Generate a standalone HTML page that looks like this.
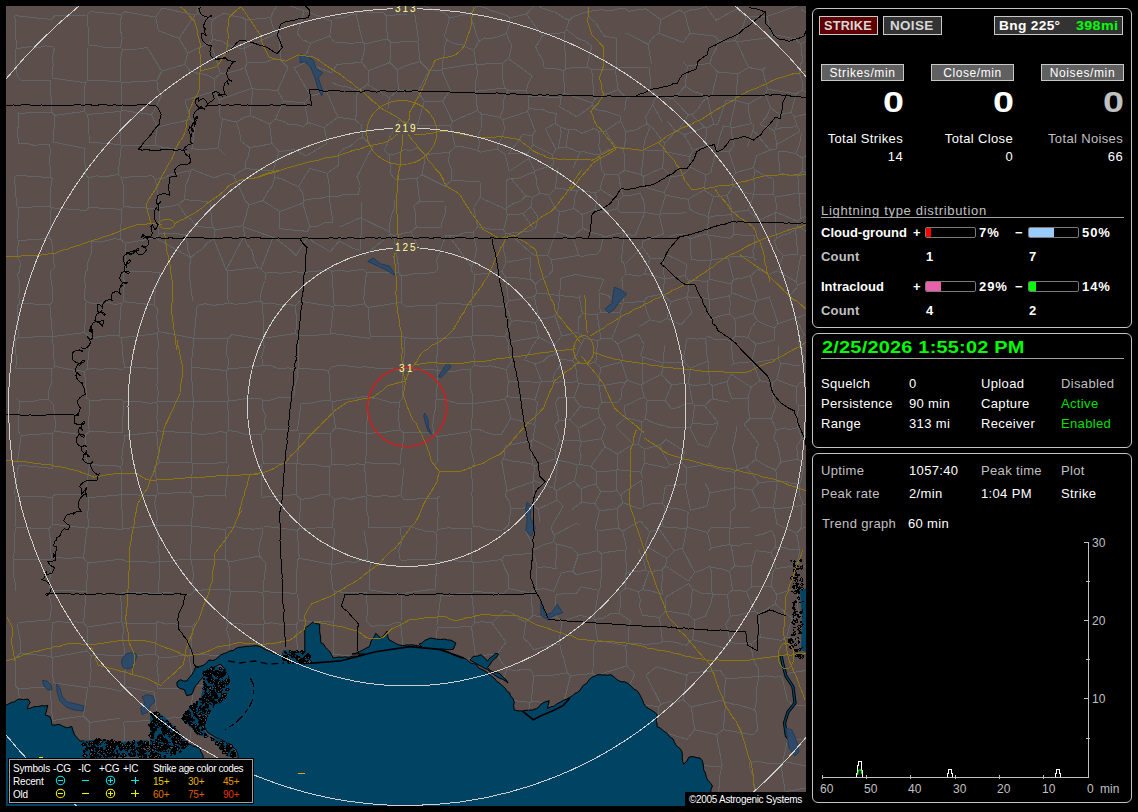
<!DOCTYPE html>
<html><head><meta charset="utf-8">
<style>
html,body{margin:0;padding:0;background:#000;width:1138px;height:812px;overflow:hidden;font-family:"Liberation Sans",sans-serif;}
.a{position:absolute;white-space:pre;line-height:1;}
.box{position:absolute;border:1px solid #c4c4c4;border-radius:6px;box-sizing:border-box;}
.btn{position:absolute;box-sizing:border-box;border:1px solid #c8c8c8;}
.n{font-size:13px;letter-spacing:0.35px;color:#fff;}
.g{color:#c0c0c0;}
.b{font-weight:bold;}
.r{text-align:right;}
.lg{font-size:10px;letter-spacing:-0.2px;}
.bar{position:absolute;width:51px;height:11px;box-sizing:border-box;border:1px solid #7a7a7a;border-radius:2px;overflow:hidden;}
.bar i{position:absolute;left:0;top:0;bottom:0;display:block;}
#map{position:absolute;left:6px;top:6px;width:800px;height:800px;background:#5c4f4b;overflow:hidden;}
#map svg{position:absolute;left:0;top:0;}
</style></head><body>
<div id="map"><svg width="800" height="800" viewBox="6 6 800 800" style="position:absolute;left:0;top:0">
<path d="M158.8,208.7 L124.1,206.7 M158.8,208.7 L159.7,207.5 M159.7,207.5 L155.4,179.3 M124.1,206.7 L123.4,198.7 L124.0,190.8 L123.4,185.5 L121.4,177.4 M121.4,177.4 L152.4,175.8 M152.4,175.8 L155.4,179.3 M118.0,174.3 L121.5,145.5 M118.0,174.3 L121.4,177.4 M121.5,145.5 L154.8,145.5 M158.7,331.5 L193.9,338.3 M158.7,331.5 L157.2,324.9 L156.9,315.9 L157.8,309.2 M197.2,305.5 L193.9,338.3 M118.0,174.3 L110.5,175.9 L102.6,176.8 L96.5,175.8 L88.7,177.9 M88.7,177.9 L88.8,207.4 M124.1,206.7 L121.5,209.3 M88.8,207.4 L121.5,209.3 M20.0,303.3 L18.6,295.7 L19.8,290.2 L19.3,281.5 L17.1,274.5 M20.0,303.3 L49.8,304.8 M49.9,272.5 L51.2,279.8 L52.1,287.0 L52.9,294.7 L52.1,302.2 M17.1,274.5 L19.4,272.2 M49.8,304.8 L52.1,302.2 M17.0,306.4 L20.0,303.3 M85.9,271.4 L84.4,280.1 L85.6,286.5 L84.2,293.4 L85.1,300.2 M54.4,267.4 L49.9,272.5 M17.7,239.5 L18.9,240.6 M18.9,240.6 L17.6,248.4 L17.9,257.4 L20.4,262.9 L19.4,272.2 M299.4,301.1 L333.5,306.6 M299.4,301.1 L295.4,305.9 M295.4,305.9 L296.1,314.6 L296.8,323.3 L295.5,333.4 M329.1,334.7 L298.3,335.7 M329.1,334.7 L330.4,333.3 M330.4,333.3 L333.5,306.6 M295.5,333.4 L298.3,335.7 M810.7,705.4 L818.3,732.0 M810.7,705.4 L819.2,697.2 M820.0,756.2 L813.8,740.3 M818.3,732.0 L813.8,740.3 M232.1,334.5 L262.6,339.4 M262.6,339.4 L263.7,338.2 M263.7,338.2 L262.7,303.4 M228.6,303.6 L235.8,304.1 L244.9,303.7 L253.3,302.0 L260.5,300.9 M260.5,300.9 L262.7,303.4 M197.2,305.5 L204.8,303.7 L213.9,305.3 L221.0,304.5 L228.1,303.2 M193.9,338.3 L194.0,338.4 M194.0,338.4 L227.7,338.7 M227.7,338.7 L232.1,334.5 M295.4,305.9 L288.5,304.3 L279.6,304.8 L270.6,303.0 L262.7,303.4 M295.5,333.4 L263.7,338.2 M85.1,300.2 L86.1,301.4 M86.1,301.4 L84.6,332.5 M49.8,304.8 L52.6,336.5 M84.6,332.5 L52.6,336.5 M88.7,177.9 L85.7,175.3 M121.5,145.5 L120.8,144.6 M85.7,175.3 L84.0,148.2 M89.3,142.2 L120.8,144.6 M155.1,145.2 L155.8,137.5 L157.3,127.0 M155.1,145.2 L162.5,147.3 L173.5,148.6 L180.8,150.3 L189.1,152.7 M157.3,127.0 L190.5,119.4 M191.9,148.6 L195.4,123.4 M195.4,123.4 L190.5,119.4 M151.2,114.7 L157.3,127.0 M151.2,114.7 L154.8,109.7 L158.5,101.7 L161.3,95.8 M185.0,101.7 L188.1,110.7 L190.5,119.4 M209.8,202.3 L201.7,201.1 L192.9,200.1 L184.0,199.9 M184.0,199.9 L184.9,194.0 L186.0,183.8 L189.1,177.1 L190.6,170.7 M214.0,177.9 L191.9,169.3 M190.6,170.7 L191.9,169.3 M159.7,207.5 L169.6,206.6 L178.5,204.5 M155.4,179.3 L163.9,178.1 L170.1,174.4 L175.2,173.9 L185.0,171.8 L190.6,170.7 M178.5,204.5 L184.0,199.9 M154.8,145.5 L155.1,145.2 M87.7,269.7 L85.9,271.4 M121.2,303.8 L114.4,304.3 L105.7,301.9 L99.2,303.4 L92.0,303.2 L86.1,301.4 M121.2,303.8 L123.4,301.6 M123.4,301.6 L123.3,292.0 L124.5,283.2 L122.9,274.5 M87.7,269.7 L87.3,263.5 L91.0,254.2 L91.2,247.5 L91.3,241.1 M125.3,243.2 L125.2,271.7 M125.3,243.2 L120.5,239.3 M91.3,241.1 L100.0,242.1 L107.4,240.6 L113.7,238.7 L120.5,239.3 M122.9,274.5 L125.2,271.7 M192.7,301.2 L189.1,274.3 M157.8,309.2 L154.1,305.1 M154.1,305.1 L154.8,295.8 L155.9,287.6 L158.6,281.3 L159.8,272.2 M154.1,305.1 L123.4,301.6 M125.2,271.7 L159.7,272.1 M159.7,272.1 L159.8,272.2 M86.4,210.5 L51.1,207.8 M51.1,207.8 L49.7,238.4 M49.7,238.4 L51.7,240.4 M88.8,207.4 L86.4,210.5 M121.5,209.3 L120.5,239.3 M54.4,267.4 L51.7,240.4 M18.9,240.6 L49.7,238.4 M50.2,206.6 L50.1,198.3 L50.8,186.9 L52.2,178.8 M50.2,206.6 L18.2,207.3 M52.2,178.8 L51.1,177.6 M51.1,177.6 L17.0,175.3 M18.2,207.3 L16.7,205.8 M16.7,205.8 L14.4,177.7 M14.4,177.7 L17.0,175.3 M51.1,207.8 L50.2,206.6 M17.7,239.5 L18.2,207.3 M84.0,148.2 L52.9,142.0 M49.8,145.0 L50.4,152.2 L49.2,160.1 L50.3,168.2 L51.1,177.6 M49.8,145.0 L42.0,144.1 L34.7,145.7 L26.3,143.0 L19.5,143.8 M18.8,143.1 L19.5,143.8 M810.0,669.8 L813.0,646.6 M816.7,643.9 L813.0,646.6 M819.2,697.2 L818.4,686.1 L818.1,677.1 M783.9,674.0 L810.0,669.8 M781.2,640.4 L786.6,637.1 M786.6,637.1 L793.6,638.5 L800.2,640.6 L806.4,643.8 L813.0,646.6 M810.7,705.4 L793.2,705.5 M813.8,740.3 L805.8,739.5 L795.6,739.3 L787.9,738.0 M787.9,738.0 L784.8,734.5 M749.1,803.4 L749.4,812.1 L752.2,818.3 M749.1,803.4 L719.2,796.2 M719.2,796.2 L711.8,820.0 M820.0,758.9 L816.0,768.2 M787.9,738.0 L783.0,761.2 M783.0,761.2 L816.0,768.2 M819.1,789.6 L816.3,786.6 M816.0,768.2 L815.6,776.7 L816.3,786.6 M756.6,791.3 L753.8,783.8 L753.3,776.7 L749.8,768.4 L748.9,762.5 M748.9,762.5 L749.0,762.4 M749.0,762.4 L758.2,761.5 L764.9,762.9 L771.9,763.7 L780.8,763.4 M780.8,763.4 L785.1,791.1 M753.4,734.9 L757.7,729.8 M783.0,761.2 L780.8,763.4 M785.5,791.5 L794.2,790.2 L799.8,789.0 L807.5,788.4 L816.3,786.6 M785.5,791.5 L785.1,791.1 M185.0,101.7 L186.1,100.0 M161.3,95.8 L157.7,88.8 L156.9,80.6 M184.7,64.5 L190.2,70.7 M184.7,64.5 L161.7,71.2 M156.9,80.6 L161.7,71.2 M233.6,175.6 L226.9,173.3 M233.6,175.6 L245.7,201.1 M226.9,173.3 L214.0,177.9 M209.8,202.3 L210.0,202.7 M178.5,204.5 L182.5,210.6 L186.6,216.9 L191.5,219.5 L196.1,226.4 M210.0,202.7 L212.4,227.1 M196.1,226.4 L205.3,227.2 L212.4,227.1 M242.8,225.8 L215.2,229.8 M242.8,225.8 L245.6,217.7 L246.7,212.3 L249.1,204.8 M245.7,201.1 L249.1,204.8 M212.4,227.1 L215.2,229.8 M356.0,13.9 L358.4,11.8 M356.0,13.9 L350.5,14.7 L343.3,17.6 L335.2,18.1 M89.3,142.2 L89.0,134.4 L88.7,125.1 L87.7,114.5 M120.8,144.6 L121.0,111.4 M87.7,114.5 L121.0,111.4 M52.9,142.0 L55.1,115.4 M55.1,115.4 L84.2,111.4 M87.7,114.5 L84.2,111.4 M151.2,114.7 L122.0,110.3 M122.0,110.3 L121.0,111.4 M156.9,80.6 L121.6,82.5 M122.0,110.3 L121.6,82.5 M51.8,112.1 L50.1,80.3 M51.8,112.1 L18.1,113.3 M16.7,111.9 L18.1,113.3 M20.9,80.1 L50.1,80.3 M18.8,143.1 L17.7,135.8 L17.8,129.0 L18.9,121.6 L18.1,113.3 M55.1,115.4 L51.8,112.1 M298.3,335.7 L299.0,368.1 M332.3,366.5 L328.8,370.3 M299.0,368.1 L328.8,370.3 M434.6,465.2 L437.0,461.8 M437.0,461.8 L437.0,436.6 M403.1,432.7 L433.2,432.7 M403.1,432.7 L403.2,440.5 L402.2,447.5 L400.6,455.8 L400.0,464.1 M437.0,436.6 L433.2,432.7 M719.2,796.2 L717.8,793.5 M717.8,793.5 L719.8,783.6 L719.7,776.3 L721.8,766.4 M721.8,766.4 L722.3,766.0 M754.6,710.0 L756.1,702.2 L756.1,691.9 L757.4,683.5 L758.9,676.5 M754.6,710.0 L755.9,711.9 M787.4,700.4 L781.9,676.1 M781.9,676.1 L775.6,677.2 L765.8,675.9 L758.9,676.5 M757.7,729.8 L755.9,711.9 M793.2,705.5 L787.4,700.4 M810.5,818.8 L801.9,819.7 L800.4,820.0 M752.2,818.3 L758.3,820.0 M819.1,789.6 L810.5,818.8 M785.5,791.5 L785.0,820.0 M158.7,331.5 L156.9,333.6 M156.9,333.6 L158.0,340.1 L158.0,348.8 L156.8,353.7 L157.8,361.3 L157.1,368.7 M191.0,367.2 L194.0,338.4 M157.6,369.1 L157.1,368.7 M644.2,273.7 L664.1,278.4 M644.2,273.7 L650.3,258.3 M664.1,278.4 L663.6,258.0 M663.6,258.0 L650.3,258.3 M279.6,228.7 L279.8,211.5 M279.6,228.7 L307.6,231.4 M279.8,211.5 L302.7,203.2 M302.7,203.2 L309.8,226.7 M307.6,231.4 L309.8,226.7 M573.7,208.4 L566.1,210.7 L559.5,212.0 M573.7,208.4 L574.7,197.8 L577.5,190.1 M559.5,212.0 L554.6,207.7 M555.2,188.8 L562.0,188.4 L571.1,190.9 L577.5,190.1 M555.2,188.8 L548.8,195.2 M548.8,195.2 L554.6,207.7 M401.4,302.2 L405.1,306.3 M401.4,302.2 L401.5,276.0 M438.6,302.9 L436.1,305.4 M405.1,306.3 L436.1,305.4 M435.3,272.2 L427.2,273.2 L417.3,273.2 L409.4,274.8 L401.5,276.0 M364.3,303.8 L368.1,307.5 M364.3,303.8 L363.8,297.5 L364.7,289.3 L365.3,280.7 L366.7,272.6 M368.1,307.5 L401.4,302.2 M366.7,272.6 L398.0,272.2 M401.5,276.0 L398.0,272.2 M364.3,303.8 L356.1,305.2 L349.2,306.3 L340.4,305.1 L334.2,306.0 M334.2,306.0 L331.8,271.3 M366.7,272.6 L363.8,269.6 M363.8,269.6 L356.8,270.1 L347.4,271.3 L338.6,270.2 L331.8,271.3 M333.5,306.6 L334.2,306.0 M298.0,273.0 L329.9,269.8 M331.8,271.3 L329.9,269.8 M18.5,465.0 L14.4,494.7 M15.5,496.2 L15.0,525.8 M121.7,621.7 L120.8,594.8 M121.7,621.7 L87.2,627.1 M87.2,627.1 L83.6,622.7 M86.3,591.4 L83.6,622.7 M15.5,496.2 L52.7,497.2 M52.7,497.2 L52.8,524.3 M15.0,525.8 L16.2,527.3 M16.2,527.3 L48.6,528.9 M52.8,524.3 L48.6,528.9 M90.6,337.6 L87.0,369.1 M90.6,337.6 L96.7,337.1 L104.7,336.2 L112.9,335.2 L118.9,335.6 M87.0,369.1 L93.9,368.7 L101.9,369.5 L108.2,368.1 L117.6,369.0 L123.5,369.5 M121.0,337.7 L118.9,335.6 M121.0,337.7 L122.1,344.7 L122.5,353.8 L123.5,360.0 L125.0,367.8 M125.0,367.8 L123.5,369.5 M121.2,303.8 L118.9,335.6 M84.6,332.5 L90.6,337.6 M156.9,333.6 L121.0,337.7 M157.1,368.7 L149.5,368.3 L140.7,367.4 L133.9,367.9 L125.0,367.8 M89.5,400.7 L97.1,401.0 L103.9,399.0 L114.7,400.0 L121.2,399.0 M89.5,400.7 L86.7,398.0 M87.0,369.1 L84.6,371.4 M86.7,398.0 L84.6,371.4 M17.3,463.2 L21.3,435.4 M18.0,431.3 L21.3,435.4 M52.6,336.5 L52.5,336.6 M84.6,371.4 L76.3,370.5 L68.4,369.2 L61.0,367.6 L54.5,366.3 M52.5,336.6 L54.5,366.3 M17.0,306.4 L18.4,337.3 M52.5,336.6 L18.4,337.3 M53.5,404.3 L49.0,399.7 M49.0,399.7 L48.6,391.4 L51.0,384.5 L51.5,377.5 L51.8,369.0 M54.5,366.3 L51.8,369.0 M19.4,401.5 L18.0,431.3 M19.4,401.5 L16.2,398.4 M159.6,561.5 L159.2,555.1 L157.9,547.0 L159.1,541.0 L157.5,531.7 L156.4,525.7 M159.6,561.5 L151.1,562.6 L146.8,561.8 L137.6,562.0 L130.2,561.7 L124.0,560.6 M156.4,525.7 L156.1,525.4 M156.1,525.4 L122.6,528.8 M124.0,560.6 L122.7,559.0 M121.9,529.5 L122.6,528.8 M158.3,593.6 L151.9,593.4 L145.4,592.2 L138.5,592.3 L128.9,592.0 L123.3,592.2 M158.3,593.6 L158.5,593.4 M159.8,561.7 L158.5,593.4 M159.8,561.7 L159.6,561.5 M161.8,8.0 L195.1,14.8 M195.1,14.8 L198.1,13.7 M198.1,13.7 L196.4,0.0 M54.7,15.5 L87.3,15.0 M87.3,15.0 L90.2,11.6 M191.9,148.6 L201.7,149.8 L209.0,149.0 L217.9,147.9 M217.9,147.9 L224.8,155.1 M240.9,141.0 L239.6,132.2 L236.4,122.1 M217.9,147.9 L222.5,119.1 M236.4,122.1 L222.5,119.1 M220.1,117.5 L222.5,119.1 M190.7,257.7 L157.0,238.8 M190.7,257.7 L190.7,257.6 M190.7,257.6 L187.9,250.4 L187.1,242.9 L185.5,234.3 M185.5,234.3 L158.9,233.0 M158.9,233.0 L156.6,237.7 M190.0,273.2 L189.7,266.2 L190.7,257.7 M190.0,273.2 L189.1,274.3 M226.0,269.5 L213.8,238.9 M213.8,238.9 L207.7,242.7 L201.4,249.6 L196.1,252.9 L190.7,257.6 M213.8,238.9 L215.2,229.8 M196.1,226.4 L185.5,234.3 M158.8,208.7 L159.6,217.9 L158.5,224.0 L158.9,233.0 M125.3,243.2 L156.6,237.7 M273.4,237.1 L279.5,241.5 L284.8,245.4 L291.6,251.0 L296.0,255.7 M273.1,237.3 L261.0,268.7 M296.3,271.4 L287.6,272.6 L280.4,273.3 L271.8,272.1 L265.3,273.3 M265.3,273.3 L261.0,268.7 M262.8,200.6 L279.8,211.5 M262.8,200.6 L249.1,204.8 M242.8,225.8 L243.8,227.2 M243.8,227.2 L273.1,237.3 M307.9,236.8 L296.0,255.7 M298.0,273.0 L296.3,271.4 M307.9,236.8 L314.6,242.9 L323.0,247.2 L330.2,252.0 M260.5,300.9 L260.6,294.8 L262.3,288.2 L265.0,280.7 L265.3,273.3 M257.7,267.6 L254.1,260.1 L252.3,250.7 L246.3,243.3 L244.2,235.6 M257.7,267.6 L227.4,270.8 M244.2,235.6 L226.2,269.7 M227.4,270.8 L226.2,269.7 M243.8,227.2 L244.2,235.6 M261.0,268.7 L257.7,267.6 M228.1,303.2 L227.4,270.8 M226.0,269.5 L226.2,269.7 M212.1,20.1 L223.8,13.2 M212.1,20.1 L198.1,13.7 M304.1,10.8 L297.3,33.5 M304.1,10.8 L304.6,10.6 M304.6,10.6 L331.9,21.2 M310.6,43.2 L329.7,36.0 M310.6,43.2 L302.5,39.7 L297.3,33.5 M329.7,36.0 L331.9,21.2 M356.0,13.9 L362.8,42.4 M334.0,42.0 L341.4,42.2 L347.6,43.1 L355.0,43.0 L362.8,42.4 M334.0,42.0 L329.7,36.0 M288.1,67.7 L280.1,59.8 M280.1,59.8 L280.1,52.3 L279.5,45.4 L281.1,37.5 M310.6,43.2 L306.8,53.0 L305.2,62.4 M294.4,67.9 L305.2,62.4 M362.8,42.4 L364.5,44.0 M364.5,44.0 L364.0,51.8 L361.3,62.3 M361.3,62.3 L337.0,64.5 M305.2,62.4 L331.6,72.8 M337.0,64.5 L331.6,72.8 M310.6,96.1 L326.6,91.6 M310.6,96.1 L294.4,67.9 M640.0,276.1 L625.9,274.2 M625.9,274.2 L621.8,278.3 M621.8,278.3 L624.1,302.8 M624.1,302.8 L644.0,301.4 M644.0,301.4 L647.1,297.1 M644.2,273.7 L640.0,276.1 M664.1,278.4 L664.7,279.1 M647.1,297.1 L662.4,294.0 M664.7,279.1 L662.4,294.0 M820.0,303.5 L819.4,304.1 M819.7,275.6 L797.6,285.1 M797.6,285.1 L797.4,286.8 M262.6,339.4 L264.3,347.1 L261.6,357.3 L263.2,365.1 M299.0,368.1 L297.3,369.6 M297.3,369.6 L288.5,367.9 L279.0,368.7 L271.8,366.0 L263.2,365.1 M328.8,370.3 L330.5,400.4 M297.3,369.6 L297.2,378.6 L294.1,387.5 L294.0,396.9 M301.0,403.9 L308.1,403.5 L315.9,402.0 L323.4,400.5 L330.5,400.4 M266.1,428.9 L297.4,430.5 M266.1,428.9 L264.1,421.3 L265.7,416.0 L262.3,407.7 L263.0,400.2 M294.0,396.9 L287.2,397.6 L277.4,397.9 L271.4,400.0 L263.0,400.2 M301.0,403.9 L297.4,430.5 M263.1,463.1 L271.9,463.7 L278.5,463.2 L287.8,463.8 L296.7,463.7 M263.1,463.1 L261.7,434.7 M261.7,434.7 L266.1,428.9 M296.7,463.7 L297.1,463.4 M297.1,463.4 L299.5,433.2 M229.2,400.2 L236.8,400.1 L246.5,398.5 L254.4,398.1 L261.8,399.1 M229.2,400.2 L227.1,393.4 L227.5,384.4 L226.8,377.9 L226.5,370.5 M227.6,369.1 L226.5,370.5 M227.6,369.1 L262.9,365.6 M227.9,401.6 L228.3,430.6 M227.9,401.6 L229.2,400.2 M228.3,430.6 L236.3,431.4 L244.1,434.1 L252.8,434.1 L261.7,434.7 M263.0,400.2 L261.8,399.1 M191.0,367.2 L226.5,370.5 M227.7,338.7 L227.0,345.1 L226.3,353.7 L228.8,360.6 L227.6,369.1 M330.4,333.3 L369.1,338.3 M332.3,366.5 L340.1,365.4 L349.4,366.1 L359.1,367.5 L366.3,366.2 M368.1,307.5 L370.3,336.9 M369.1,338.3 L370.3,336.9 M370.3,336.9 L403.3,336.0 M437.1,338.8 L436.1,305.4 M437.1,338.8 L405.1,337.9 M405.1,337.9 L403.3,336.0 M403.4,368.7 L402.6,369.5 M403.4,368.7 L405.1,337.9 M366.3,366.2 L367.4,367.6 M367.4,367.6 L402.6,369.5 M556.2,594.7 L565.1,593.5 L576.4,593.5 M556.2,594.7 L555.1,601.9 L555.7,609.8 L557.1,617.5 M579.9,615.4 L561.5,621.4 M557.1,617.5 L561.5,621.4 M580.8,586.8 L576.4,593.5 M580.8,586.8 L598.6,590.3 M579.9,615.4 L594.0,618.5 M594.0,618.5 L598.6,590.3 M641.4,480.1 L644.0,506.4 M641.4,480.1 L620.8,494.7 M622.7,502.6 L620.8,494.7 M622.7,502.6 L640.4,509.1 M640.4,509.1 L644.0,506.4 M472.1,403.4 L472.5,403.8 M472.1,403.4 L463.6,403.4 L456.6,403.2 L450.4,401.4 L444.6,399.2 L436.4,399.6 M436.4,399.6 L435.7,400.3 M435.7,400.3 L435.3,409.1 L433.8,416.5 L432.9,424.4 L433.2,432.7 M437.0,436.6 L469.6,431.8 M472.5,403.8 L471.6,429.5 M469.6,431.8 L471.6,429.5 M437.1,498.4 L403.9,499.4 M437.1,498.4 L439.3,496.1 M403.8,468.5 L401.0,495.7 M403.9,499.4 L401.0,495.7 M471.5,626.8 L438.1,627.4 M471.5,626.8 L474.9,622.7 M436.8,625.5 L438.1,627.4 M436.8,625.5 L441.0,595.3 M474.9,622.7 L471.6,593.8 M471.6,593.8 L463.5,593.9 L457.5,593.9 L450.1,596.1 L441.0,595.3 M471.4,495.6 L472.9,487.6 L472.7,481.5 L471.0,475.4 L472.0,466.6 M469.6,431.8 L471.7,440.0 L470.7,448.9 L472.2,455.0 L474.4,463.7 M472.0,466.6 L474.4,463.7 M66.2,815.0 L88.4,816.9 M88.4,816.9 L88.5,816.9 M53.5,815.0 L51.5,817.3 M88.5,816.9 L120.0,816.6 M120.1,815.0 L120.0,816.6 M120.0,816.6 L121.1,817.7 M691.2,706.8 L694.7,729.6 M691.2,706.8 L723.8,699.8 M694.7,729.6 L716.6,734.8 M725.7,702.1 L723.3,729.7 M723.3,729.7 L716.6,734.8 M721.8,766.4 L712.5,766.4 L704.4,765.4 L703.0,765.0 M722.3,766.0 L716.6,734.8 M687.0,739.4 L694.7,729.6 M686.4,760.6 L685.2,759.4 M758.9,676.5 L726.1,678.9 M758.9,676.5 L758.9,676.5 M726.1,678.9 L724.6,687.8 L723.8,699.8 M754.6,710.0 L746.5,707.3 L738.7,704.9 L733.5,704.3 L725.7,702.1 M753.4,734.9 L723.3,729.7 M687.2,675.2 L656.4,666.8 M687.2,675.2 L683.1,699.6 M683.1,699.6 L675.4,702.6 L669.5,701.6 L661.0,704.3 M656.4,666.8 L646.0,675.0 M646.0,675.0 L661.0,704.3 M659.9,643.4 L652.9,643.9 L644.1,644.2 L635.0,643.3 L628.0,643.1 M625.7,645.8 L628.0,643.1 M625.7,645.8 L627.1,665.9 M627.1,665.9 L634.9,673.6 M683.1,699.6 L691.2,706.8 M666.1,732.8 L687.0,739.4 M656.8,724.2 L657.0,723.2 L658.7,714.6 L658.8,706.9 M661.0,704.3 L658.8,706.9 M594.0,644.8 L597.8,640.1 M594.0,644.8 L592.8,673.4 M597.8,640.1 L625.7,645.8 M627.1,665.9 L598.9,674.6 M597.4,675.1 L595.8,675.6 M592.8,673.4 L595.8,675.6 M567.4,672.8 L559.4,674.1 L551.9,675.3 L542.0,675.2 L533.7,676.2 M567.4,672.8 L565.1,664.6 L564.2,659.6 L561.3,652.2 L560.3,644.6 M559.9,644.2 L550.1,644.9 L542.5,647.4 L533.9,649.7 M530.1,669.2 L533.7,676.2 M556.4,707.5 L551.8,707.0 L545.5,703.6 L539.6,702.0 L531.3,701.4 M531.3,701.4 L533.7,676.2 M570.5,675.7 L563.9,701.9 M570.5,675.7 L567.4,672.8 M570.5,675.7 L592.8,673.4 M597.8,640.1 L596.1,630.8 L594.9,619.3 M561.5,621.4 L561.2,628.2 L559.8,636.6 L559.9,644.2 M717.8,793.5 L710.7,793.0 M159.8,561.7 L168.8,562.0 L175.3,560.6 L181.3,559.4 L190.4,559.1 M191.1,525.5 L156.4,525.7 M191.1,525.5 L191.7,526.2 M190.4,559.1 L191.7,526.2 M192.6,463.9 L190.9,492.4 M192.6,463.9 L226.6,462.7 M225.1,495.8 L193.7,496.1 M225.1,495.8 L228.4,464.5 M190.9,492.4 L193.7,496.1 M228.4,464.5 L226.6,462.7 M154.7,466.9 L159.2,462.1 M154.7,466.9 L158.2,493.5 M158.2,493.5 L190.9,492.4 M191.6,462.7 L159.2,462.1 M191.6,462.7 L192.6,463.9 M226.4,432.7 L220.2,431.4 L213.5,433.4 L204.6,434.2 L199.2,434.2 L191.1,433.1 M226.4,432.7 L226.6,462.7 M191.6,462.7 L191.1,433.1 M261.1,465.3 L261.8,496.8 M227.0,497.8 L225.1,495.8 M191.1,525.5 L192.1,517.6 L192.6,512.1 L193.3,504.7 L193.7,496.1 M158.2,493.5 L156.1,496.0 M156.1,496.0 L154.7,503.3 L156.2,511.4 L157.5,518.5 L156.1,525.4 M261.1,465.3 L263.1,463.1 M226.4,432.7 L228.3,430.6 M557.9,168.4 L555.2,188.8 M645.0,212.4 L643.9,201.4 L640.1,193.3 M645.0,212.4 L644.6,212.7 M623.3,195.7 L630.4,195.4 L640.1,193.3 M623.3,195.7 L618.7,200.5 M644.6,212.7 L637.5,212.0 L628.1,212.0 L620.4,212.8 M620.4,212.8 L617.6,208.7 M618.7,200.5 L617.6,208.7 M582.2,214.4 L582.8,228.3 M582.2,214.4 L595.2,209.3 M595.2,209.3 L601.4,212.8 M582.8,228.3 L593.1,232.9 L601.6,234.7 M573.7,208.4 L582.2,214.4 M559.5,212.0 L557.2,232.2 M572.7,236.9 L557.2,232.2 M572.7,236.9 L582.8,228.3 M578.5,189.1 L586.0,191.2 L595.4,192.9 M595.4,192.9 L596.6,199.6 L595.2,209.3 M618.7,200.5 L600.4,189.6 M617.6,208.7 L601.4,212.8 M595.4,192.9 L600.4,189.6 M667.5,255.0 L686.8,264.4 M691.3,259.7 L690.7,249.4 L690.7,238.7 M668.6,236.8 L674.8,235.0 L683.7,234.1 M683.7,234.1 L690.7,238.7 M664.7,279.1 L685.3,275.5 M685.3,275.5 L686.8,264.4 M555.3,233.4 L557.2,232.2 M555.3,233.4 L547.8,255.8 M572.7,236.9 L578.8,255.3 M547.8,255.8 L551.5,259.9 M551.5,259.9 L578.8,255.3 M233.6,175.6 L245.2,168.6 M262.8,200.6 L267.8,191.9 L272.3,185.7 L275.0,176.9 M275.0,176.9 L273.2,171.0 M273.2,171.0 L245.2,168.6 M240.9,141.0 L249.4,147.6 M245.2,168.6 L245.4,162.4 L248.8,155.0 L249.4,147.6 M303.9,200.4 L302.7,193.0 L298.6,186.7 M303.9,200.4 L313.5,198.4 L321.1,198.1 L328.9,196.2 M298.6,186.7 L302.7,179.9 L305.6,174.6 L310.2,168.4 M329.0,196.0 L328.9,196.2 M329.0,196.0 L329.6,187.7 L328.5,181.5 L327.4,173.4 M327.4,173.4 L310.2,168.4 M275.0,176.9 L283.7,179.6 L289.6,182.8 L298.6,186.7 M302.7,203.2 L303.9,200.4 M333.0,222.8 L328.9,196.2 M333.0,222.8 L324.2,223.0 L317.1,226.6 L309.8,226.7 M337.9,117.3 L326.6,91.6 M337.9,117.3 L355.0,119.7 M332.4,82.6 L339.6,85.8 L348.1,87.2 L357.9,90.6 M355.0,119.7 L356.8,112.2 L356.3,103.8 L356.7,97.1 L357.9,90.6 M368.5,70.6 L361.3,62.3 M368.5,70.6 L369.0,77.7 L367.7,84.6 M367.7,84.6 L357.9,90.6 M358.4,11.8 L383.3,12.4 M364.5,44.0 L387.4,38.9 M387.4,38.9 L386.1,15.7 M383.3,12.4 L386.1,15.7 M387.4,38.9 L390.7,42.3 M368.5,70.6 L389.9,62.5 M389.9,62.5 L390.7,42.3 M530.9,206.7 L538.0,216.8 M530.9,206.7 L522.8,213.8 M522.8,213.8 L528.1,221.0 L533.5,228.8 M538.0,216.8 L535.7,228.0 M535.7,228.0 L533.5,228.8 M547.8,255.8 L533.7,255.2 M531.4,230.7 L533.5,228.8 M411.0,231.8 L414.7,240.0 L419.9,249.6 M411.0,231.8 L393.7,235.5 M393.7,235.5 L398.5,266.6 M398.0,272.2 L398.5,266.6 M390.7,234.0 L364.3,255.6 M390.7,234.0 L393.7,235.5 M416.3,227.4 L415.5,219.9 L415.8,214.4 L413.9,206.1 M416.3,227.4 L411.0,231.8 M390.7,234.0 L389.1,231.6 M394.4,200.3 L394.2,200.4 M394.2,200.4 L394.2,208.7 L391.1,216.1 L389.7,223.7 L389.1,231.6 M339.9,226.9 L361.0,217.5 M339.3,241.0 L347.6,245.4 L353.4,248.6 L360.5,250.3 M360.5,250.3 L361.6,218.2 M361.0,217.5 L361.6,218.2 M358.1,194.7 L351.9,194.8 L345.0,194.0 L337.3,196.7 L329.0,196.0 M361.6,202.3 L361.0,217.5 M330.2,252.0 L333.9,247.2 L339.3,241.0 M389.1,231.6 L361.6,218.2 M566.0,146.8 L568.6,129.9 M566.0,146.8 L558.2,148.2 M558.2,148.2 L559.7,140.0 L561.2,133.4 L560.6,127.2 M568.6,129.9 L560.6,127.2 M579.8,152.4 L566.0,146.8 M579.8,152.4 L581.8,151.1 M575.6,129.4 L568.6,129.9 M575.6,129.4 L582.2,133.5 M591.9,46.4 L585.0,41.1 L577.7,38.3 L572.7,34.0 L566.0,30.0 M591.9,46.4 L590.1,52.8 L588.5,59.1 L587.2,67.0 M587.2,67.0 L580.3,67.8 L572.7,67.5 L565.7,68.9 M565.7,68.9 L564.3,32.2 M566.0,30.0 L564.3,32.2 M587.3,11.9 L586.8,11.6 M587.3,11.9 L595.3,10.4 L601.6,9.7 L610.3,10.9 L619.8,8.6 L626.4,8.8 M604.5,36.1 L600.1,30.2 L596.0,22.7 L590.3,18.5 L587.3,11.9 M604.5,36.1 L616.8,38.4 M628.7,11.5 L626.4,8.8 M645.8,8.8 L638.2,9.6 L628.7,11.5 M18.5,465.0 L52.0,468.4 M52.7,497.2 L54.9,494.3 M16.2,527.3 L14.6,533.7 L14.5,541.5 L14.4,551.0 L12.8,558.4 M87.2,528.2 L83.4,557.9 M87.2,528.2 L88.8,526.9 M88.8,526.9 L121.9,529.5 M122.7,559.0 L87.7,563.1 M87.7,563.1 L83.4,557.9 M123.3,592.2 L120.8,594.8 M86.3,591.4 L86.3,591.4 M87.7,563.1 L86.9,571.1 L87.3,577.7 L86.3,584.5 L86.3,591.4 M52.8,524.3 L87.2,528.2 M48.6,528.9 L49.9,536.3 L50.5,542.4 L50.4,550.1 L51.6,558.2 M83.4,557.9 L74.0,557.8 L68.6,558.9 L60.2,557.6 L51.6,558.2 M89.2,431.2 L122.4,432.8 M89.2,431.2 L88.6,424.3 L88.9,416.8 L89.6,409.3 L89.5,400.7 M121.2,399.0 L123.5,401.6 M123.5,401.6 L122.4,432.8 M123.0,463.9 L121.9,457.9 L122.4,449.8 L123.9,443.4 L124.6,435.4 M159.2,462.1 L156.6,432.2 M156.6,432.2 L124.6,435.4 M15.8,339.9 L16.0,347.8 L15.8,352.8 L16.6,360.4 L15.8,368.4 M15.8,368.4 L15.3,369.0 M18.4,337.3 L15.8,339.9 M51.8,369.0 L15.8,368.4 M19.4,401.5 L27.6,401.5 L34.0,401.3 L42.1,399.2 L49.0,399.7 M14.9,15.6 L16.4,48.7 M14.9,15.6 L51.4,19.5 M16.4,48.7 L22.7,47.7 L30.3,46.6 L37.5,48.0 L45.4,45.9 L52.4,46.4 M14.8,15.5 L14.9,15.6 M54.7,15.5 L51.4,19.5 M17.3,76.4 L15.8,66.2 L15.7,58.4 L16.0,49.3 M20.9,80.1 L17.3,76.4 M16.4,48.7 L16.0,49.3 M147.3,47.5 L138.4,49.0 L131.4,49.1 L122.5,49.7 M122.5,49.7 L120.6,47.8 M120.6,47.8 L122.2,38.0 L120.6,30.6 L120.4,22.6 L121.6,14.5 M155.7,17.2 L158.3,30.6 M155.7,17.2 L124.8,11.7 M124.8,11.7 L121.6,14.5 M161.7,71.2 L147.3,47.5 M121.6,82.5 L120.9,81.6 M120.9,81.6 L120.6,72.7 L120.5,65.2 L121.0,56.7 L122.5,49.7 M178.9,38.4 L158.3,30.6 M178.9,38.4 L187.8,53.0 M187.8,53.0 L184.7,64.5 M87.3,15.0 L89.1,45.9 M90.2,11.6 L121.6,14.5 M89.1,45.9 L97.6,45.9 L106.1,47.7 L112.9,47.3 L120.6,47.8 M178.9,38.4 L195.1,14.8 M161.8,8.0 L155.7,17.2 M280.1,59.8 L272.2,59.4 L265.0,62.5 L254.1,62.7 L247.2,62.9 M281.1,37.5 L276.7,33.3 M276.7,33.3 L244.5,48.1 M244.5,48.1 L244.3,48.5 M244.3,48.5 L247.2,62.9 M187.8,53.0 L210.6,42.4 M212.1,20.1 L211.5,30.1 L212.8,39.3 M210.6,42.4 L212.8,39.3 M337.9,117.3 L330.1,123.1 L324.1,127.7 M310.6,96.1 L304.5,102.9 M324.1,127.7 L308.2,122.6 M304.5,102.9 L308.2,122.6 M288.1,67.7 L277.6,90.4 M277.6,90.4 L283.6,101.0 M304.5,102.9 L283.6,101.0 M276.7,33.3 L272.4,25.9 L270.6,17.7 M304.1,10.8 L294.4,7.3 L287.7,5.5 L278.3,3.0 M278.3,3.0 L274.0,10.1 L270.6,17.7 M244.5,48.1 L244.3,42.5 L246.1,33.1 L245.4,28.3 L245.5,20.0 M270.6,17.7 L245.5,20.0 M223.8,13.2 L234.2,16.2 L243.0,17.7 M244.3,48.5 L235.2,47.6 L227.3,44.8 L221.3,41.1 L212.8,39.3 M245.5,20.0 L243.0,17.7 M87.2,47.7 L88.0,80.1 M54.4,48.8 L52.5,57.4 L53.1,64.3 L52.8,71.7 L52.4,78.0 M52.4,78.0 L85.1,82.8 M85.1,82.8 L88.0,80.1 M120.9,81.6 L88.0,80.1 M52.4,46.4 L54.4,48.8 M84.2,111.4 L85.1,82.8 M735.3,336.4 L735.6,327.3 L734.8,318.7 M735.3,336.4 L730.8,340.5 M709.4,319.8 L720.8,315.6 L729.5,313.9 M730.8,340.5 L723.9,339.4 L714.1,339.0 L707.9,336.3 M734.8,318.7 L729.5,313.9 M710.5,260.9 L691.3,259.7 M710.5,260.9 L709.5,268.7 L709.8,279.4 M685.3,275.5 L688.4,280.6 M688.4,280.6 L707.4,281.2 M709.8,279.4 L707.4,281.2 M734.8,318.7 L753.1,313.1 M729.5,313.9 L730.2,304.0 L729.6,295.8 M755.8,301.7 L753.1,313.1 M755.8,301.7 L748.3,298.9 L738.7,295.3 L731.8,292.5 M731.8,292.5 L729.6,295.8 M767.5,89.2 L762.6,69.9 M767.5,89.2 L796.1,93.8 M762.6,69.9 L765.4,67.2 M800.3,64.4 L799.7,74.4 L802.5,82.4 L802.0,90.3 M796.1,93.8 L802.0,90.3 M797.6,285.1 L796.1,282.0 M796.1,282.0 L800.7,255.8 M800.7,255.8 L815.2,255.1 M798.8,193.0 L775.1,197.2 M798.8,193.0 L797.9,175.4 M797.9,175.4 L787.9,175.2 L780.1,172.8 M773.9,179.2 L772.9,194.5 M775.1,197.2 L772.9,194.5 M730.8,340.5 L733.4,363.4 M707.9,336.3 L705.6,338.3 M733.4,363.4 L731.2,366.1 M707.4,361.3 L705.6,338.3 M707.4,361.3 L708.3,361.9 M735.3,336.4 L747.8,337.2 M753.1,313.1 L757.2,320.6 M747.8,337.2 L751.7,327.4 L757.2,320.6 M819.1,336.3 L803.7,334.9 M818.6,308.6 L796.4,318.4 M803.7,334.9 L796.4,318.4 M819.4,304.1 L818.6,308.6 M797.4,286.8 L789.4,295.8 M789.4,295.8 L791.2,304.2 L793.8,311.1 L795.1,317.8 M795.1,317.8 L796.4,318.4 M727.2,381.2 L731.1,374.0 M727.2,381.2 L728.7,390.0 L732.0,398.6 M731.1,374.0 L751.1,387.2 M751.1,387.2 L747.7,398.5 M732.0,398.6 L747.7,398.5 M820.0,347.3 L811.9,361.7 M816.6,364.9 L811.9,361.7 M773.6,402.3 L775.9,406.3 M748.6,399.8 L748.2,408.2 L750.1,418.3 M750.1,418.3 L771.4,418.6 M775.9,406.3 L771.4,418.6 M819.1,336.3 L820.0,337.6 M705.2,482.7 L710.1,492.9 M710.1,492.9 L706.9,506.2 M706.9,506.2 L690.4,510.2 M690.4,510.2 L685.0,484.6 M685.0,484.6 L686.8,482.9 M600.7,491.5 L609.3,491.4 L617.0,490.7 M600.7,491.5 L596.1,484.5 M596.1,484.5 L596.7,471.6 M596.7,471.6 L616.0,470.7 M617.0,490.7 L616.0,470.7 M604.9,446.6 L617.1,454.0 M604.9,446.6 L590.8,466.4 M590.8,466.4 L596.7,471.6 M617.1,469.5 L617.1,454.0 M617.1,469.5 L616.0,470.7 M711.9,466.8 L710.2,463.6 M686.8,482.9 L686.0,467.9 M710.2,463.6 L686.0,467.9 M756.1,449.0 L759.0,444.2 M759.0,444.2 L744.1,424.2 M733.8,444.6 L737.1,425.5 M747.7,398.5 L748.6,399.8 M744.1,424.2 L750.1,418.3 M727.2,381.2 L712.7,385.8 M728.9,402.2 L712.1,398.7 M712.1,398.7 L712.7,385.8 M708.3,361.9 L709.5,383.7 M709.5,383.7 L712.7,385.8 M816.7,643.9 L819.6,635.6 L819.7,628.0 L820.0,626.9 M364.4,464.5 L367.1,495.3 M364.4,464.5 L357.1,463.8 L347.2,465.2 L340.5,464.6 L331.4,464.8 M331.4,464.8 L329.5,466.5 M329.5,466.5 L329.5,494.3 M334.6,499.5 L329.5,494.3 M334.6,499.5 L343.6,497.6 L350.7,499.5 L358.9,497.2 L366.1,496.6 M365.8,462.8 L400.0,464.1 M365.8,462.8 L364.4,464.5 M401.0,495.7 L391.2,496.5 L384.5,495.4 L376.8,496.7 L367.1,495.3 M297.1,463.4 L304.0,464.4 L313.1,464.2 L322.7,466.4 L329.5,466.5 M299.5,433.2 L330.7,433.2 M330.7,433.2 L331.4,464.8 M330.7,433.2 L335.5,427.9 M330.5,400.4 L331.9,401.6 M335.5,427.9 L331.9,401.6 M331.9,401.6 L367.0,396.1 M227.3,688.5 L224.3,685.4 M224.3,685.4 L225.6,671.4 M296.7,660.1 L296.2,655.5 M280.0,655.3 L296.2,655.5 M400.2,430.1 L399.0,422.2 L398.6,415.2 L399.0,408.7 L399.2,402.0 M400.2,430.1 L391.6,430.9 L383.1,432.7 L376.3,432.6 L366.7,433.7 M399.2,402.0 L390.8,402.4 L383.9,400.5 L375.8,398.2 L368.5,397.8 M368.5,397.8 L366.2,433.2 M366.7,433.7 L366.2,433.2 M403.1,432.7 L400.2,430.1 M402.8,398.3 L399.2,402.0 M365.8,462.8 L366.7,433.7 M402.8,398.3 L402.6,369.5 M367.0,396.1 L368.5,397.8 M335.5,427.9 L366.2,433.2 M262.9,648.2 L263.7,624.6 M229.6,651.2 L229.3,644.4 L229.2,638.2 L226.8,630.3 L227.5,623.6 M227.5,623.6 L263.7,624.6 M296.5,624.0 L297.1,630.8 L296.7,638.0 L297.2,645.5 L298.4,653.2 M296.5,624.0 L289.3,624.6 L281.5,624.5 L271.1,622.7 L264.2,624.0 M296.2,655.5 L298.4,653.2 M264.2,624.0 L263.7,624.6 M532.8,615.9 L530.9,593.3 M532.8,615.9 L541.1,616.2 L548.2,618.4 L557.1,617.5 M553.8,591.3 L544.4,588.9 L536.1,589.2 M530.9,593.3 L536.1,589.2 M599.8,589.5 L602.0,569.9 M624.9,575.6 L625.7,587.8 M625.7,587.8 L619.8,593.0 M594.9,619.3 L602.5,618.4 L610.3,614.0 L619.0,613.1 M599.8,589.5 L598.6,590.3 M619.8,593.0 L620.8,603.5 L619.0,613.1 M628.0,643.1 L628.2,635.0 L628.4,629.8 L630.5,621.0 M630.5,621.0 L619.0,613.1 M687.2,527.2 L687.3,518.8 L688.2,512.3 M687.2,527.2 L686.3,528.6 M688.2,512.3 L679.7,509.2 L673.1,508.6 L665.0,506.1 M665.0,506.1 L662.1,526.8 M686.3,528.6 L662.1,526.8 M662.4,503.1 L652.0,503.8 L644.0,506.4 M662.4,503.1 L665.0,506.1 M659.6,529.4 L649.7,531.7 M640.4,520.7 L649.7,531.7 M781.2,640.4 L760.2,637.0 M758.9,676.5 L758.2,668.1 L753.8,660.9 L751.9,651.0 L751.5,643.3 M760.2,637.0 L751.5,643.3 M491.9,622.9 L499.3,615.6 L504.9,610.5 M491.9,622.9 L506.0,642.2 M504.9,610.5 L512.5,613.2 L519.5,619.1 L525.9,622.1 M523.6,638.4 L525.9,622.1 M503.4,593.6 L473.6,591.4 M474.9,622.7 L482.9,621.7 L491.9,622.9 M473.6,591.4 L471.6,593.8 M497.2,654.0 L475.6,656.1 M497.2,654.0 L506.0,642.2 M475.6,656.1 L471.5,626.8 M532.8,615.9 L525.9,622.1 M503.4,593.6 L508.5,588.4 M530.9,593.3 L508.5,588.4 M497.2,654.0 L500.9,661.2 L507.1,669.3 M507.1,669.3 L515.9,670.6 L523.2,669.4 L530.1,669.2 M533.9,649.7 L528.9,642.9 L523.6,638.4 M473.6,591.4 L473.6,563.1 M473.6,563.1 L471.4,561.0 M435.6,588.9 L435.6,579.4 L436.7,569.2 L437.1,561.2 M471.4,561.0 L463.7,561.9 L455.4,560.5 L444.6,561.9 L437.1,561.2 M473.1,526.6 L480.3,527.0 L487.2,529.3 L495.7,530.1 L503.4,530.0 M473.1,526.6 L472.1,496.3 M503.4,530.0 L508.7,525.0 M508.7,525.0 L510.8,508.4 M510.8,508.4 L509.1,501.3 L505.1,495.1 M437.1,498.4 L437.1,507.3 L438.4,514.2 L437.4,521.1 L438.0,529.6 M471.4,528.5 L463.9,528.2 L453.5,528.1 L447.8,527.9 L438.0,529.6 M334.0,622.9 L333.3,622.1 M334.0,622.9 L333.5,654.2 M296.5,624.0 L299.2,620.7 M298.4,653.2 L332.1,655.5 M333.3,622.1 L299.2,620.7 M333.5,654.2 L332.1,655.5 M475.6,656.1 L474.3,657.8 M438.1,627.4 L436.2,634.3 L437.3,643.8 L436.5,649.1 M474.3,657.8 L466.7,659.3 L465.1,658.9 M507.1,669.3 L503.4,678.7 L500.2,683.5 M474.3,657.8 L474.8,664.8 M530.0,702.3 L531.3,701.4 M530.0,702.3 L513.5,700.7 M19.0,815.0 L19.0,817.1 M51.5,817.3 L19.2,817.4 M19.0,817.1 L19.2,817.4 M87.7,687.9 L53.6,682.8 M89.1,686.8 L90.3,679.0 L91.2,670.2 L90.2,664.1 L91.3,655.7 M53.6,682.8 L52.7,675.8 L53.0,664.5 L52.0,657.4 M52.0,657.4 L87.0,651.0 M87.0,651.0 L91.3,655.7 M83.5,715.9 L87.7,687.9 M83.5,715.9 L52.5,720.5 M52.5,720.5 L50.1,687.0 M154.3,691.8 L157.5,717.9 M157.3,688.6 L191.5,688.4 M191.5,688.4 L192.6,696.1 L191.5,702.9 L192.1,710.5 L191.9,718.5 M157.5,717.9 L167.5,718.7 L175.7,716.9 L182.2,717.9 L191.9,718.5 M123.3,760.0 L122.7,752.3 M83.5,715.9 L89.8,722.4 M120.6,691.4 L114.1,689.4 L104.0,687.7 L96.3,686.6 L89.1,686.8 M120.1,718.3 L89.8,722.4 M52.3,720.8 L52.6,724.9 M52.3,720.8 L52.5,720.5 M89.8,722.4 L89.6,743.6 M157.3,688.6 L158.3,680.6 L157.9,672.2 L156.9,664.8 L158.6,657.0 M191.5,688.4 L193.6,685.6 M193.6,685.6 L189.1,656.0 M158.6,657.0 L167.4,657.8 L174.8,656.5 L180.5,655.5 L189.1,656.0 M158.5,593.4 L168.1,592.4 L173.4,593.3 L182.6,594.2 L191.3,594.1 M195.0,623.6 L192.5,626.3 M158.0,621.7 L166.2,624.1 L174.7,623.4 L182.9,626.6 L192.5,626.3 M220.0,655.5 L190.6,654.2 M227.5,623.6 L226.5,622.5 M192.5,626.3 L190.6,654.2 M193.6,685.6 L224.3,685.4 M190.6,654.2 L189.1,656.0 M191.9,718.5 L192.6,719.4 M192.6,719.4 L202.6,719.9 M15.4,686.0 L18.2,688.6 M18.2,688.6 L19.0,695.3 L19.5,699.1 M15.1,658.5 L15.4,686.0 M52.3,720.8 L51.0,720.7 M50.1,687.0 L18.2,688.6 M20.4,653.3 L51.1,656.4 M20.4,653.3 L20.3,646.7 L20.0,638.7 L18.4,632.9 L17.5,624.7 M51.1,656.4 L52.3,622.8 M19.2,622.5 L17.5,624.7 M19.2,622.5 L49.4,619.8 M15.1,658.5 L20.4,653.3 M52.0,657.4 L51.1,656.4 M87.2,627.1 L87.0,651.0 M83.6,622.7 L75.6,621.8 L67.7,623.0 L59.9,621.3 L52.3,622.8 M86.3,591.4 L51.3,590.1 M51.3,590.1 L49.7,596.8 L51.3,606.0 L51.0,611.4 L49.4,619.8 M658.8,706.9 L650.5,705.5 L645.3,705.4 M595.8,675.6 L595.9,675.9 M634.9,673.6 L629.9,684.9 M527.8,715.3 L530.0,702.3 M688.6,815.0 L688.9,819.8 M660.7,815.0 L660.7,820.0 M625.0,820.0 L622.1,817.7 M622.1,817.7 L622.4,815.0 M688.9,819.8 L680.9,819.7 L676.2,819.3 L672.1,820.0 M191.1,433.0 L157.8,430.9 M191.1,433.0 L193.5,401.4 M193.3,401.3 L193.5,401.4 M193.3,401.3 L157.5,401.6 M157.8,430.9 L157.3,425.1 L156.9,416.9 L157.3,408.6 L156.9,402.2 M191.1,433.1 L191.1,433.0 M156.6,432.2 L157.8,430.9 M227.9,401.6 L193.5,401.4 M191.0,367.2 L193.3,401.3 M157.6,369.1 L157.5,375.8 L156.9,385.7 L158.4,392.3 L157.5,401.6 M123.5,401.6 L131.5,401.8 L140.0,401.7 L150.0,403.3 L156.9,402.2 M191.3,594.1 L194.3,590.2 M190.4,559.1 L191.0,559.7 M194.3,590.2 L192.4,581.2 L193.7,575.5 L192.3,566.8 L191.0,559.7 M508.5,381.0 L540.4,382.4 M508.5,381.0 L507.8,387.4 L506.9,396.7 M540.4,382.4 L535.1,399.4 M506.9,396.7 L535.1,399.4 M534.7,363.8 L541.5,381.4 M534.7,363.8 L543.1,361.5 L547.5,357.0 L556.1,353.9 M541.5,381.4 L552.8,381.4 M556.1,353.9 L561.1,359.1 M561.1,359.1 L559.2,367.4 L554.4,372.5 L552.8,381.4 M561.8,336.1 L555.1,315.6 M561.8,336.1 L570.9,334.0 L578.0,331.9 M578.7,318.0 L578.0,331.9 M557.2,313.6 L555.1,315.6 M556.1,353.9 L554.2,345.4 M554.2,345.4 L561.8,336.1 M584.4,338.4 L578.0,331.9 M584.4,338.4 L580.1,346.7 L577.3,353.7 L572.4,360.9 M572.4,360.9 L561.1,359.1 M472.1,403.4 L473.0,396.4 L470.1,387.3 L470.2,377.6 L470.6,369.7 M436.4,399.6 L437.8,370.6 M470.6,369.7 L461.1,369.7 L453.1,371.6 L446.0,370.9 L437.8,370.6 M437.1,338.8 L437.2,338.9 M403.4,368.7 L411.4,368.8 L421.2,370.1 L430.2,369.3 L437.5,370.3 M437.2,338.9 L438.0,347.0 L437.1,354.8 L436.2,361.2 L437.5,370.3 M437.8,370.6 L437.5,370.3 M508.4,301.0 L534.2,296.7 M508.4,301.0 L505.6,306.2 M505.6,306.2 L509.2,314.0 L511.4,321.1 M539.0,318.2 L534.2,296.7 M539.0,318.2 L535.8,322.5 M511.4,321.1 L519.9,320.8 L527.9,321.7 L535.8,322.5 M601.6,234.7 L603.7,237.1 M621.2,232.7 L603.7,237.1 M596.4,254.4 L599.8,251.3 M596.4,254.4 L589.8,254.6 L580.6,256.7 M580.6,256.7 L578.8,255.3 M599.8,251.3 L603.7,237.1 M663.6,233.6 L659.2,214.9 M686.5,212.8 L659.9,214.1 M582.4,313.5 L578.7,318.0 M582.4,313.5 L579.3,297.5 M557.2,313.6 L558.7,305.0 L559.8,295.6 M579.3,297.5 L559.8,295.6 M475.7,91.2 L475.5,80.7 L477.6,74.0 L476.4,64.1 M475.7,91.2 L475.7,91.3 M476.4,64.1 L502.1,63.8 M475.7,91.3 L504.7,88.0 M504.7,88.0 L502.7,78.5 L503.0,70.4 L502.1,63.8 M450.3,90.0 L441.5,70.2 M476.1,63.7 L476.4,64.1 M476.1,63.7 L443.0,68.7 M443.0,68.7 L441.5,70.2 M358.1,194.7 L360.3,185.5 M395.6,179.5 L391.1,174.7 M386.1,15.7 L414.6,13.4 M390.7,42.3 L417.8,41.4 M417.8,41.4 L418.5,40.5 M414.6,13.4 L418.5,40.5 M500.1,117.4 L481.3,113.8 M500.1,117.4 L503.5,108.5 L504.0,98.8 L508.3,90.6 M475.7,91.3 L476.4,100.0 L477.4,110.4 M508.3,90.6 L504.7,88.0 M477.4,110.4 L481.3,113.8 M533.7,255.2 L533.7,255.2 M531.4,230.7 L508.9,233.4 M508.9,233.4 L533.7,255.2 M522.8,213.8 L507.3,214.8 M508.9,233.4 L505.6,233.0 M505.6,233.0 L503.4,229.5 M507.3,214.8 L505.7,222.5 L503.4,229.5 M419.7,201.0 L416.7,178.7 M419.7,201.0 L443.5,201.9 M445.2,186.4 L421.9,174.7 M421.9,174.7 L416.7,178.7 M413.9,206.1 L419.7,201.0 M395.6,179.5 L401.4,180.0 L408.7,178.5 L416.7,178.7 M416.3,227.4 L440.8,227.6 M445.6,206.0 L445.0,214.2 L442.1,221.7 L440.8,227.6 M820.0,124.7 L818.2,121.9 M818.2,121.9 L819.8,110.7 M820.0,110.3 L819.8,110.7 M794.3,116.9 L819.8,110.7 M794.3,116.9 L796.6,125.7 M796.6,125.7 L800.0,130.7 M820.0,97.8 L802.0,90.3 M796.1,93.8 L791.0,112.4 M791.0,112.4 L794.3,116.9 M791.0,112.4 L780.0,114.7 M796.6,125.7 L789.6,128.0 L783.2,127.3 L775.3,129.4 M780.0,114.7 L775.3,129.4 M767.5,89.2 L765.2,94.3 M765.2,94.3 L770.6,107.8 M780.0,114.7 L770.6,107.8 M645.8,8.8 L660.7,19.5 M679.8,9.9 L660.7,19.5 M679.8,9.9 L684.5,12.9 M684.5,12.9 L690.5,10.0 L699.2,8.8 L706.2,6.7 M715.3,36.3 L690.0,33.1 M684.5,12.9 L690.0,33.1 M706.2,6.7 L715.9,20.4 M715.9,20.4 L721.7,17.3 L729.3,12.9 L737.2,8.7 M820.0,21.4 L800.7,8.9 M820.0,32.9 L816.1,34.9 L808.7,40.5 L800.8,43.9 M800.8,43.9 L795.0,38.7 M800.3,0.0 L799.0,5.2 M507.3,214.8 L506.0,209.3 M503.4,229.5 L495.3,230.0 L487.7,228.5 L477.7,226.8 M477.7,226.8 L473.6,207.5 M473.6,207.5 L480.0,197.7 M506.0,209.3 L480.0,197.7 M616.8,38.4 L616.6,67.5 M587.2,67.0 L591.7,69.5 M591.7,69.5 L615.1,69.0 M616.6,67.5 L615.1,69.0 M649.4,67.0 L616.6,67.5 M649.4,67.0 L651.0,89.4 M651.0,89.4 L643.5,93.6 L636.2,95.8 L626.5,97.7 M615.1,69.0 L618.2,89.7 M626.5,97.7 L618.2,89.7 M591.7,69.5 L594.3,99.6 M618.2,89.7 L610.1,92.6 L600.9,96.2 L594.3,99.6 M564.2,93.0 L563.8,70.6 M564.2,93.0 L592.3,103.1 M563.8,70.6 L565.7,68.9 M594.3,99.6 L592.3,103.1 M586.8,11.6 L573.0,16.8 M566.0,30.0 L569.2,20.3 M573.0,16.8 L569.2,20.3 M89.6,464.6 L85.4,494.7 M89.6,464.6 L120.9,466.2 M120.9,466.2 L122.0,494.1 M88.1,497.7 L121.5,494.7 M122.0,494.1 L121.5,494.7 M123.0,463.9 L120.9,466.2 M156.1,496.0 L122.0,494.1 M88.8,526.9 L88.0,519.1 L87.9,513.0 L88.3,505.9 L88.1,497.7 M122.6,528.8 L121.5,494.7 M54.9,494.3 L85.4,494.7 M52.9,467.3 L52.8,433.2 M54.9,431.1 L52.8,433.2 M54.9,431.1 L85.0,435.3 M85.0,435.3 L87.2,462.1 M52.0,468.4 L52.9,467.3 M89.6,464.6 L87.2,462.1 M21.3,435.4 L52.8,433.2 M53.5,404.3 L54.4,413.5 L55.4,421.7 L54.9,431.1 M89.2,431.2 L85.0,435.3 M15.5,589.7 L15.1,582.3 L13.2,575.1 L13.6,567.2 L13.4,559.1 M13.4,559.1 L50.7,559.4 M49.7,588.3 L49.5,580.4 L51.4,573.0 L49.8,566.6 L50.7,559.4 M12.8,558.4 L13.4,559.1 M15.0,590.4 L15.5,589.7 M51.3,590.1 L49.7,588.3 M51.6,558.2 L50.7,559.4 M252.2,88.1 L219.0,99.9 M252.2,88.1 L245.0,67.7 M245.0,67.7 L237.5,70.5 L227.5,72.7 L220.5,73.5 M220.5,73.5 L214.6,78.6 M214.6,78.6 L214.8,91.1 M214.8,91.1 L219.0,99.9 M236.4,122.1 L243.1,118.1 L250.0,115.5 M220.1,117.5 L219.0,99.9 M250.0,115.5 L252.9,88.9 M252.9,88.9 L252.2,88.1 M277.6,90.4 L252.9,88.9 M247.2,62.9 L245.0,67.7 M210.6,42.4 L220.5,73.5 M190.2,70.7 L197.3,73.3 L206.4,74.8 L214.6,78.6 M186.1,100.0 L214.8,91.1 M269.5,123.9 L275.3,119.2 M269.5,123.9 L270.8,134.1 L272.1,143.7 M275.3,119.2 L283.6,121.4 L287.8,124.1 L295.1,124.1 L303.0,126.7 M272.1,143.7 L279.1,151.8 M279.1,151.8 L294.3,149.5 M250.0,115.5 L269.5,123.9 M283.6,101.0 L275.3,119.2 M249.4,147.6 L272.1,143.7 M308.2,122.6 L303.0,126.7 M273.2,171.0 L276.3,160.9 L279.1,151.8 M306.0,156.2 L294.3,149.5 M326.2,143.9 L326.4,137.3 L324.1,127.7 M326.2,143.9 L306.0,156.2 M686.9,296.9 L686.6,297.3 M686.9,296.9 L708.3,298.3 M686.6,297.3 L692.0,312.4 M707.8,317.4 L710.0,307.5 L709.8,299.8 M708.3,298.3 L709.8,299.8 M688.4,280.6 L688.8,288.6 L686.9,296.9 M662.4,294.0 L670.7,301.9 M670.7,301.9 L686.6,297.3 M707.4,281.2 L708.3,298.3 M709.4,319.8 L707.8,317.4 M729.6,295.8 L709.8,299.8 M709.8,279.4 L731.2,284.0 M731.2,284.0 L731.8,292.5 M798.8,193.0 L799.3,193.5 M797.9,175.4 L802.2,171.5 M820.0,194.1 L799.3,193.5 M802.2,171.5 L820.0,175.4 M796.1,282.0 L777.5,270.7 M777.5,270.7 L769.2,274.4 M755.8,301.7 L757.6,300.4 M757.2,320.6 L765.5,324.8 L774.6,327.8 M778.1,323.8 L774.6,327.8 M778.1,323.8 L769.5,297.2 M757.6,300.4 L769.5,297.2 M795.1,317.8 L778.1,323.8 M770.6,296.2 L769.5,297.2 M759.1,220.5 L748.1,210.1 M759.1,220.5 L775.4,212.7 M775.1,197.2 L776.1,203.5 L776.0,212.1 M772.9,194.5 L754.0,194.8 M775.4,212.7 L776.0,212.1 M748.1,210.1 L754.0,194.8 M755.1,170.2 L765.9,176.1 L773.9,179.2 M755.1,170.2 L753.4,179.1 L754.8,186.2 L753.5,194.3 M753.5,194.3 L754.0,194.8 M803.7,334.9 L798.4,342.5 M811.9,361.7 L805.6,362.1 M798.4,342.5 L805.6,362.1 M773.5,438.4 L776.9,443.1 M773.5,438.4 L776.2,430.1 M776.2,430.1 L784.4,427.8 L789.0,429.9 L797.7,427.6 M801.9,438.3 L797.9,427.8 M801.9,438.3 L796.8,446.1 M797.9,427.8 L797.7,427.6 M771.4,418.6 L776.2,430.1 M819.1,444.0 L811.7,441.4 L801.9,438.3 M819.1,444.0 L820.0,446.1 M796.8,446.1 L797.6,459.2 M818.2,458.8 L820.0,450.6 M803.5,462.8 L797.6,459.2 M776.9,443.1 L779.0,451.5 L781.0,462.1 M797.6,459.2 L781.0,462.1 M797.7,427.6 L796.7,419.1 L797.6,413.9 L798.7,405.7 M819.3,405.1 L798.7,405.7 M796.8,404.2 L798.7,405.7 M820.0,379.6 L815.9,385.7 M820.0,370.6 L816.6,364.9 M665.3,486.9 L666.3,485.9 M667.2,468.0 L644.6,463.2 M642.5,477.7 L640.9,472.1 M640.9,472.1 L644.6,463.2 M662.4,503.1 L665.3,486.9 M685.0,484.6 L666.3,485.9 M620.8,494.7 L617.0,490.7 M617.1,469.5 L624.0,470.6 L632.4,471.1 L640.9,472.1 M660.5,444.7 L662.1,451.5 L666.0,458.5 L669.6,465.0 M660.5,444.7 L666.2,439.4 M666.2,439.4 L684.6,451.6 M684.6,451.6 L681.6,462.1 M669.6,465.0 L681.6,462.1 M644.4,449.3 L644.6,463.2 M644.4,449.3 L660.5,444.7 M667.2,468.0 L669.6,465.0 M708.3,447.3 L698.3,444.3 M686.0,467.9 L681.6,462.1 M698.3,444.3 L689.9,427.9 M668.9,427.4 L689.9,427.9 M604.9,446.6 L601.4,438.6 M590.8,466.4 L579.1,464.3 M579.1,464.3 L581.2,456.1 L579.4,449.8 L581.4,441.9 M601.4,438.6 L581.4,441.9 M554.6,425.2 L557.6,432.5 L559.5,440.8 M554.6,425.2 L559.0,420.5 M559.5,440.8 L568.9,440.3 L580.2,440.7 M578.3,428.2 L580.2,440.7 M578.3,428.2 L569.9,419.7 M559.0,420.5 L569.9,419.7 M540.4,382.4 L541.5,381.4 M535.1,399.4 L537.4,402.6 M552.8,381.4 L553.9,382.6 M555.5,402.7 L558.4,398.0 M559.0,420.5 L557.5,412.9 L555.5,402.7 M569.9,419.7 L580.1,406.7 M558.4,398.0 L566.2,397.7 L574.1,397.4 M574.1,397.4 L580.1,406.7 M622.7,502.6 L617.3,508.6 M594.8,503.9 L599.6,510.9 M594.8,503.9 L600.7,491.5 M599.6,510.9 L617.3,508.6 M640.4,520.7 L622.6,531.1 M622.6,531.1 L618.4,528.2 M618.4,528.2 L617.9,518.3 L617.3,508.6 M596.1,484.5 L589.3,485.4 L581.0,488.9 M579.1,464.3 L577.5,465.2 M577.5,465.2 L576.1,473.6 L574.1,481.0 M581.0,488.9 L574.1,481.0 M594.8,503.9 L581.7,502.2 M581.0,488.9 L581.7,502.2 M820.0,503.3 L817.6,505.6 M817.6,505.6 L818.9,513.8 L820.0,516.7 M786.6,637.1 L789.4,626.8 L792.0,618.4 M792.0,618.4 L798.4,615.4 M820.0,619.5 L814.9,614.2 M798.4,615.4 L807.1,615.7 L814.9,614.2 M687.2,527.2 L707.5,532.5 M707.5,532.5 L711.6,527.2 M261.8,496.8 L262.1,497.2 M296.7,463.7 L296.4,494.6 M262.1,497.2 L296.4,494.6 M329.5,494.3 L323.0,494.1 L313.9,497.0 L309.4,498.4 L300.8,499.4 M296.4,494.6 L300.8,499.4 M334.6,499.5 L332.5,527.5 M300.8,499.4 L299.0,528.5 M332.5,527.5 L299.0,528.5 M263.8,526.1 L297.3,530.3 M297.3,530.3 L299.0,528.5 M599.6,510.9 L595.2,528.8 M618.4,528.2 L597.0,531.1 M597.0,531.1 L595.2,528.8 M536.7,567.3 L535.9,561.1 L532.7,553.3 M532.7,553.3 L504.2,555.7 M508.5,575.6 L505.2,568.9 L501.7,559.6 M504.2,555.7 L501.7,559.6 M536.1,589.2 L536.2,568.4 M508.5,588.4 L508.5,575.6 M473.6,563.1 L501.7,559.6 M471.4,528.5 L471.5,537.9 L471.3,544.2 L471.8,553.5 L471.4,561.0 M602.0,569.9 L601.7,569.4 M576.3,574.7 L601.7,569.4 M553.8,591.3 L561.3,572.7 M536.7,567.3 L545.6,566.9 L556.1,568.6 M576.3,574.7 L572.8,571.1 M561.3,572.7 L572.8,571.1 M601.7,569.4 L601.2,553.7 M601.2,553.7 L597.7,550.5 M597.7,550.5 L587.3,553.4 L578.3,554.7 M572.8,571.1 L578.3,554.7 M626.4,572.9 L625.6,550.8 M626.4,572.9 L645.9,570.3 M645.9,570.3 L644.3,561.9 L641.6,556.5 L638.5,549.1 M624.9,575.6 L626.4,572.9 M601.2,553.7 L609.4,551.8 L618.0,550.7 L625.6,550.8 M649.7,531.7 L645.3,545.6 M622.6,531.1 L624.9,540.4 L626.8,549.7 M597.0,531.1 L597.3,540.5 L597.7,550.5 M685.9,645.4 L692.3,639.5 M692.3,639.5 L724.7,648.1 M689.0,673.0 L720.1,670.3 M659.9,643.4 L662.4,641.0 M687.2,675.2 L689.0,673.0 M662.4,641.0 L670.7,641.5 L679.1,643.3 L685.9,645.4 M726.1,678.9 L720.1,670.3 M751.5,643.3 L744.9,643.6 L736.8,643.6 L730.6,642.2 M730.6,642.2 L724.7,648.1 M694.4,620.0 L694.3,629.0 L692.3,639.5 M694.4,620.0 L705.1,616.4 M730.6,642.2 L725.9,624.2 M662.4,641.0 L659.5,617.4 M659.5,617.4 L651.5,616.4 L642.4,615.4 M625.7,587.8 L638.3,591.6 M642.4,615.4 L639.7,607.0 L640.2,599.7 L638.3,591.6 M659.6,529.4 L674.2,551.0 M645.3,545.6 L666.8,558.2 M666.8,558.2 L674.2,551.0 M755.2,535.6 L763.0,534.2 L771.7,530.1 M775.5,547.0 L775.0,537.9 L771.7,530.1 M775.5,547.0 L770.9,552.5 M770.9,552.5 L755.5,550.6 M797.3,562.2 L800.0,550.5 M797.3,562.2 L794.0,565.9 M794.0,565.9 L775.4,568.7 M775.5,547.0 L784.2,547.5 L790.8,550.0 L799.4,549.6 M800.0,550.5 L799.4,549.6 M770.9,552.5 L774.3,559.3 L775.4,568.7 M574.1,481.0 L565.6,485.6 L556.3,490.9 M572.1,509.3 L581.7,502.2 M563.2,506.3 L557.1,500.0 M557.1,500.0 L556.3,490.9 M577.5,465.2 L569.0,462.3 L558.2,460.4 M558.2,460.4 L554.0,488.5 M556.3,490.9 L554.0,488.5 M563.2,506.3 L559.6,512.4 L553.8,522.2 L551.0,528.4 M538.3,509.0 L557.1,500.0 M538.3,509.0 L539.8,521.8 M510.8,508.4 L518.0,508.4 L525.6,507.8 L535.0,507.2 M535.0,507.2 L538.3,509.0 M525.7,530.9 L534.6,549.7 M435.9,532.1 L437.1,542.1 L436.4,551.5 L435.4,559.2 M435.9,532.1 L427.5,531.6 L419.7,529.5 L410.8,526.7 L401.7,526.2 M435.4,559.2 L401.0,560.2 M401.7,526.2 L400.2,527.9 M400.2,527.9 L401.0,535.1 L401.6,542.2 L398.7,550.9 L400.0,559.3 M401.0,560.2 L400.0,559.3 M438.0,529.6 L435.9,532.1 M437.1,561.2 L435.4,559.2 M435.6,588.9 L403.0,593.4 M366.1,496.6 L366.7,504.6 L366.9,511.8 L368.9,518.9 L368.0,527.3 M368.0,527.3 L400.2,527.9 M226.5,622.5 L230.6,591.0 M264.2,624.0 L262.9,592.2 M262.9,592.2 L230.6,591.0 M296.0,593.3 L263.4,591.7 M299.2,620.7 L298.3,610.6 L299.1,602.1 L297.0,594.4 M262.9,592.2 L263.4,591.7 M296.0,593.3 L297.4,560.1 M263.4,591.7 L263.0,583.9 L264.5,578.3 L265.2,570.3 L266.1,563.4 M194.3,590.2 L229.2,589.4 M230.6,591.0 L229.2,589.4 M332.1,655.5 L331.6,661.6 M333.5,654.2 L356.6,656.8 M122.9,752.0 L123.1,745.9 L124.6,738.2 L124.7,730.6 L123.5,722.1 M122.9,752.0 L157.2,749.7 M123.5,722.1 L155.9,720.0 M154.3,691.8 L147.9,691.2 L139.7,689.7 L131.7,687.9 L124.4,688.0 M120.6,691.4 L124.4,688.0 M157.5,717.9 L155.9,720.0 M157.0,622.8 L155.3,654.2 M157.0,622.8 L148.6,624.0 L139.3,623.1 L130.6,623.9 L122.8,622.9 M155.3,654.2 L125.6,656.1 M122.8,622.9 L123.4,630.4 L122.4,639.0 L124.2,648.0 L124.5,655.1 M124.5,655.1 L125.6,656.1 M158.6,657.0 L155.3,654.2 M158.0,621.7 L157.0,622.8 M121.7,621.7 L122.8,622.9 M124.4,688.0 L125.6,656.1 M91.3,655.7 L98.2,654.3 L108.5,655.4 L115.1,655.2 L124.5,655.1 M298.7,815.5 L291.0,815.7 L283.8,815.7 L275.3,816.9 L269.6,815.3 L262.0,815.9 M298.7,815.5 L298.6,815.0 M262.0,815.9 L261.3,815.0 M121.1,817.7 L128.5,817.5 L138.2,816.8 L146.5,815.0 M594.9,815.0 L596.5,819.4 L596.9,820.0 M562.1,817.6 L562.1,815.0 M622.1,817.7 L615.1,820.0 M506.9,396.7 L505.3,399.3 M505.3,399.3 L508.8,409.0 L510.7,418.4 M537.4,402.6 L534.7,424.8 M534.7,424.8 L510.7,418.4 M534.7,424.8 L535.5,425.6 M472.5,403.8 L505.3,399.3 M471.6,429.5 L480.1,429.8 L487.2,432.9 L493.8,434.3 L501.3,434.5 M510.7,418.4 L501.3,434.5 M470.6,369.7 L474.8,365.1 M437.2,338.9 L471.6,336.4 M474.8,365.1 L473.9,357.3 L474.3,350.4 L472.2,342.7 L471.6,336.4 M508.5,381.0 L506.1,369.7 M474.8,365.1 L482.2,366.7 L490.4,365.9 L499.6,367.9 L506.1,369.7 M472.8,306.9 L472.2,335.6 M472.8,306.9 L480.1,305.4 L488.3,305.5 L498.5,306.4 L505.6,306.2 M511.4,321.1 L505.3,336.2 M505.3,336.2 L472.2,335.6 M471.0,304.5 L438.6,302.9 M471.0,304.5 L472.8,306.9 M539.1,337.1 L538.9,336.7 M539.1,337.1 L534.1,343.8 L529.8,351.1 L524.7,359.8 M538.9,336.7 L508.2,342.2 M511.8,361.2 L508.7,351.9 L508.2,342.2 M554.2,345.4 L539.1,337.1 M539.0,318.2 L547.4,318.1 L555.1,315.6 M535.8,322.5 L536.4,328.6 L538.9,336.7 M534.7,363.8 L524.7,359.8 M505.3,336.2 L508.2,342.2 M506.1,369.7 L511.8,361.2 M670.7,301.9 L667.1,318.5 M692.0,312.4 L681.1,324.7 M681.1,324.7 L667.1,318.5 M705.6,338.3 L696.8,339.1 L687.6,338.4 M644.0,301.4 L646.4,310.9 L650.2,319.8 M650.2,319.8 L660.1,322.2 M667.1,318.5 L660.1,322.2 M707.4,361.3 L690.4,368.2 M689.3,384.9 L698.4,385.3 L709.5,383.7 M689.3,384.9 L688.2,383.6 M688.2,383.6 L690.4,368.2 M687.6,338.4 L686.4,339.8 M686.4,339.8 L685.3,348.7 L683.7,356.1 L684.5,362.3 M690.4,368.2 L684.5,362.3 M684.5,362.3 L664.1,362.0 M665.1,345.1 L663.6,354.3 L664.1,362.0 M664.1,362.0 L663.2,363.0 M663.2,363.0 L642.5,357.1 M644.1,344.4 L640.6,355.4 M640.6,355.4 L642.5,357.1 M650.2,319.8 L639.2,326.6 M644.1,344.4 L638.1,333.8 M623.0,304.2 L615.0,301.8 L608.1,295.7 L599.1,293.0 M623.0,304.2 L619.8,312.8 M619.8,312.8 L610.2,312.7 L600.2,312.4 M599.1,293.0 L600.2,312.4 M624.1,302.8 L623.0,304.2 M621.0,316.3 L619.8,312.8 M579.8,152.4 L573.0,168.2 M581.8,151.1 L590.1,153.7 L599.5,154.8 M599.5,154.8 L601.7,170.5 M600.4,189.6 L601.4,182.9 L604.9,174.1 M601.7,170.5 L604.9,174.1 M623.3,195.7 L620.9,189.2 L619.8,182.1 L618.5,174.3 M604.9,174.1 L618.5,174.3 M635.2,235.5 L624.0,234.3 M624.0,234.3 L621.3,260.5 M642.4,246.9 L642.1,241.5 M642.4,246.9 L624.5,264.5 M624.5,264.5 L621.3,260.5 M644.6,212.7 L635.2,235.5 M621.2,232.7 L624.0,234.3 M663.6,233.6 L642.1,241.5 M659.2,214.9 L645.0,212.4 M650.3,258.3 L642.4,246.9 M625.9,274.2 L624.5,264.5 M735.8,172.6 L728.9,151.6 M735.8,172.6 L753.0,167.8 M753.0,167.8 L756.9,155.6 M728.9,151.6 L734.1,146.1 M644.3,187.0 L664.3,192.8 M659.9,214.1 L665.5,195.2 M664.3,192.8 L665.5,195.2 M689.4,208.9 L688.7,199.6 M665.5,195.2 L688.7,199.6 M664.3,192.8 L668.4,183.8 L671.0,176.3 M689.3,198.4 L688.7,199.6 M671.0,176.3 L681.7,175.8 M708.8,217.7 L716.7,215.4 L723.8,215.5 L731.3,214.4 M708.8,217.7 L707.5,227.4 L707.4,234.5 M708.2,235.1 L707.4,234.5 M708.2,235.1 L730.4,238.3 M731.3,214.4 L733.8,223.9 L734.0,234.5 M730.4,238.3 L734.0,234.5 M690.7,238.7 L700.2,235.4 L707.4,234.5 M689.4,208.9 L697.9,213.6 L707.9,216.5 M707.9,216.5 L708.8,217.7 M711.4,260.2 L710.5,260.9 M711.4,260.2 L711.3,253.3 L710.7,243.7 L708.2,235.1 M755.4,235.5 L754.9,235.9 M754.9,235.9 L744.2,235.2 L734.0,234.5 M748.1,210.1 L732.3,212.5 M732.3,212.5 L731.3,214.4 M579.3,275.5 L603.7,279.3 M598.6,292.1 L603.8,279.4 M603.7,279.3 L603.8,279.4 M578.1,274.0 L579.3,275.5 M582.4,313.5 L589.8,314.3 L597.1,314.6 M597.1,314.6 L600.2,312.4 M579.3,297.5 L581.2,295.3 M559.7,295.5 L560.7,278.3 M559.7,295.5 L551.1,294.6 L543.0,293.3 L536.5,293.2 M535.4,283.9 L539.8,280.3 L547.9,276.1 L552.8,270.5 M535.4,283.9 L536.5,293.2 M578.1,274.0 L569.0,276.0 L560.7,278.3 M559.8,295.6 L559.7,295.5 M534.2,296.7 L536.5,293.2 M531.2,279.9 L529.9,271.0 L530.2,263.9 L530.8,257.7 M531.2,279.9 L535.4,283.9 M551.5,259.9 L552.8,270.5 M505.7,277.6 L514.7,277.4 L523.3,278.6 L531.2,279.9 M505.7,277.6 L508.4,301.0 M528.8,96.0 L560.8,97.8 M528.8,96.0 L528.7,107.6 M528.7,107.6 L535.9,109.6 L542.1,109.3 L549.0,112.6 L556.4,113.3 M560.8,97.8 L559.8,106.8 M577.1,116.9 L559.8,106.8 M577.1,116.9 L592.7,105.0 M564.2,93.0 L560.8,97.8 M592.7,105.0 L592.3,103.1 M560.6,127.2 L555.1,123.3 M555.1,123.3 L556.4,113.3 M558.2,148.2 L556.1,149.5 M555.1,123.3 L545.5,129.1 M545.5,129.1 L556.1,149.5 M553.4,164.8 L552.6,154.8 M556.1,149.5 L552.6,154.8 M511.8,46.1 L508.5,58.6 M508.5,58.6 L532.0,75.7 M535.6,46.8 L538.9,53.5 L542.8,60.2 L544.3,68.0 M526.0,91.0 L528.4,83.1 L532.0,75.7 M526.0,91.0 L508.3,90.6 M502.1,63.8 L508.5,58.6 M563.8,70.6 L554.6,68.3 L544.3,68.0 M564.3,32.2 L557.7,33.4 L550.8,33.4 L542.4,35.8 M542.4,35.8 L535.6,46.8 M526.0,91.0 L528.8,96.0 M397.2,69.9 L405.4,65.8 L412.5,63.6 L420.2,61.5 M397.2,69.9 L397.7,79.7 L398.7,89.9 M398.7,89.9 L417.7,91.9 M417.7,91.9 L429.1,70.6 M429.1,70.6 L420.2,61.5 M389.9,62.5 L397.2,69.9 M417.8,41.4 L420.2,61.5 M367.7,84.6 L389.3,97.6 M389.3,97.6 L398.7,89.9 M355.0,119.7 L361.0,125.0 M389.3,97.6 L387.9,109.2 M421.0,5.5 L444.7,12.9 M446.9,39.7 L444.5,35.9 M446.9,39.7 L454.7,43.8 L461.8,44.4 L465.8,46.9 L473.8,50.3 M444.5,35.9 L449.7,18.0 M473.8,50.3 L478.8,41.4 M478.8,41.4 L469.7,13.2 M469.7,13.2 L449.7,18.0 M443.0,68.7 L442.9,60.3 L444.4,53.0 L444.8,45.8 L446.9,39.7 M441.5,70.2 L429.1,70.6 M476.1,63.7 L473.8,50.3 M444.7,12.9 L449.7,18.0 M506.2,33.4 L500.4,35.9 L491.9,38.4 L484.4,38.0 L478.8,41.4 M506.2,33.4 L511.8,46.1 M476.4,6.3 L469.7,13.2 M451.7,180.1 L451.6,169.5 L448.8,162.1 L449.2,152.4 M451.7,180.1 L445.2,186.4 M421.9,174.7 L424.0,163.8 L425.1,154.5 M449.2,152.4 L425.1,154.5 M391.1,174.7 L389.2,155.0 M389.2,155.0 L396.7,153.7 L403.9,149.9 L411.8,150.2 L417.8,147.4 M417.8,147.4 L425.1,154.5 M505.6,233.0 L503.0,248.0 M530.8,257.7 L506.1,262.4 M506.1,262.4 L504.7,254.5 L503.0,248.0 M505.7,277.6 L501.9,271.8 M506.1,262.4 L501.9,271.8 M477.7,226.8 L473.0,232.2 M473.0,232.2 L476.6,249.7 M471.0,304.5 L472.6,296.2 L472.9,289.9 L474.1,282.1 L474.8,274.7 M501.9,271.8 L474.8,274.7 M437.8,268.9 L436.7,260.1 M436.7,260.1 L439.9,252.6 L443.4,242.3 L446.0,235.1 M471.4,271.0 L471.6,266.7 M471.6,266.7 L448.5,235.4 M446.0,235.1 L448.5,235.4 M435.3,272.2 L437.8,268.9 M474.8,274.7 L471.4,271.0 M476.6,249.7 L474.8,257.8 L471.6,266.7 M473.0,232.2 L466.1,232.3 L457.0,235.7 L448.5,235.4 M800.8,43.9 L802.6,61.2 M800.3,64.4 L802.6,61.2 M759.7,124.5 L766.4,126.7 L774.2,130.9 M753.1,130.1 L753.2,125.1 M753.1,130.1 L770.0,150.1 M774.2,130.9 L776.9,144.4 M776.9,144.4 L775.9,149.1 M775.9,149.1 L770.0,150.1 M770.6,107.8 L766.4,116.9 L759.7,124.5 M775.3,129.4 L774.2,130.9 M756.9,155.6 L770.0,150.1 M747.3,146.9 L753.1,130.1 M799.9,131.4 L800.0,130.7 M799.9,131.4 L776.9,144.4 M778.0,151.4 L780.1,172.8 M755.1,170.2 L753.0,167.8 M682.9,42.5 L658.9,33.2 M651.5,63.8 L649.5,53.3 L648.0,44.3 M648.0,44.3 L653.0,37.3 L658.9,33.2 M718.4,40.2 L715.3,36.3 M718.4,40.2 L716.7,47.3 L712.0,56.3 L709.8,63.4 M709.8,63.4 L687.3,66.1 M687.3,66.1 L682.5,61.7 M690.0,33.1 L682.9,42.5 M660.7,19.5 L658.9,33.2 M625.6,32.6 L648.0,44.3 M770.8,37.4 L772.7,34.5 M770.8,37.4 L736.6,41.9 M772.7,34.5 L768.9,25.7 L767.3,16.4 M745.9,17.1 L766.9,16.1 M745.9,17.1 L743.1,25.9 L739.5,31.8 L735.2,40.6 M766.9,16.1 L767.3,16.4 M736.6,41.9 L735.2,40.6 M795.0,38.7 L772.7,34.5 M748.6,67.5 L736.6,41.9 M748.6,67.5 L762.6,69.9 M799.0,5.2 L767.3,16.4 M737.2,8.7 L745.9,17.1 M718.4,40.2 L726.2,41.8 L735.2,40.6 M748.6,67.5 L738.0,73.8 M709.8,63.4 L717.3,71.9 M738.0,73.8 L717.3,71.9 M522.0,134.7 L532.4,135.4 M532.4,135.4 L535.5,130.9 M535.5,130.9 L532.9,125.3 L529.6,116.5 L527.5,111.4 M527.5,111.4 L502.8,119.9 M502.8,119.9 L504.9,128.8 M532.8,144.7 L552.6,154.8 M532.8,144.7 L532.4,135.4 M528.7,107.6 L527.5,111.4 M500.1,117.4 L502.8,119.9 M599.5,154.8 L600.8,153.4 M600.8,153.4 L609.6,149.5 L617.2,147.7 M618.5,174.3 L624.4,170.4 M624.4,170.4 L623.9,147.6 M617.2,147.7 L623.9,147.6 M542.4,35.8 L526.5,14.1 M569.2,20.3 L563.3,17.5 L555.3,12.2 L550.1,10.8 L541.7,7.9 L536.6,3.5 M536.6,3.5 L531.1,8.9 L526.5,14.1 M506.2,33.4 L509.0,26.1 L509.2,17.9 M526.5,14.1 L509.2,17.9 M476.4,6.3 L484.0,7.3 L491.9,10.8 L499.0,13.1 L507.1,15.8 M509.2,17.9 L507.1,15.8 M795.9,153.7 L802.1,158.3 M795.9,153.7 L799.7,143.9 L801.3,134.4 M802.1,158.3 L808.5,154.0 L817.2,149.7 M815.9,145.8 L817.2,149.7 M778.0,151.4 L786.6,151.6 L795.9,153.7 M802.2,171.5 L802.1,158.3 M820.0,135.1 L819.5,136.5 L815.9,145.8 M758.0,269.3 L750.6,275.6 M753.1,257.1 L756.4,261.4 M753.1,257.1 L730.0,256.7 M750.6,275.6 L742.6,278.2 L733.6,279.4 M733.6,279.4 L728.4,259.0 M728.4,259.0 L730.0,256.7 M769.2,274.4 L758.0,269.3 M757.6,300.4 L755.5,292.4 L752.0,282.6 L750.6,275.6 M754.9,235.9 L755.0,243.4 L753.0,250.0 L753.1,257.1 M731.2,284.0 L733.6,279.4 M711.4,260.2 L721.1,258.4 L728.4,259.0 M820.0,196.9 L818.0,201.3 L817.7,206.5 L815.7,214.6 M799.3,193.5 L800.6,218.3 M800.6,218.3 L809.3,215.2 L815.7,214.6 M776.0,212.1 L797.6,221.3 M800.6,218.3 L797.6,221.3 M815.7,214.6 L820.0,217.6 M818.7,251.8 L818.2,239.7 M818.2,239.7 L819.8,237.4 M815.2,255.1 L818.7,251.8 M820.0,234.0 L819.8,237.4 M797.6,221.3 L797.7,225.6 M797.7,225.6 L818.2,239.7 M797.7,254.1 L795.6,229.8 M797.7,254.1 L791.8,254.8 L783.3,255.3 M795.6,229.8 L788.9,233.3 L781.2,235.7 L776.2,239.0 M783.3,255.3 L777.0,249.2 M777.0,249.2 L774.4,241.3 M774.4,241.3 L776.2,239.0 M797.7,225.6 L795.6,229.8 M777.5,270.7 L783.3,255.3 M775.4,212.7 L776.2,239.0 M805.6,362.1 L802.3,364.8 M815.9,385.7 L801.1,382.2 M820.0,403.7 L819.3,405.1 M796.8,404.2 L796.2,394.2 L796.3,386.7 M796.3,386.7 L801.1,382.2 M774.6,327.8 L774.2,340.3 M747.8,337.2 L755.9,344.2 M774.2,340.3 L755.9,344.2 M733.4,363.4 L751.5,361.8 M755.9,344.2 L751.5,361.8 M818.2,458.8 L820.0,461.0 M800.5,482.4 L802.8,471.4 L803.5,462.8 M730.0,528.1 L729.9,527.9 M730.0,528.1 L749.8,527.6 M729.9,527.9 L730.7,520.2 L730.2,511.9 M730.2,511.9 L735.3,507.4 M711.6,527.2 L729.9,527.9 M710.1,492.9 L734.1,488.4 M734.1,488.4 L735.3,507.4 M759.8,507.1 L752.0,490.2 M759.8,507.1 L751.2,511.3 M734.1,488.4 L734.6,487.7 M734.6,487.7 L743.0,489.0 L752.0,490.2 M711.9,466.8 L720.3,469.4 L726.4,471.1 L734.1,472.3 M734.6,487.7 L734.1,472.3 M708.3,447.3 L708.3,447.3 M732.1,446.4 L737.1,469.4 M737.1,469.4 L734.1,472.3 M800.5,482.4 L799.0,483.8 M817.6,505.6 L803.1,504.1 M799.0,483.8 L799.6,495.1 L803.1,504.1 M692.3,423.8 L694.6,405.3 M692.3,423.8 L702.1,424.0 L710.3,424.7 L717.7,423.2 M718.2,422.6 L704.5,405.6 M704.5,405.6 L694.6,405.3 M668.9,427.4 L668.6,426.7 M689.9,427.9 L692.3,423.8 M692.7,403.6 L694.6,405.3 M692.7,403.6 L684.7,404.1 L678.8,407.4 L671.7,408.9 M708.3,447.3 L710.5,439.4 L716.0,430.5 L717.7,423.2 M733.8,444.6 L732.1,446.4 M712.1,398.7 L704.5,405.6 M689.3,384.9 L690.8,394.0 L692.7,403.6 M505.1,495.1 L507.1,491.0 M507.1,491.0 L501.6,461.2 M535.0,507.2 L532.8,481.6 M507.1,491.0 L532.8,481.6 M554.0,488.5 L533.8,480.6 M532.8,481.6 L533.8,480.6 M505.3,445.8 L503.8,458.7 M503.8,458.7 L501.6,461.2 M555.5,450.7 L532.9,439.6 M555.5,450.7 L556.0,458.7 M556.0,458.7 L549.3,461.0 L540.7,463.8 L534.2,466.1 M532.0,440.8 L532.9,439.6 M532.0,440.8 L530.7,449.1 L531.8,456.2 L532.4,464.2 M532.4,464.2 L534.2,466.1 M559.5,440.8 L555.5,450.7 M535.5,425.6 L533.8,434.0 L532.9,439.6 M581.4,441.9 L580.2,440.7 M558.2,460.4 L556.0,458.7 M533.8,480.6 L534.2,466.1 M505.3,445.8 L532.0,440.8 M503.8,458.7 L510.9,460.9 L519.3,461.9 L525.8,463.0 L532.4,464.2 M813.8,590.4 L817.9,595.3 M813.8,590.4 L816.9,574.5 M814.9,614.2 L817.9,595.3 M796.8,588.1 L798.4,615.4 M796.8,588.1 L804.9,588.2 L813.8,590.4 M797.3,562.2 L816.9,574.5 M796.1,587.7 L796.8,588.1 M752.2,543.7 L744.4,543.4 L738.6,546.1 L731.1,545.4 M730.0,528.1 L729.8,544.4 M731.1,545.4 L729.8,544.4 M707.5,532.5 L711.3,548.0 M729.8,544.4 L711.3,548.0 M572.1,548.0 L556.1,543.7 M576.8,523.1 L580.6,526.3 M576.8,523.1 L554.2,535.0 M554.2,535.0 L553.9,541.8 M556.1,543.7 L553.9,541.8 M556.1,568.6 L555.6,561.3 L557.0,552.9 L556.1,543.7 M578.3,554.7 L572.1,548.0 M551.0,528.4 L554.2,535.0 M534.6,549.7 L543.1,544.9 L553.9,541.8 M665.7,611.0 L665.1,597.4 M665.7,611.0 L688.2,614.6 M665.1,597.4 L688.6,583.5 M688.2,614.6 L691.0,605.8 L691.2,596.4 L692.8,589.1 M692.8,589.1 L688.6,583.5 M694.4,620.0 L688.2,614.6 M659.5,617.4 L665.7,611.0 M642.6,589.7 L651.2,591.1 L662.6,594.2 M642.6,589.7 L648.6,571.9 M662.6,594.2 L661.2,585.4 L662.9,577.5 L661.8,569.9 M648.6,571.9 L661.8,569.9 M638.3,591.6 L642.6,589.7 M645.9,570.3 L648.6,571.9 M665.6,565.9 L688.5,581.1 M665.6,565.9 L661.8,569.9 M666.8,558.2 L665.6,565.9 M333.3,622.1 L334.8,615.8 L334.8,605.2 L334.1,597.9 L334.4,591.0 M334.4,591.0 L332.6,588.7 M401.7,595.1 L369.3,589.8 M401.7,595.1 L402.0,602.4 L401.2,610.6 L402.0,620.4 M400.4,622.0 L394.2,623.1 L387.8,625.9 L378.5,624.9 L372.3,626.9 M372.3,626.9 L366.8,621.7 M366.8,621.7 L367.1,614.4 L367.7,607.0 L366.3,600.1 L366.9,592.2 M403.0,593.4 L401.7,595.1 M370.2,561.8 L369.3,589.8 M403.2,647.6 L400.4,622.0 M334.4,591.0 L342.3,592.3 L351.1,592.9 L359.0,592.1 L366.9,592.2 M262.1,527.9 L262.3,534.4 L259.6,543.2 L258.8,550.3 L259.5,556.0 M262.1,527.9 L253.9,529.2 L245.1,528.5 L236.4,526.9 L227.5,527.6 M259.5,556.0 L228.5,562.0 M227.5,527.6 L225.5,529.5 M225.5,529.5 L225.6,559.0 M225.6,559.0 L228.5,562.0 M297.4,560.1 L299.2,558.2 M299.2,558.2 L297.3,530.3 M266.1,563.4 L259.5,556.0 M229.2,589.4 L229.3,581.0 L229.7,570.9 L228.5,562.0 M191.7,526.2 L225.5,529.5 M191.0,559.7 L225.6,559.0 M497.8,815.0 L497.2,818.8 M525.8,815.0 L523.3,820.0 M499.4,820.0 L497.2,818.8 M155.0,815.0 L159.1,820.0 M192.6,719.4 L189.3,744.0 M157.2,749.7 L158.1,750.4 M158.1,750.4 L162.4,750.3 M158.1,750.4 L159.2,757.6 L159.0,760.0 M644.4,449.3 L638.1,444.3 M668.6,426.7 L661.5,425.3 L652.1,422.4 L645.6,418.8 M645.6,418.8 L642.0,421.7 M642.0,421.7 L641.6,430.6 L640.2,436.5 L638.1,444.3 M617.1,454.0 L633.2,444.3 M638.1,444.3 L633.2,444.3 M638.1,333.8 L617.5,343.8 M623.2,358.5 L617.5,343.8 M621.0,316.3 L611.6,338.7 M617.5,343.8 L611.6,338.7 M597.1,314.6 L601.0,338.8 M611.6,338.7 L601.0,338.8 M584.4,338.4 L597.6,340.6 M597.6,340.6 L601.0,338.8 M713.5,196.3 L704.0,190.0 M713.5,196.3 L727.2,195.8 M727.2,195.8 L732.8,185.6 M704.0,190.0 L705.9,175.0 M732.1,178.1 L732.8,185.6 M710.8,172.7 L705.9,175.0 M707.9,216.5 L713.5,196.3 M689.3,198.4 L704.0,190.0 M732.3,212.5 L727.2,195.8 M753.5,194.3 L745.6,192.8 L739.7,189.2 L732.8,185.6 M690.8,167.3 L681.7,175.8 M690.8,167.3 L705.9,175.0 M735.8,172.6 L732.1,178.1 M715.6,151.7 L710.8,172.7 M715.6,151.7 L716.3,151.6 M716.3,151.6 L728.9,151.6 M706.9,128.1 L704.7,127.1 M706.9,128.1 L705.2,145.5 M705.2,145.5 L693.2,150.4 M704.7,127.1 L684.1,134.9 M693.2,150.4 L684.1,134.9 M690.8,167.3 L689.3,156.5 M693.2,150.4 L689.3,156.5 M662.7,167.7 L663.8,151.4 M662.7,167.7 L643.1,176.7 M643.1,176.7 L641.0,174.6 M641.0,174.6 L642.0,167.0 L643.3,156.8 L643.8,149.7 M643.8,149.7 L653.4,150.8 L663.1,150.2 M671.0,176.3 L662.7,167.7 M689.3,156.5 L663.8,151.4 M644.3,187.0 L643.1,176.7 M624.4,170.4 L641.0,174.6 M643.7,149.6 L643.8,149.7 M624.6,147.0 L623.9,147.6 M643.7,149.6 L644.2,142.2 M644.2,142.2 L650.2,126.3 M650.2,126.3 L651.6,126.7 M651.6,126.7 L664.7,143.4 M664.7,143.4 L663.1,150.2 M362.8,137.4 L372.4,147.0 M362.8,137.4 L357.2,139.9 L350.2,146.4 L344.3,148.3 L339.0,152.8 M372.4,147.0 L356.8,176.8 M338.9,164.9 L339.0,152.8 M398.6,120.4 L396.5,126.9 L390.7,134.6 L387.8,142.5 L384.4,150.7 M361.0,125.0 L362.8,137.4 M389.2,155.0 L384.4,150.7 M360.3,185.5 L356.8,176.8 M327.4,173.4 L338.9,164.9 M452.5,121.6 L450.6,125.9 M452.5,121.6 L442.6,101.1 M450.6,125.9 L418.1,125.8 M442.6,101.1 L424.2,101.2 M424.2,101.2 L417.6,125.0 M417.6,125.0 L418.1,125.8 M477.6,150.4 L471.6,149.0 L463.1,146.9 L455.2,146.8 M477.6,150.4 L479.5,144.2 L478.0,134.8 L481.0,129.1 L481.3,119.9 L481.3,113.8 M477.4,110.4 L467.7,114.8 L461.7,117.4 L452.5,121.6 M455.2,146.8 L450.6,125.9 M450.3,90.0 L442.6,101.1 M449.2,152.4 L455.2,146.8 M417.7,91.9 L424.2,101.2 M398.6,120.4 L417.6,125.0 M532.8,144.7 L527.6,153.3 M522.0,134.7 L518.9,140.6 L512.2,148.9 L508.6,153.8 M508.6,153.8 L527.6,153.3 M553.4,164.8 L534.5,170.9 M534.5,170.9 L528.9,158.2 M527.6,153.3 L528.9,158.2 M656.4,94.8 L652.7,105.0 M656.4,94.8 L651.0,89.4 M626.5,97.7 L624.5,111.1 M652.7,105.0 L645.5,117.4 M624.6,147.0 L626.0,131.6 M626.0,131.6 L636.7,129.7 M650.2,126.3 L647.1,123.7 M636.7,129.7 L647.1,123.7 M652.7,105.0 L658.2,114.6 L661.7,121.8 M645.5,117.4 L647.1,123.7 M780.9,363.6 L776.7,379.6 M780.9,363.6 L778.2,358.6 M778.2,358.6 L753.0,362.9 M772.2,383.1 L760.0,380.7 M772.2,383.1 L776.7,379.6 M760.0,380.7 L753.0,362.9 M802.3,364.8 L794.6,365.7 L786.5,363.6 L780.9,363.6 M796.3,386.7 L787.0,383.7 L776.7,379.6 M778.2,345.5 L778.2,358.6 M751.5,361.8 L753.0,362.9 M751.1,387.2 L760.0,380.7 M773.6,402.3 L772.9,392.9 L772.2,383.1 M758.8,482.6 L752.6,474.7 L746.5,467.0 M758.8,482.6 L776.8,481.2 M775.8,469.8 L776.8,481.2 M775.8,469.8 L768.5,467.2 L761.9,463.4 L755.5,459.4 M755.5,459.4 L746.5,467.0 M737.1,469.4 L746.5,467.0 M752.0,490.2 L758.8,482.6 M759.8,507.1 L773.5,507.9 M777.3,482.0 L773.5,507.9 M777.3,482.0 L776.8,481.2 M781.0,462.1 L775.8,469.8 M799.0,483.8 L790.4,483.3 L785.8,481.3 L777.3,482.0 M756.1,449.0 L755.5,459.4 M801.4,505.6 L774.5,509.1 M801.4,505.6 L801.9,513.9 L801.8,520.6 L800.8,528.4 M800.8,528.4 L796.6,533.3 M796.6,533.3 L791.0,530.7 L782.4,526.8 L776.6,523.5 M776.6,523.5 L774.5,509.1 M803.1,504.1 L801.4,505.6 M773.5,507.9 L774.5,509.1 M820.0,524.8 L800.8,528.4 M799.4,549.6 L798.4,542.9 L796.6,533.3 M671.7,408.9 L665.1,400.3 M645.6,418.8 L647.2,400.4 M647.2,400.4 L655.8,400.7 L665.1,400.3 M663.2,363.0 L661.6,374.4 M642.5,357.1 L642.1,366.4 L642.5,375.5 L643.1,383.5 M643.1,383.5 L661.6,374.4 M688.2,383.6 L681.4,383.6 L671.7,385.0 M665.1,400.3 L671.7,385.0 M671.7,385.0 L666.7,380.1 L661.6,374.4 M705.1,616.4 L708.8,608.7 L711.5,601.4 L712.6,594.4 M730.4,616.2 L725.9,624.2 M730.4,616.2 L729.1,608.7 L728.2,601.1 L727.7,594.3 M727.7,594.3 L712.6,594.4 M692.8,589.1 L701.1,593.0 L712.1,594.0 M712.6,594.4 L712.1,594.0 M694.6,572.5 L682.1,547.9 M694.6,572.5 L701.4,570.2 L709.4,566.3 M683.2,546.7 L682.1,547.9 M674.2,551.0 L682.1,547.9 M688.5,581.1 L694.6,572.5 M710.9,567.4 L712.1,594.0 M710.9,567.4 L709.4,566.3 M686.3,528.6 L685.2,537.5 L683.2,546.7 M711.3,548.0 L709.0,550.9 M796.1,587.7 L776.8,594.5 M775.4,568.7 L773.2,571.0 M773.2,571.0 L771.0,586.2 M776.8,594.5 L771.0,586.2 M792.0,618.4 L775.4,603.9 M776.8,594.5 L775.4,603.9 M760.2,637.0 L758.8,613.9 M775.4,603.9 L758.8,613.9 M730.4,616.2 L738.2,615.3 L747.5,612.6 L755.0,611.4 M758.8,613.9 L755.0,611.4 M364.4,531.4 L365.4,538.6 L366.5,545.5 L368.0,550.9 L367.5,559.3 M367.5,559.3 L360.7,560.1 L354.5,562.7 L346.4,561.1 L339.4,563.4 L331.9,564.7 M334.7,529.8 L331.6,564.4 M370.2,561.8 L367.5,559.3 M332.5,527.5 L334.7,529.8 M332.6,588.7 L331.8,580.0 L330.7,571.5 L331.9,564.7 M299.2,558.2 L331.6,564.4 M300.6,817.3 L317.6,815.0 M331.6,815.0 L331.8,815.2 M437.9,815.0 L439.3,816.5 M439.3,816.5 L447.0,816.5 L454.5,816.6 L464.7,815.6 L471.4,817.0 M473.0,815.0 L473.0,815.5 M473.0,815.5 L471.4,817.0 M497.2,818.8 L489.8,817.7 L480.6,815.3 L473.0,815.5 M242.0,815.0 L227.0,815.7 M159.8,820.0 L165.7,818.2 L174.9,818.6 L182.8,817.7 L189.5,817.3 M236.8,753.1 L229.7,753.7 M228.7,770.0 L229.7,753.7 M227.2,742.6 L228.3,752.2 M228.3,752.2 L229.7,753.7 M647.2,400.4 L644.2,396.9 M643.1,383.5 L641.4,385.2 M644.2,396.9 L641.4,385.2 M572.4,360.9 L575.4,363.6 M597.6,340.6 L595.8,362.7 M595.8,362.7 L586.3,363.5 L575.4,363.6 M553.9,382.6 L560.5,381.8 L568.7,382.4 L577.6,381.7 M575.4,363.6 L577.6,381.7 M574.1,397.4 L579.0,383.7 M577.6,381.7 L579.0,383.7 M621.5,362.0 L600.6,367.6 M621.5,362.0 L627.3,380.3 M627.3,380.3 L625.3,381.9 M625.3,381.9 L599.4,386.0 M600.6,367.6 L598.7,385.1 M599.4,386.0 L598.7,385.1 M623.2,358.5 L621.5,362.0 M595.8,362.7 L600.6,367.6 M641.4,385.2 L627.3,380.3 M579.0,383.7 L598.7,385.1 M625.8,417.6 L615.7,426.5 M625.8,417.6 L624.0,405.9 M618.3,402.0 L601.5,402.8 M605.6,427.0 L599.6,417.2 M599.6,417.2 L598.0,408.8 M598.0,408.8 L601.5,402.8 M642.0,421.7 L625.8,417.6 M633.2,444.3 L615.7,426.5 M644.2,396.9 L636.2,400.4 L631.5,402.9 L624.0,405.9 M625.3,381.9 L621.9,389.2 L621.9,396.5 L618.3,402.0 M599.4,386.0 L600.3,394.5 L601.5,402.8 M601.4,438.6 L605.6,427.0 M578.3,428.2 L599.6,417.2 M580.1,406.7 L598.0,408.8 M731.2,128.0 L729.8,126.9 M731.2,128.0 L751.3,123.7 M729.8,126.9 L735.9,100.4 M751.3,123.7 L749.1,113.4 L748.1,104.0 M748.1,104.0 L735.9,100.4 M716.3,151.6 L718.4,141.8 L720.6,133.8 L723.3,125.9 M734.1,146.1 L732.4,138.5 L731.2,128.0 M723.3,125.9 L729.8,126.9 M753.2,125.1 L751.3,123.7 M765.2,94.3 L755.4,100.0 L748.1,104.0 M738.0,73.8 L735.7,100.2 M735.7,100.2 L735.9,100.4 M714.1,124.0 L711.7,116.7 L709.8,107.7 L707.4,97.6 M714.1,124.0 L717.8,124.0 M717.8,124.0 L726.0,100.1 M707.4,97.6 L712.1,95.0 M707.3,97.6 L702.5,102.0 L697.4,109.9 L691.6,114.9 M706.9,128.1 L714.1,124.0 M691.6,114.9 L704.7,127.1 M735.7,100.2 L726.0,100.1 M717.3,71.9 L712.1,95.0 M685.4,85.9 L687.3,66.1 M685.4,85.9 L692.5,91.3 L700.7,93.5 L707.3,97.6 M688.4,114.9 L678.3,130.9 M688.4,114.9 L672.2,98.2 M672.2,98.2 L671.3,98.4 M667.3,121.1 L675.6,131.3 M675.6,131.3 L678.3,130.9 M691.6,114.9 L688.4,114.9 M684.1,134.9 L678.3,130.9 M685.4,85.9 L679.4,92.5 L672.2,98.2 M656.4,94.8 L664.8,97.0 L671.3,98.4 M664.7,143.4 L669.0,138.7 L675.6,131.3 M497.0,149.0 L505.3,154.6 M497.0,149.0 L480.1,152.2 M505.3,154.6 L509.1,171.4 M506.2,180.9 L509.7,178.5 M504.9,128.8 L497.0,149.0 M477.6,150.4 L480.1,152.2 M528.9,158.2 L509.1,171.4 M451.7,180.1 L479.8,182.0 M480.0,197.7 L480.5,182.9 M506.0,209.3 L506.8,207.7 M506.8,207.7 L506.2,180.9 M533.9,172.1 L527.1,174.6 L520.3,177.8 L511.5,178.9 M533.9,172.1 L536.1,177.8 L537.2,186.6 L540.1,193.2 M511.5,178.9 L525.6,195.8 M525.6,195.8 L532.4,197.4 M532.4,197.4 L540.1,193.2 M534.5,170.9 L533.9,172.1 M509.7,178.5 L511.5,178.9 M548.8,195.2 L540.1,193.2 M506.8,207.7 L512.9,203.8 L520.8,201.1 L525.6,195.8 M530.9,206.7 L532.4,197.4 M620.5,116.2 L620.5,121.2 M620.5,116.2 L610.9,112.9 L604.5,111.0 L595.7,109.7 M620.5,121.2 L613.6,125.1 L605.5,131.1 M605.5,131.1 L598.4,131.3 M594.1,128.3 L598.4,131.3 M626.0,131.6 L620.5,121.2 M592.7,105.0 L595.7,109.7 M617.2,147.7 L611.3,140.4 L605.5,131.1 M582.2,133.5 L594.1,128.3 M600.8,153.4 L598.7,145.7 L599.8,138.3 L598.4,131.3 M732.5,590.0 L729.6,571.4 M732.5,590.0 L746.2,591.5 M746.2,591.5 L751.9,586.6 M751.9,586.6 L751.6,565.6 M751.6,565.6 L751.6,565.6 M751.6,565.6 L742.3,566.9 L734.7,565.6 M734.7,565.6 L729.6,571.4 M710.9,567.4 L720.6,568.5 L729.6,571.4 M727.7,594.3 L732.5,590.0 M755.0,611.4 L746.2,591.5 M771.0,586.2 L760.5,586.4 L751.9,586.6 M755.5,550.6 L753.9,557.3 L751.6,565.6 M731.1,545.4 L734.7,565.6 M369.4,816.6 L368.3,815.4 M368.3,815.4 L368.2,815.0 M331.8,815.2 L368.3,815.4 M221.1,815.0 L226.9,815.6 M226.9,815.6 L226.9,815.0 M227.0,815.7 L226.9,815.6 M189.5,817.3 L191.3,815.0" stroke="#606568" stroke-width="1" fill="none" shape-rendering="crispEdges"/>
<path d="M440.0,649.0 L442.4,648.9 L446.1,649.6 L450.2,649.7 L453.3,649.4 L454.7,645.8 L456.0,643.0 L451.0,640.2 L447.3,639.9 L444.6,639.1 L440.6,639.5 L436.7,639.1 L433.3,638.5 L430.5,638.0 L427.0,639.5 L424.9,640.3 L422.3,642.9 L419.0,644.0 L421.8,646.6 L421.1,646.7 L417.9,645.7 L415.7,645.4 L412.1,644.8 L409.0,645.0 L406.2,644.9 L403.9,645.7 L402.1,645.5 L398.5,644.8 L395.6,643.4 L392.2,641.4 L389.4,640.2 L388.2,637.7 L387.3,634.3 L387.1,631.1 L385.1,633.8 L383.2,636.4 L380.2,638.0 L378.1,635.3 L375.7,633.4 L374.3,636.7 L373.1,638.4 L371.0,641.1 L370.1,644.8 L368.8,647.1 L365.6,648.4 L363.1,649.8 L359.7,651.7 L355.8,653.2 L352.0,654.0 L365.0,654.0 L363.6,654.5 L362.5,654.7 L362.4,654.8 L360.0,655.0 L357.8,655.9 L357.1,656.4 L356.9,656.4 L354.5,656.0 L351.1,656.6 L348.2,657.3 L345.6,656.8 L342.0,657.3 L339.1,657.0 L335.3,657.6 L333.4,658.1 L333.3,657.9 L331.3,654.3 L329.9,651.7 L327.7,649.4 L325.5,647.5 L323.7,644.2 L320.8,642.5 L320.6,639.8 L320.6,637.0 L319.9,633.2 L319.6,630.7 L319.7,627.0 L319.7,624.2 L315.9,623.6 L312.8,622.0 L309.8,624.9 L306.8,627.0 L304.8,628.8 L304.8,655.5 L303.4,655.0 L300.0,655.0 L297.2,654.6 L292.8,653.9 L289.8,653.2 L285.8,652.7 L283.0,652.0 L283.0,656.5 L281.7,656.1 L277.2,654.0 L273.8,653.7 L271.8,652.4 L268.5,650.6 L265.9,650.1 L262.2,647.6 L259.4,646.5 L256.6,645.6 L253.4,645.9 L249.4,646.3 L245.3,646.4 L242.7,647.0 L238.6,647.4 L235.7,648.5 L233.3,650.5 L229.9,650.8 L227.4,652.4 L224.2,653.5 L220.9,654.8 L217.9,657.4 L215.2,659.7 L215.2,659.6 L212.5,660.5 L209.0,660.0 L206.6,662.8 L204.0,665.0 L199.2,666.7 L195.4,667.4 L193.9,671.2 L191.7,674.8 L188.8,678.1 L186.8,681.0 L183.5,681.0 L180.6,679.7 L177.0,682.0 L177.0,685.9 L179.4,688.3 L184.3,689.6 L185.5,692.8 L186.8,695.7 L191.7,694.5 L193.3,691.2 L194.2,688.3 L196.1,685.3 L197.9,683.4 L199.4,680.8 L201.6,679.1 L204.0,676.0 L206.5,671.0 L209.3,669.8 L213.1,667.8 L216.3,666.4 L219.0,664.7 L220.9,664.3 L222.0,666.0 L224.8,668.5 L226.0,672.0 L228.1,675.5 L229.0,680.0 L228.0,684.1 L228.4,686.2 L227.0,690.0 L224.5,693.2 L224.4,695.8 L222.0,700.0 L220.2,702.5 L216.2,703.8 L214.0,706.0 L211.4,707.2 L207.4,710.3 L205.0,712.0 L204.3,715.3 L203.7,718.6 L202.0,722.0 L204.2,726.2 L206.0,730.0 L208.1,732.9 L211.9,735.1 L215.0,737.0 L218.9,739.0 L222.0,740.0 L226.2,742.7 L230.0,744.0 L232.8,746.9 L236.0,750.0 L237.9,753.9 L238.0,758.0 L237.4,761.0 L238.3,764.4 L238.0,766.5 L238.0,770.0 L235.5,769.9 L232.0,770.4 L229.1,770.7 L224.8,770.2 L222.7,769.7 L219.6,770.8 L215.9,769.4 L212.8,770.3 L210.4,769.3 L207.6,769.3 L204.0,770.0 L203.4,767.5 L204.2,762.8 L204.0,760.0 L203.3,757.4 L202.8,754.8 L200.7,751.4 L200.0,748.0 L195.9,746.8 L192.4,745.7 L190.0,744.0 L186.3,744.8 L184.2,743.9 L180.7,744.8 L177.5,744.8 L175.0,745.0 L172.7,745.9 L169.9,746.6 L165.7,747.4 L163.0,748.0 L162.1,750.9 L161.4,754.3 L161.2,756.9 L160.0,760.0 L157.2,760.7 L154.0,760.8 L151.8,760.6 L148.0,760.1 L144.9,759.6 L141.4,759.7 L139.0,760.8 L135.9,760.5 L133.9,759.5 L129.6,759.7 L127.6,760.6 L123.5,760.0 L121.5,759.3 L118.3,759.1 L115.0,760.0 L113.2,758.1 L111.9,754.5 L110.0,752.1 L108.0,750.0 L105.3,749.4 L101.6,748.0 L97.4,746.6 L95.0,745.0 L91.4,744.9 L88.4,742.5 L86.3,742.0 L83.8,740.9 L80.0,741.0 L77.8,738.5 L74.5,734.8 L73.2,731.0 L71.7,726.4 L67.5,727.8 L65.4,727.3 L61.8,725.7 L59.0,724.3 L55.2,725.0 L52.0,725.0 L51.5,720.9 L50.0,716.5 L45.0,715.0 L46.3,712.2 L47.0,708.6 L47.8,705.3 L45.0,706.0 L41.9,705.6 L38.3,706.5 L33.7,706.7 L30.4,708.2 L27.4,708.8 L28.2,705.7 L30.2,702.5 L28.0,699.0 L23.7,699.7 L19.7,699.0 L17.2,699.8 L14.4,701.8 L11.2,702.5 L6.0,705.3 L0.0,705.3 L0.7,707.5 L0.3,710.9 L0.4,714.1 L-0.8,717.3 L-0.5,720.0 L-0.1,724.3 L-0.6,726.5 L-0.9,728.9 L-0.0,733.0 L-0.4,735.1 L0.8,738.5 L0.6,741.9 L0.5,744.1 L0.8,748.3 L0.1,750.3 L-0.3,754.6 L-0.7,756.5 L-0.3,760.5 L-0.8,763.6 L-0.7,766.2 L0.9,769.7 L0.2,773.1 L0.3,774.6 L0.1,778.0 L0.5,781.0 L-0.7,784.1 L-0.3,787.1 L-0.5,791.3 L0.4,793.5 L-0.5,796.4 L0.8,799.6 L-0.6,802.5 L-0.4,805.7 L-0.2,808.0 L0.9,811.8 L0.0,815.0 L2.9,814.6 L6.5,814.8 L9.0,815.0 L12.7,815.6 L14.7,815.4 L18.6,815.0 L20.8,815.5 L23.7,814.8 L26.8,815.9 L30.1,814.3 L33.6,815.7 L35.2,815.1 L38.2,815.6 L42.4,815.2 L45.7,814.5 L47.5,814.4 L51.4,815.9 L54.3,815.3 L56.8,814.5 L60.0,815.8 L63.1,815.1 L65.7,815.6 L69.1,814.9 L72.7,814.9 L74.9,814.3 L77.4,815.9 L81.5,814.5 L84.5,814.6 L87.4,814.6 L89.9,815.1 L92.5,815.0 L97.0,815.5 L98.5,814.7 L101.7,814.8 L104.8,815.4 L108.4,815.6 L110.6,815.5 L115.0,814.5 L117.6,814.9 L120.9,814.9 L123.7,815.1 L125.9,814.9 L129.8,815.9 L133.0,815.1 L135.7,815.3 L138.7,814.8 L141.7,815.2 L145.1,814.5 L147.2,815.7 L150.3,814.4 L152.5,815.3 L155.6,814.8 L159.7,815.6 L162.2,814.3 L166.1,815.0 L168.7,814.8 L171.5,815.4 L174.9,814.8 L176.4,815.1 L180.5,815.6 L183.8,815.2 L185.6,815.4 L189.8,815.8 L192.9,815.3 L195.8,815.0 L197.6,815.5 L201.2,814.4 L204.6,814.9 L207.1,815.9 L209.9,814.8 L213.3,814.7 L215.8,815.1 L218.4,814.8 L222.1,814.1 L226.0,814.6 L229.2,815.7 L231.4,815.5 L235.1,815.8 L237.6,814.3 L240.0,814.3 L242.6,814.5 L246.8,815.6 L249.9,815.8 L252.8,815.1 L255.1,814.1 L257.6,815.1 L262.2,814.6 L263.7,815.1 L268.2,814.9 L270.4,815.1 L272.9,814.9 L277.1,815.5 L279.4,814.6 L281.9,815.9 L286.1,814.6 L288.3,815.4 L291.4,815.6 L294.6,815.9 L297.3,815.3 L301.3,814.6 L302.7,814.3 L306.3,814.4 L309.8,815.3 L311.6,815.8 L315.4,814.4 L318.8,814.2 L320.8,814.4 L324.2,815.1 L327.2,814.7 L330.1,815.0 L332.9,814.9 L336.6,815.3 L339.3,815.1 L342.8,815.1 L345.4,814.6 L347.7,815.4 L351.8,815.3 L355.0,815.9 L357.7,815.8 L360.3,814.7 L363.2,814.4 L366.2,814.8 L369.3,815.7 L372.3,814.6 L375.7,815.6 L377.8,815.7 L382.4,814.8 L383.8,815.2 L387.5,815.2 L390.3,814.2 L392.9,814.6 L396.8,815.2 L399.9,814.4 L403.4,815.6 L405.4,815.2 L409.1,814.4 L412.1,814.9 L414.4,814.3 L417.3,815.8 L421.5,814.9 L423.2,815.5 L426.9,815.1 L430.1,814.2 L432.3,815.5 L435.4,815.5 L437.9,815.3 L442.2,814.3 L445.2,815.3 L447.9,814.5 L451.5,814.6 L453.5,815.5 L457.0,815.1 L459.5,815.8 L463.3,814.6 L465.1,814.6 L468.6,814.3 L471.2,814.7 L474.7,815.2 L477.5,815.5 L481.0,815.8 L484.2,814.1 L487.0,814.4 L489.6,814.7 L492.3,814.1 L496.3,814.4 L498.8,814.4 L501.1,814.5 L504.6,815.4 L508.5,815.8 L509.9,815.8 L514.0,814.6 L517.0,814.5 L519.2,815.3 L522.2,814.7 L525.9,815.1 L529.1,815.1 L531.7,814.4 L535.1,814.4 L537.9,815.8 L540.7,814.7 L543.0,814.7 L547.4,814.2 L549.0,815.0 L553.5,814.1 L555.4,815.4 L559.1,814.9 L562.2,815.1 L564.5,814.4 L567.0,815.4 L571.3,815.6 L573.9,815.5 L577.6,815.0 L579.8,814.4 L583.0,815.6 L586.3,815.8 L588.0,814.4 L591.6,815.6 L595.6,815.3 L597.5,814.5 L600.3,815.3 L604.2,814.5 L607.3,815.2 L610.6,815.2 L612.1,814.6 L615.6,814.5 L619.2,814.2 L622.6,815.8 L624.2,814.8 L628.4,814.4 L631.5,814.7 L634.3,815.6 L636.7,815.2 L640.6,814.1 L643.5,814.3 L645.5,815.6 L649.8,814.2 L652.5,814.5 L654.1,814.6 L657.2,815.6 L661.8,814.3 L664.3,815.5 L667.2,815.6 L670.0,815.9 L672.3,814.1 L676.3,815.6 L679.8,814.4 L682.6,814.5 L684.7,815.9 L688.0,814.9 L690.3,814.7 L693.5,814.9 L697.4,814.8 L699.7,815.5 L702.5,815.1 L706.3,815.6 L708.3,815.0 L712.0,815.0 L712.6,811.6 L711.9,808.6 L711.1,806.3 L711.8,803.1 L711.2,798.8 L711.4,795.9 L710.7,793.0 L711.0,789.2 L712.5,786.0 L710.8,783.5 L708.5,780.9 L707.0,778.7 L706.1,776.2 L705.5,773.1 L703.6,769.7 L703.5,766.0 L702.5,761.1 L700.0,758.0 L697.0,757.8 L693.3,756.6 L689.0,757.1 L686.8,761.0 L683.7,764.3 L682.7,761.4 L682.2,757.7 L682.4,755.6 L682.0,751.7 L680.0,748.5 L676.3,745.8 L674.7,742.7 L673.1,739.0 L669.4,736.5 L667.5,733.7 L664.1,731.3 L661.5,729.3 L660.3,728.0 L656.8,726.5 L657.2,724.0 L656.2,720.3 L657.6,717.2 L656.8,714.0 L654.7,712.3 L651.0,709.8 L649.3,709.0 L646.0,706.8 L643.6,703.5 L642.4,699.6 L641.1,697.2 L639.0,693.2 L637.0,690.6 L633.9,689.1 L631.0,686.1 L628.0,683.4 L624.4,681.7 L621.0,681.8 L617.2,679.8 L614.0,676.9 L610.8,674.6 L607.9,675.3 L603.8,674.9 L601.1,674.8 L598.2,674.6 L595.5,675.8 L591.6,677.5 L588.7,680.1 L587.1,682.9 L583.1,685.5 L580.7,689.1 L579.2,691.2 L576.2,693.2 L576.0,692.8 L574.8,693.9 L573.9,694.3 L572.6,695.7 L570.3,697.0 L566.6,699.1 L563.3,700.3 L560.2,702.3 L557.3,703.6 L554.2,706.1 L550.7,706.8 L547.6,708.6 L548.2,704.9 L549.2,700.7 L544.5,702.2 L541.2,703.9 L539.0,706.9 L536.5,708.6 L532.4,710.0 L528.6,710.2 L526.1,710.3 L522.3,711.0 L518.0,710.8 L514.3,710.0 L513.6,705.4 L514.3,702.3 L513.0,698.5 L510.6,695.9 L509.6,692.8 L507.2,691.3 L505.1,688.0 L502.3,685.9 L500.0,683.3 L496.9,681.6 L494.7,678.6 L493.0,677.4 L489.2,674.3 L487.3,672.5 L484.3,670.6 L482.0,669.6 L478.5,667.9 L477.0,665.2 L474.6,663.8 L471.7,663.4 L469.1,661.9 L466.5,659.2 L463.7,658.0 L460.9,657.8 L457.2,656.5 L454.9,655.5 L451.5,654.1 L448.7,652.0 L445.8,651.4 L442.3,650.0 L440.0,649.5 L440.0,649.0Z M490.6,672.2 L493.3,674.1 L496.0,676.0 L499.2,678.0 L502.2,679.2 L505.0,680.7 L508.0,683.0 L506.5,680.1 L503.1,677.3 L500.1,673.8 L496.3,672.3 L493.8,672.2 L490.2,670.5 L487.5,667.5 L490.3,664.0 L492.2,661.1 L494.3,658.9 L496.8,657.1 L498.5,654.0 L495.4,653.2 L492.7,656.4 L489.7,658.2 L487.5,661.1 L484.3,657.6 L481.1,654.8 L477.7,656.0 L473.2,656.4 L470.0,660.0 L484.0,668.0 L487.6,669.6 L490.6,672.2Z" fill="#014363" stroke="#000" stroke-width="1" fill-rule="evenodd"/>
<path d="M300,663 L312.8,663.1 L341.4,660.8 L375.7,651.7 L409.9,646.6 L439.6,649.4 L463.7,658" stroke="#000" stroke-width="1.6" fill="none"/>
<path d="M522.3,711 L533.3,719.7 L542.8,714.9 L553.9,710.2 L563.4,705.4 L569.7,698.3" stroke="#000" stroke-width="1.6" fill="none"/>
<path d="M800,590 L806,588 L806,652 L801,650 L802,620 Z" fill="#014363"/>
<path d="M83.0,741.0 L100.0,739.0 L120.0,742.0 L148.0,740.0 L150.0,757.0 L83.0,757.0Z" fill="#014363"/>
<path d="M105.4,756.2 L104.7,758.3 L103.4,757.3 L102.4,756.2 L102.7,755.1 L104.5,754.3Z M140.5,747.7 L139.1,749.3 L137.9,747.7 L139.1,746.5Z M116.7,755.1 L116.0,756.1 L114.5,755.9 L114.0,754.6 L116.0,753.6Z M123.8,746.3 L123.7,746.9 L122.6,747.9 L122.0,747.0 L121.8,745.9 L122.6,745.3 L123.5,745.8Z M140.4,747.4 L140.1,748.3 L139.2,747.9 L139.1,746.8 L140.1,747.0Z M97.9,754.8 L97.5,755.7 L96.1,756.2 L94.8,755.6 L94.8,754.1 L96.1,752.9 L97.5,753.6Z M89.3,747.9 L88.5,748.5 L87.4,748.8 L86.3,748.4 L86.6,747.5 L87.5,746.3 L88.5,746.5Z M112.3,755.9 L111.6,756.3 L111.2,756.7 L111.0,756.2 L110.6,755.7 L111.2,755.4 L111.7,755.5Z M135.3,752.2 L133.9,754.2 L132.4,753.1 L132.3,751.2 L133.9,750.8Z M138.8,743.0 L138.4,744.2 L137.2,743.8 L137.0,742.4 L138.5,741.7Z M130.0,754.1 L128.5,755.3 L127.8,754.1 L128.5,752.9Z M115.3,753.5 L114.7,754.6 L113.7,754.0 L113.4,753.5 L113.7,752.4 L114.7,752.1Z M115.5,742.4 L114.6,743.5 L113.0,742.4 L114.6,741.0Z M85.8,751.7 L85.1,753.1 L83.2,752.5 L82.5,751.7 L83.3,750.3 L84.8,750.0Z M88.2,749.5 L87.2,751.0 L85.8,750.7 L85.3,750.3 L84.6,748.8 L85.8,748.1 L87.4,748.5Z M109.0,756.5 L107.4,757.7 L106.1,757.8 L104.9,756.5 L106.2,755.5 L107.7,755.7Z M110.6,752.5 L109.8,753.2 L109.2,753.7 L108.6,752.9 L108.3,752.2 L109.2,751.2 L109.9,751.8Z M127.9,745.0 L127.3,745.9 L126.3,746.0 L125.5,745.3 L125.1,744.5 L126.2,743.7 L126.9,744.4Z M140.4,750.8 L139.1,752.7 L137.6,751.7 L137.0,750.3 L138.9,749.3Z M104.6,753.8 L104.7,754.7 L103.4,755.3 L102.8,754.4 L103.0,753.2 L103.5,752.9 L104.7,753.1Z M91.1,743.1 L90.5,743.8 L89.0,743.8 L89.4,742.1 L90.5,742.1Z M116.8,741.6 L115.8,742.3 L115.0,742.7 L114.1,741.6 L114.8,740.3 L115.7,740.9Z M110.5,752.4 L109.8,753.1 L108.6,752.4 L109.8,751.2Z M113.0,747.2 L112.8,747.7 L112.1,748.2 L111.5,747.4 L111.2,746.9 L112.1,746.6 L112.8,746.3Z M118.3,752.1 L118.3,753.0 L117.1,753.2 L116.5,752.1 L116.8,751.0 L118.0,751.3Z M133.4,755.5 L131.7,757.0 L130.8,756.4 L129.9,754.8 L132.0,754.0Z M116.9,755.4 L117.1,756.3 L115.9,756.5 L115.3,755.7 L115.3,754.8 L115.9,754.0 L116.9,754.2Z M143.3,746.4 L142.6,746.9 L142.0,747.3 L141.4,746.8 L141.0,746.1 L141.9,745.4 L142.7,745.4Z M101.4,744.4 L100.1,745.7 L98.6,744.4 L100.1,743.5Z M138.8,754.6 L138.7,755.4 L137.6,755.1 L136.7,755.1 L137.0,754.2 L137.7,753.9 L138.5,754.1Z M115.9,747.8 L114.7,748.8 L113.8,747.8 L114.7,747.2Z M118.7,744.2 L117.6,745.4 L115.6,745.6 L115.4,744.2 L115.4,743.2 L117.4,742.1Z M88.5,746.4 L86.7,747.4 L85.8,747.1 L85.1,745.2 L86.7,745.3Z M143.5,749.6 L142.6,750.6 L141.7,749.6 L142.6,749.1Z M124.5,757.0 L123.5,758.1 L122.2,757.7 L122.4,756.2 L123.6,756.2Z M127.8,751.8 L127.1,752.3 L126.5,751.8 L127.1,750.5Z M121.9,745.4 L121.8,746.5 L120.4,746.4 L119.1,745.4 L120.2,743.6 L121.5,744.6Z M118.3,751.0 L117.6,751.6 L117.0,751.7 L116.2,751.6 L116.7,750.7 L117.0,749.8 L117.6,750.3Z M142.9,742.6 L141.9,743.9 L140.0,744.9 L138.9,743.6 L138.4,742.0 L140.1,740.6 L141.2,741.5Z M120.7,744.0 L120.2,745.5 L117.9,745.3 L118.0,742.7 L120.3,743.0Z M99.4,749.9 L99.4,750.8 L98.3,750.8 L97.8,750.2 L97.6,749.4 L98.4,749.0 L98.9,749.1Z M124.5,746.3 L124.4,747.0 L123.8,747.0 L123.2,746.6 L123.0,746.0 L123.9,745.5 L124.5,745.8Z M111.0,745.2 L109.7,746.2 L107.8,745.2 L109.7,743.0Z M145.6,743.7 L143.5,745.0 L141.9,743.7 L143.5,742.5Z M133.6,753.2 L132.9,753.8 L132.1,753.2 L132.9,752.0Z M129.0,753.6 L128.5,754.5 L128.0,754.3 L127.5,753.6 L127.8,752.8 L128.6,753.1Z M135.4,748.5 L135.2,749.6 L134.1,749.3 L133.6,748.5 L134.0,747.4 L135.1,747.2Z M117.1,750.9 L116.8,751.9 L115.9,751.5 L115.9,750.4 L116.7,750.0Z M84.4,755.6 L83.6,756.6 L82.3,756.4 L82.3,754.6 L83.4,754.3Z M109.2,752.2 L108.3,753.2 L107.0,752.8 L107.0,751.2 L108.4,751.3Z M113.2,743.4 L112.7,744.7 L110.8,744.6 L110.8,742.6 L112.6,741.1Z M90.5,743.5 L89.4,745.5 L87.5,743.5 L89.4,742.5Z M109.2,754.8 L107.8,757.2 L106.0,754.8 L107.8,753.1Z M111.9,743.3 L111.1,743.9 L110.1,744.0 L110.4,742.8 L111.0,742.7Z M103.0,750.1 L102.6,751.1 L101.1,751.5 L100.2,750.9 L100.3,749.7 L101.1,748.7 L102.6,748.7Z M146.2,744.6 L144.6,745.3 L143.1,744.6 L144.6,743.8Z M107.4,752.4 L107.2,753.7 L105.8,753.3 L105.5,753.3 L105.2,751.6 L106.0,751.5 L107.4,751.6Z M114.6,755.1 L114.2,756.8 L112.3,756.4 L111.7,755.1 L112.4,753.2 L113.7,753.3Z M136.5,752.7 L136.3,753.8 L135.5,753.8 L135.2,752.7 L135.2,752.1 L136.4,752.0Z M85.4,755.4 L85.2,756.0 L84.6,756.2 L83.7,755.8 L83.8,755.0 L84.6,754.5 L85.3,754.5Z M145.8,748.6 L145.2,749.5 L144.2,749.4 L143.8,748.6 L144.4,747.9 L145.2,747.7Z M114.3,747.9 L111.9,750.1 L110.1,747.9 L111.9,746.6Z M96.5,740.3 L96.6,740.7 L95.7,741.1 L95.4,740.8 L95.5,739.8 L95.8,739.8 L96.3,739.4Z M114.4,751.3 L113.2,752.1 L112.4,753.0 L111.8,752.2 L111.6,750.6 L112.2,749.4 L113.4,750.1Z M122.7,749.1 L121.9,750.9 L120.1,751.0 L119.2,749.6 L119.2,748.5 L120.2,748.1 L121.8,747.2Z M85.7,754.4 L84.8,755.1 L83.5,755.3 L84.1,753.9 L84.9,753.6Z M116.4,748.0 L116.3,748.7 L115.5,749.0 L115.3,748.3 L115.0,747.7 L115.5,747.2 L116.3,747.5Z M124.0,754.2 L123.8,754.9 L122.8,755.5 L121.8,754.8 L122.0,753.8 L122.8,753.1 L123.9,753.0Z M142.7,757.0 L141.6,758.2 L141.0,758.2 L140.4,757.6 L140.5,756.2 L141.0,756.2 L141.6,755.8Z M100.9,739.3 L100.0,740.5 L98.3,740.6 L97.6,738.5 L99.7,738.3Z M106.0,750.1 L104.8,750.6 L103.7,750.1 L104.8,749.5Z M102.4,741.5 L101.5,742.4 L100.7,742.3 L100.2,741.5 L100.8,740.4 L101.7,740.4Z M127.4,748.2 L127.2,749.6 L125.4,749.2 L124.0,748.7 L124.9,747.5 L125.6,746.2 L126.7,747.4Z M127.3,755.3 L125.8,756.7 L123.8,756.5 L123.8,754.0 L125.7,754.1Z M137.4,749.9 L135.4,751.1 L134.1,749.9 L135.4,748.6Z M88.6,747.5 L87.8,748.5 L86.8,747.5 L87.8,746.7Z M85.9,745.1 L84.8,746.4 L83.7,745.1 L84.8,743.9Z M99.1,745.3 L98.0,746.8 L96.5,745.9 L96.7,744.6 L98.0,744.6Z M95.0,741.6 L93.5,742.6 L92.2,741.6 L93.5,740.7Z M105.4,743.9 L105.1,744.6 L104.1,744.4 L103.5,743.9 L104.1,742.7 L104.8,742.6Z M146.4,743.9 L145.9,745.3 L144.9,745.3 L143.9,743.9 L144.7,743.1 L145.9,743.1Z M151.3,755.9 L150.0,756.8 L148.7,756.9 L148.6,754.9 L150.0,754.7Z M98.0,743.9 L97.2,744.7 L96.0,744.5 L96.2,743.4 L97.2,743.2Z M133.0,751.2 L132.1,752.5 L130.7,752.2 L131.0,750.7 L132.1,749.5Z M147.8,747.8 L146.0,750.2 L143.6,749.0 L143.4,746.3 L145.8,745.4Z M90.5,745.0 L90.3,745.7 L89.1,745.7 L88.9,744.5 L90.2,743.7Z M116.5,746.1 L114.8,748.0 L113.4,746.8 L113.2,744.8 L114.8,744.8Z M123.9,742.0 L122.8,742.5 L122.0,742.0 L122.8,741.5Z M129.6,749.9 L127.8,750.8 L126.5,749.9 L127.8,749.0Z M140.5,744.7 L140.0,746.2 L139.0,745.9 L138.5,745.6 L137.6,743.9 L139.2,743.4 L140.6,743.4Z M140.5,748.1 L139.4,749.9 L137.2,748.1 L139.4,746.6Z M109.9,743.8 L109.1,744.6 L108.3,744.4 L107.2,743.8 L108.2,742.9 L109.1,743.1Z M143.0,741.3 L142.3,742.2 L141.2,742.3 L140.7,741.3 L141.5,740.3 L142.4,740.5Z M145.9,745.4 L144.4,746.4 L142.5,746.3 L142.4,744.2 L144.5,743.6Z M103.6,748.0 L102.7,749.8 L101.7,749.1 L100.2,749.0 L100.0,747.4 L101.4,746.5 L103.0,746.6Z M92.5,757.0 L91.2,757.7 L89.7,757.8 L89.8,756.5 L91.1,755.4Z M148.8,745.0 L148.2,747.1 L146.6,746.4 L145.0,745.0 L146.7,743.6 L148.5,743.7Z M136.9,755.0 L135.8,756.4 L134.6,756.0 L133.7,755.5 L133.3,754.3 L134.8,753.4 L135.8,754.4Z M114.6,754.4 L113.9,755.5 L113.0,754.7 L112.6,753.7 L113.8,753.7Z M87.7,748.5 L86.8,749.6 L85.3,749.3 L85.2,747.9 L86.9,747.7Z M128.2,742.8 L128.0,743.5 L127.0,743.4 L126.7,742.8 L127.2,741.9 L128.0,741.6Z M146.4,744.1 L146.2,744.8 L145.4,744.9 L144.7,744.5 L144.8,743.9 L145.4,743.4 L145.9,743.3Z M98.6,755.1 L98.3,755.6 L97.4,755.6 L96.9,755.1 L97.4,754.2 L98.3,754.1Z M120.7,746.0 L120.9,747.4 L119.1,747.6 L118.2,746.4 L118.3,745.5 L119.3,745.0 L120.8,744.1Z M131.5,754.0 L131.0,755.7 L129.2,755.6 L128.9,754.8 L127.6,753.3 L129.4,752.9 L131.0,752.2Z M124.9,745.9 L124.1,747.5 L123.2,747.8 L122.5,746.5 L122.3,745.2 L123.1,744.3 L124.4,744.7Z M99.3,755.2 L99.0,755.6 L98.3,756.2 L97.9,755.4 L97.4,754.7 L98.4,754.0 L99.1,754.2Z M113.9,746.8 L112.8,748.7 L111.8,747.7 L111.2,745.9 L112.8,745.8Z M128.4,751.3 L127.8,751.9 L126.9,751.3 L127.8,750.3Z M98.5,750.4 L97.2,752.3 L95.0,751.1 L95.1,749.7 L97.1,748.8Z M119.0,754.7 L118.0,755.7 L117.0,755.8 L115.7,755.1 L116.2,754.0 L117.1,752.8 L118.3,753.5Z M115.5,748.9 L115.2,750.0 L114.0,750.0 L112.9,748.9 L113.8,747.8 L114.8,747.6Z M113.0,754.3 L112.5,755.7 L110.4,755.2 L109.6,754.3 L110.9,753.4 L112.4,752.5Z M149.2,742.6 L148.6,744.1 L147.1,743.5 L147.2,741.9 L148.7,740.7Z M148.0,746.3 L146.7,747.9 L144.9,747.6 L145.1,745.1 L146.4,745.3Z M95.2,754.3 L94.7,756.4 L92.5,755.5 L92.4,753.3 L94.9,753.0Z M96.4,756.2 L94.3,758.6 L92.6,756.2 L94.3,754.8Z M120.1,753.7 L119.4,754.7 L118.1,754.4 L118.4,753.0 L119.4,752.4Z M85.9,744.5 L85.8,745.3 L85.0,745.3 L84.7,744.5 L85.0,744.0 L85.6,743.8Z M96.2,753.4 L94.1,755.4 L92.3,753.4 L94.1,752.0Z M106.4,740.0 L104.3,741.5 L102.7,740.0 L104.3,739.1Z M127.0,750.3 L126.2,751.5 L125.1,750.3 L126.2,749.4Z M97.9,756.8 L96.2,758.2 L94.8,756.8 L96.2,755.3Z M88.2,748.8 L87.8,750.0 L85.6,749.8 L85.9,747.4 L87.9,746.9Z M87.6,742.1 L87.6,743.0 L86.6,743.0 L86.2,742.1 L86.3,740.9 L87.4,741.2Z M113.7,740.9 L112.1,742.9 L110.1,741.8 L110.4,739.6 L111.9,738.7Z M97.5,747.9 L96.7,748.9 L95.3,748.7 L95.2,747.2 L96.9,746.9Z M139.8,747.1 L139.0,748.2 L138.1,747.1 L139.0,746.4Z M133.5,745.0 L132.9,745.8 L131.8,746.5 L131.4,745.6 L131.3,744.5 L131.8,744.0 L133.2,744.1Z M141.9,741.3 L141.8,741.9 L141.0,741.8 L140.2,741.7 L140.4,740.9 L140.9,740.5 L141.4,740.7Z M142.9,747.6 L141.8,748.8 L140.0,748.2 L140.1,746.9 L141.8,745.9Z M115.9,742.8 L114.5,743.8 L113.5,742.8 L114.5,742.0Z M120.0,743.9 L119.8,744.3 L119.0,744.4 L118.1,744.2 L118.0,743.4 L118.9,743.3 L119.6,743.1Z M129.8,744.6 L129.0,745.2 L127.9,744.6 L129.0,743.7Z M131.8,751.9 L131.2,752.9 L129.8,752.6 L129.9,751.6 L131.0,751.2Z M131.0,755.5 L130.5,757.0 L129.1,756.3 L128.7,754.5 L130.6,753.5Z M120.1,754.6 L119.2,755.8 L117.9,755.6 L117.5,754.2 L119.2,752.8Z M124.7,756.7 L124.1,757.4 L122.9,757.5 L122.4,756.7 L123.2,755.6 L124.2,755.8Z M150.2,755.1 L149.1,756.5 L147.8,755.5 L148.0,754.7 L148.9,754.4Z M106.2,739.9 L105.0,741.6 L102.8,740.8 L103.1,739.2 L104.7,738.8Z M122.2,756.2 L121.1,757.9 L119.5,756.2 L121.1,754.9Z M100.6,740.0 L99.5,741.3 L98.7,741.2 L97.6,740.5 L98.2,739.6 L98.5,738.7 L99.8,738.6Z M96.4,746.4 L94.8,747.9 L92.6,746.4 L94.8,745.1Z M129.3,746.3 L128.6,747.2 L127.6,747.4 L127.6,746.3 L127.7,745.4 L128.6,745.6Z M140.9,755.3 L140.3,755.9 L139.5,756.1 L139.3,754.8 L140.2,754.6Z M128.3,749.8 L128.1,750.6 L127.3,751.0 L127.0,749.8 L127.2,749.3 L128.0,749.0Z M130.8,743.7 L129.2,746.0 L127.9,743.7 L129.2,742.0Z M85.3,743.4 L85.1,744.3 L84.1,744.1 L84.0,743.4 L84.3,742.6 L85.2,742.9Z M134.8,756.2 L133.9,757.5 L132.0,757.2 L131.4,756.2 L132.1,754.7 L133.5,755.3Z M105.3,750.7 L104.3,751.6 L102.4,750.7 L104.3,749.8Z M96.5,749.4 L96.0,750.3 L94.6,750.8 L94.5,749.4 L94.5,748.4 L96.2,747.9Z M133.5,745.5 L132.6,746.8 L131.7,747.0 L130.6,745.5 L131.6,744.5 L133.3,743.8Z M145.0,750.1 L145.3,751.3 L144.1,750.9 L143.3,750.6 L143.7,749.6 L144.1,749.3 L145.2,749.3Z M98.0,744.2 L96.8,745.1 L95.2,744.2 L96.8,742.8Z M97.5,750.0 L96.7,750.5 L96.0,750.4 L95.5,749.6 L96.8,749.5Z M115.6,744.5 L114.3,745.4 L112.7,745.3 L112.2,744.0 L114.2,743.2Z M90.9,749.5 L90.6,749.9 L90.0,750.5 L89.3,749.5 L89.8,748.5 L90.8,748.8Z M138.4,753.2 L137.6,754.0 L136.8,753.7 L136.9,752.7 L137.5,752.7Z M129.5,746.7 L128.6,748.6 L126.8,748.5 L126.2,746.7 L127.1,745.5 L128.7,745.4Z M99.4,747.5 L98.9,748.7 L97.6,749.0 L97.2,748.2 L96.4,746.7 L97.7,746.7 L99.0,746.4Z M104.8,753.8 L104.2,754.9 L103.1,754.6 L102.3,753.8 L103.2,753.2 L104.4,752.9Z M144.5,746.5 L142.8,747.2 L141.5,746.5 L142.8,745.4Z M111.1,745.5 L111.0,746.5 L110.2,747.0 L109.3,746.1 L109.3,745.0 L110.2,743.7 L111.1,744.7Z M102.1,756.6 L100.2,758.7 L97.9,756.6 L100.2,755.1Z" fill="#000" shape-rendering="crispEdges"/>
<path d="M109.8,752.3 L108.1,753.3 L106.0,753.5 L106.3,751.5 L108.2,751.3Z M146.3,756.7 L145.5,757.4 L144.4,758.2 L143.5,757.4 L143.1,756.3 L144.4,755.1 L145.4,755.4Z M85.3,744.2 L84.6,745.1 L82.9,745.5 L81.9,744.2 L83.1,742.6 L84.3,743.2Z M138.0,748.6 L137.4,749.1 L136.9,749.8 L136.2,749.1 L136.0,748.2 L136.9,747.5 L137.8,748.2Z M146.2,751.5 L145.9,752.6 L144.6,752.6 L143.9,752.2 L143.6,750.9 L144.8,750.4 L145.5,750.9Z M131.8,747.6 L132.0,748.5 L130.8,748.9 L129.3,748.3 L129.9,747.2 L130.6,746.1 L131.7,746.1Z M116.4,742.0 L114.5,743.4 L112.5,742.0 L114.5,740.5Z M113.2,747.4 L112.7,748.0 L111.8,748.1 L111.4,747.4 L111.7,746.3 L113.0,746.8Z M94.1,756.1 L93.1,757.8 L91.8,757.5 L90.9,757.1 L91.2,755.4 L91.9,754.7 L93.8,754.8Z M142.8,748.1 L142.1,749.1 L140.8,749.8 L140.4,748.8 L139.9,747.4 L140.7,746.9 L142.2,746.3Z M149.3,748.9 L148.7,749.8 L146.5,749.8 L146.7,747.8 L148.7,747.7Z M87.1,755.6 L85.8,757.1 L84.8,756.9 L84.2,756.4 L83.4,754.7 L84.8,753.7 L85.9,754.4Z M112.6,748.7 L111.6,749.5 L110.6,748.7 L111.6,747.1Z M94.1,750.1 L93.5,751.4 L91.5,751.3 L90.6,751.1 L90.6,749.0 L91.4,748.2 L92.8,749.3Z M92.8,753.9 L91.8,755.7 L90.2,755.8 L89.5,753.9 L90.1,752.9 L91.9,751.8Z M112.0,755.8 L109.9,757.0 L108.4,755.8 L109.9,754.8Z M114.9,748.8 L113.2,750.3 L112.3,748.8 L113.2,747.6Z M109.8,741.6 L109.0,742.6 L107.5,742.6 L107.3,741.6 L107.6,740.8 L108.8,740.7Z M108.7,746.5 L108.9,747.7 L107.6,747.4 L106.5,746.9 L107.2,746.1 L107.6,745.7 L109.1,745.7Z M123.5,745.2 L122.7,746.9 L121.2,746.0 L121.1,744.4 L122.7,743.7Z M98.0,755.0 L97.1,755.5 L96.4,755.8 L96.0,755.0 L96.2,753.9 L97.3,754.1Z M97.8,740.9 L97.0,742.4 L95.1,742.0 L94.6,740.9 L95.2,739.1 L96.7,739.7Z M142.8,753.1 L141.9,754.0 L139.8,754.2 L139.8,752.1 L142.0,751.4Z M148.2,747.1 L146.1,748.5 L144.9,747.1 L146.1,745.3Z M109.0,746.6 L107.0,748.5 L105.4,746.6 L107.0,745.3Z M105.1,753.4 L104.8,755.3 L103.0,754.9 L102.2,753.8 L101.5,752.7 L103.2,752.3 L104.6,751.5Z M102.7,752.4 L102.1,754.4 L100.4,753.1 L99.9,751.4 L102.0,750.8Z M94.7,742.4 L93.7,743.6 L91.8,743.3 L92.1,741.6 L93.5,741.5Z M107.5,751.0 L107.2,751.8 L105.8,752.3 L105.0,751.5 L105.0,750.4 L105.8,749.6 L107.2,750.0Z M110.5,749.1 L108.9,750.5 L107.0,749.7 L106.9,748.6 L108.9,748.1Z M143.4,746.4 L142.9,747.7 L141.9,747.6 L141.0,746.8 L141.4,745.6 L142.0,745.2 L143.2,745.8Z M146.8,742.7 L146.2,744.0 L145.0,744.2 L144.0,743.1 L144.3,742.2 L145.2,741.2 L145.9,741.7Z M102.8,741.9 L101.5,742.9 L100.1,743.1 L98.9,741.9 L100.3,740.2 L101.8,740.7Z M134.8,749.0 L134.8,750.5 L133.6,750.3 L132.3,749.5 L132.8,748.2 L133.5,747.7 L134.4,747.7Z M91.9,747.9 L91.0,748.9 L89.9,749.1 L89.1,747.9 L90.1,747.3 L91.1,747.4Z M86.4,744.6 L84.2,745.6 L82.1,744.6 L84.2,743.3Z M113.7,754.1 L112.9,755.4 L112.0,754.7 L111.7,753.6 L112.9,753.1Z M134.8,747.0 L134.6,747.6 L133.4,748.1 L132.9,747.3 L132.4,746.5 L133.4,746.3 L134.6,745.8Z M129.3,743.6 L128.4,745.2 L127.0,743.6 L128.4,742.2Z M142.1,751.7 L141.0,752.9 L139.5,751.7 L141.0,750.6Z M143.8,754.0 L142.7,754.8 L142.0,755.2 L141.0,754.7 L140.6,753.3 L141.9,753.2 L142.9,752.8Z M114.3,755.8 L112.4,757.5 L111.3,755.8 L112.4,754.8Z M99.4,742.3 L97.5,743.6 L95.0,742.9 L95.6,741.6 L97.5,740.7Z M146.4,749.3 L145.5,750.6 L144.0,751.2 L143.1,749.8 L142.7,748.4 L144.0,747.4 L145.4,748.1Z M146.3,756.7 L145.1,757.7 L143.4,756.7 L145.1,755.4Z M98.1,740.5 L96.8,741.6 L94.8,740.5 L96.8,738.9Z M124.3,747.6 L124.2,749.1 L123.1,748.6 L122.6,747.6 L123.0,746.6 L124.4,746.2Z M113.2,746.7 L111.9,748.8 L110.1,748.3 L109.2,746.7 L109.9,745.7 L111.6,744.9Z M125.4,754.8 L124.9,755.9 L124.2,756.5 L123.1,755.3 L122.9,754.5 L124.1,753.5 L124.8,753.9Z M142.1,741.4 L141.2,742.5 L140.3,741.9 L140.2,740.7 L141.3,740.2Z M129.0,743.7 L128.7,744.3 L127.5,744.2 L127.9,743.1 L128.8,742.7Z M118.2,756.0 L117.6,757.6 L116.6,757.1 L116.2,756.0 L116.5,755.4 L117.7,755.0Z M92.3,757.0 L92.3,757.5 L91.2,757.6 L90.7,757.0 L90.9,756.2 L92.3,756.4Z M112.6,748.9 L111.9,749.7 L111.2,749.6 L110.8,749.3 L110.8,748.5 L111.3,747.7 L112.2,748.3Z M135.0,741.8 L134.5,743.0 L133.4,743.0 L132.7,742.4 L132.7,741.2 L133.5,740.6 L134.6,740.8Z M91.2,742.6 L91.1,743.3 L90.2,743.5 L89.7,742.6 L89.8,741.4 L91.0,741.8Z M97.6,742.7 L95.9,743.9 L93.9,742.7 L95.9,740.4Z M129.2,744.9 L128.6,745.9 L127.1,746.2 L125.6,744.9 L126.9,743.3 L129.0,743.6Z M95.8,755.2 L95.1,755.9 L94.0,756.4 L93.3,755.2 L94.2,754.6 L95.3,754.2Z M95.9,753.5 L95.6,754.4 L94.5,755.3 L93.5,754.2 L93.4,752.5 L94.3,752.1 L96.0,752.7Z M111.2,752.1 L111.0,753.3 L109.6,752.9 L108.5,752.7 L109.3,751.8 L109.8,751.2 L110.9,750.9Z M130.3,745.6 L129.9,746.3 L128.7,746.3 L128.6,745.1 L129.8,744.4Z M94.4,747.8 L93.3,748.9 L91.9,748.5 L92.0,747.1 L93.6,747.2Z M112.8,742.6 L112.1,743.4 L111.0,743.7 L110.2,742.6 L110.8,741.9 L111.8,741.2Z M146.8,756.0 L145.9,758.2 L144.0,756.7 L143.9,755.2 L145.8,754.0Z M141.0,756.1 L141.1,757.1 L139.4,757.8 L138.9,756.6 L138.7,755.2 L139.3,755.1 L140.5,754.3Z M134.3,743.0 L133.5,744.0 L132.3,743.0 L133.5,742.3Z M100.2,751.0 L99.9,752.8 L98.1,752.3 L96.9,751.0 L98.5,750.0 L99.8,749.3Z M108.3,742.4 L108.1,742.9 L107.2,743.8 L106.0,742.7 L106.7,742.0 L107.2,741.7 L108.3,741.8Z M120.7,742.5 L119.7,743.6 L118.7,744.1 L118.1,742.5 L118.4,741.4 L119.9,741.0Z M127.7,747.4 L126.8,748.0 L125.7,748.2 L125.3,747.4 L125.7,746.7 L127.0,746.2Z M93.4,744.5 L92.5,745.6 L91.5,745.4 L91.2,744.2 L92.7,743.1Z M94.2,744.7 L93.7,745.5 L91.9,746.5 L91.6,744.7 L91.9,743.7 L93.8,742.9Z M121.1,743.4 L120.9,744.4 L120.0,744.4 L119.2,743.7 L119.8,742.9 L120.0,742.3 L121.0,742.9Z M143.0,750.5 L141.8,751.6 L140.7,750.5 L141.8,749.1Z M140.9,744.3 L139.7,745.1 L139.0,744.3 L139.7,743.1Z" fill="#5c4f4b" stroke="#000" stroke-width="1" shape-rendering="crispEdges"/>
<path d="M204.0,672.0 L212.0,667.0 L222.0,667.0 L228.0,675.0 L229.0,690.0 L225.0,700.0 L214.0,706.0 L205.0,708.0 L200.0,700.0 L203.0,688.0Z" fill="#014363"/>
<path d="M212.6,704.6 L210.5,705.7 L209.0,705.5 L208.9,703.4 L210.6,702.7Z M205.1,682.1 L204.5,683.0 L203.8,682.9 L203.3,682.3 L202.9,681.5 L203.9,681.1 L204.4,681.2Z M206.5,706.4 L205.7,707.6 L204.0,707.3 L203.1,706.4 L204.1,705.6 L205.7,704.9Z M205.0,703.6 L204.6,704.4 L203.9,704.0 L203.6,703.6 L203.7,703.1 L204.5,703.0Z M219.8,676.3 L219.7,677.4 L218.6,677.3 L217.8,676.3 L218.4,675.4 L219.5,675.0Z M206.5,691.4 L205.8,692.0 L204.9,691.7 L204.7,690.8 L205.9,690.6Z M205.3,701.7 L204.4,703.2 L202.5,702.9 L202.2,700.2 L204.1,699.4Z M214.9,702.6 L214.5,704.2 L213.3,703.6 L213.4,701.9 L214.5,701.1Z M215.9,701.8 L216.2,702.7 L215.0,702.7 L213.9,702.4 L214.5,701.3 L214.8,700.4 L215.6,701.2Z M214.4,698.8 L213.7,700.2 L212.4,699.6 L212.3,698.2 L213.7,698.2Z M212.4,698.5 L211.6,700.0 L210.8,698.5 L211.6,697.1Z M210.2,682.3 L209.9,682.7 L209.3,683.0 L208.5,682.3 L209.2,681.7 L209.9,681.7Z M209.7,673.3 L208.6,674.4 L207.4,674.2 L206.5,672.3 L208.6,671.8Z M217.6,675.0 L216.4,676.7 L215.2,677.0 L214.0,676.1 L213.6,674.4 L215.2,673.4 L216.6,673.5Z M223.4,685.9 L222.6,687.3 L221.5,685.9 L222.6,684.8Z M205.4,678.8 L205.0,679.9 L203.6,679.7 L202.8,678.8 L203.6,677.7 L205.0,677.8Z M225.2,670.8 L224.6,672.3 L223.5,672.4 L222.9,671.6 L222.8,669.8 L223.6,668.7 L224.7,668.9Z M210.5,672.9 L210.1,673.6 L209.1,673.5 L208.8,672.9 L209.2,672.1 L210.0,672.0Z M216.8,695.0 L216.3,696.4 L215.2,696.0 L214.4,695.0 L215.1,693.5 L216.5,694.1Z M212.9,706.2 L212.1,707.5 L211.1,706.2 L212.1,704.8Z M224.9,696.8 L222.8,698.5 L221.4,696.8 L222.8,695.4Z M214.3,672.0 L212.6,673.9 L210.5,672.0 L212.6,669.9Z M215.0,700.7 L214.6,701.6 L213.6,701.1 L213.2,700.7 L213.8,699.9 L214.6,699.9Z M206.4,695.1 L205.8,696.1 L204.9,696.5 L204.4,695.4 L204.2,694.6 L204.9,694.1 L205.5,694.3Z M215.0,674.1 L214.1,675.7 L212.6,674.1 L214.1,672.5Z M212.2,676.6 L211.2,677.8 L209.8,676.6 L211.2,675.6Z M202.8,698.0 L202.6,698.7 L201.9,699.0 L201.4,698.4 L201.5,697.7 L202.0,697.3 L202.5,697.2Z M221.9,676.6 L221.5,677.9 L220.3,677.0 L220.4,676.2 L221.5,675.9Z M208.0,679.1 L207.7,679.9 L206.7,680.0 L205.6,679.1 L206.5,678.6 L207.7,678.0Z M226.2,698.2 L225.1,700.1 L223.5,698.2 L225.1,696.1Z M210.0,705.0 L209.8,705.9 L209.2,705.9 L208.4,705.4 L208.2,704.7 L209.1,703.7 L209.9,704.4Z M225.1,684.6 L223.4,685.5 L221.8,685.2 L221.7,684.0 L223.7,683.8Z M220.7,702.1 L220.4,703.4 L219.3,702.7 L219.2,701.1 L220.3,700.9Z M206.7,690.5 L205.8,691.2 L205.0,690.5 L205.8,689.5Z M214.5,689.0 L213.9,690.0 L213.2,689.5 L213.2,688.6 L214.1,688.3Z M218.5,686.9 L217.4,688.9 L216.3,688.0 L216.3,686.0 L217.4,685.5Z M224.4,686.8 L223.2,687.9 L221.4,688.0 L221.9,686.1 L223.4,685.5Z M215.8,667.1 L215.1,667.7 L214.3,668.0 L213.4,667.4 L213.7,666.8 L214.2,666.4 L215.3,666.6Z M226.8,694.0 L225.9,694.6 L225.0,694.4 L224.9,693.5 L226.0,692.7Z M218.6,674.4 L218.2,674.9 L217.5,675.1 L217.1,674.7 L216.5,673.8 L217.5,672.9 L218.1,673.5Z M205.2,686.7 L204.7,687.2 L204.1,687.3 L203.9,686.9 L203.4,686.4 L204.2,685.6 L204.7,685.9Z M215.8,687.6 L215.0,688.5 L214.4,688.6 L213.9,688.0 L213.6,687.0 L214.2,686.8 L215.3,686.8Z M222.2,691.7 L221.5,692.9 L220.5,692.5 L220.1,691.7 L220.0,690.6 L221.6,691.0Z M227.2,694.7 L226.9,695.6 L226.3,695.7 L225.9,695.0 L225.8,694.1 L226.1,693.9 L227.0,693.7Z M207.0,692.8 L205.6,695.0 L204.2,692.8 L205.6,690.7Z M213.9,693.8 L213.4,695.4 L211.2,695.1 L211.2,693.8 L211.9,691.8 L213.2,692.5Z M212.8,680.5 L211.9,682.5 L210.2,681.4 L210.4,679.9 L211.8,679.4Z M208.7,697.4 L208.3,698.4 L207.5,697.7 L207.6,696.9 L208.4,696.9Z M227.4,689.8 L225.7,691.1 L224.3,689.8 L225.7,688.5Z M210.1,687.4 L209.6,688.9 L208.1,688.1 L208.1,687.4 L208.2,686.0 L209.5,685.9Z M212.4,700.6 L210.7,702.1 L208.1,701.5 L209.0,699.8 L210.6,699.2Z M224.4,675.7 L223.2,677.1 L221.6,675.7 L223.2,674.8Z M213.3,700.6 L211.7,702.1 L209.8,702.7 L209.0,700.6 L209.7,699.7 L212.0,699.6Z M215.2,686.8 L214.5,687.8 L214.0,686.8 L214.5,685.9Z M223.1,695.0 L222.1,696.7 L221.4,695.0 L222.1,693.4Z M212.3,696.4 L211.4,697.4 L209.8,697.0 L209.9,695.6 L211.4,695.7Z M218.0,671.4 L216.0,672.8 L213.6,672.4 L214.5,670.6 L216.2,669.4Z M219.2,670.9 L218.4,671.8 L217.5,671.6 L217.3,670.4 L218.4,670.4Z M219.0,672.1 L218.6,673.4 L217.9,672.8 L217.3,671.5 L218.6,671.0Z M206.8,693.7 L205.7,695.0 L204.7,693.7 L205.7,692.8Z M217.1,687.5 L216.8,688.5 L216.0,688.1 L215.5,687.5 L216.1,686.8 L217.0,686.7Z M210.8,682.0 L209.7,682.8 L208.1,682.7 L207.6,681.0 L209.5,681.2Z M216.9,683.1 L215.9,683.7 L214.6,684.1 L214.0,683.1 L214.4,682.2 L216.0,682.1Z M211.8,697.2 L211.3,697.9 L210.3,697.2 L211.3,696.8Z M218.2,698.1 L217.6,698.9 L216.5,699.0 L215.9,698.1 L216.4,697.5 L217.2,697.0Z M223.7,690.1 L222.9,691.2 L222.1,690.5 L221.9,689.4 L222.9,689.1Z M213.3,696.5 L212.3,697.1 L211.0,697.2 L210.2,696.5 L210.7,695.4 L212.4,695.5Z M215.2,701.6 L214.9,702.2 L213.6,702.3 L214.0,701.1 L214.9,700.9Z M222.0,697.5 L221.7,698.4 L220.9,699.2 L219.8,697.9 L220.4,696.9 L220.8,696.5 L222.2,696.6Z M206.6,700.0 L205.4,701.1 L204.5,700.9 L204.5,699.1 L205.3,698.9Z M209.6,695.1 L207.8,696.5 L205.7,695.9 L206.5,694.2 L207.8,694.2Z M216.3,686.3 L216.0,686.9 L215.1,687.1 L214.9,685.8 L215.9,685.5Z M223.0,684.8 L222.5,685.6 L221.2,686.1 L220.0,684.8 L221.0,683.5 L222.1,683.9Z M215.2,668.4 L213.8,670.6 L212.4,668.4 L213.8,666.9Z M223.3,700.7 L222.0,702.0 L220.6,700.7 L222.0,699.6Z M227.6,680.4 L227.0,681.3 L225.6,682.2 L224.6,680.4 L225.2,678.4 L227.0,679.5Z M220.9,689.5 L220.3,691.4 L219.0,691.2 L217.9,690.6 L217.8,688.8 L218.9,687.8 L220.2,688.5Z M220.9,700.3 L219.9,701.8 L218.7,701.6 L217.8,701.0 L217.8,699.5 L218.8,698.9 L220.2,698.7Z M223.3,684.7 L223.0,685.6 L222.1,685.0 L222.0,684.3 L223.0,683.9Z M214.4,706.1 L213.7,707.2 L212.0,707.9 L211.4,706.1 L211.7,704.8 L213.8,705.2Z M207.7,705.9 L206.7,708.1 L204.4,707.8 L204.4,705.9 L204.4,705.0 L206.4,703.9Z M217.5,698.1 L217.4,698.7 L216.6,698.8 L215.8,698.5 L216.1,697.8 L216.6,697.3 L217.3,697.4Z M224.3,672.0 L223.3,673.3 L222.2,672.5 L222.0,671.5 L223.3,671.0Z M205.7,706.8 L205.0,707.8 L204.1,707.8 L203.5,706.8 L204.0,706.1 L204.8,706.2Z M207.7,686.0 L207.2,687.2 L206.0,686.7 L205.9,685.5 L207.2,685.4Z M206.8,684.9 L205.8,685.7 L203.9,685.6 L203.3,684.9 L204.0,683.1 L205.5,683.1Z M226.7,693.2 L226.2,694.1 L225.0,693.2 L226.2,692.5Z M216.2,697.7 L215.9,698.3 L215.2,698.6 L214.5,697.7 L215.2,697.2 L215.8,697.3Z M215.3,686.3 L214.3,687.3 L213.3,687.2 L213.0,687.0 L213.0,685.7 L213.3,684.9 L214.1,685.4Z M223.3,694.8 L222.8,695.6 L221.6,695.7 L220.8,695.5 L221.1,694.3 L221.6,693.3 L222.8,694.1Z M212.7,706.6 L212.2,708.1 L210.7,708.1 L210.3,707.4 L209.9,705.9 L210.7,705.6 L211.6,705.2Z M215.0,702.2 L213.3,703.5 L211.7,702.2 L213.3,700.4Z M226.7,680.0 L226.1,681.2 L224.8,680.7 L224.7,679.7 L226.0,679.2Z M202.6,699.7 L201.5,701.2 L199.6,700.6 L198.6,699.7 L199.3,697.7 L201.1,698.1Z M217.8,702.8 L217.0,704.2 L215.7,704.7 L215.2,703.3 L214.5,701.8 L215.7,701.5 L216.8,701.1Z M223.0,678.3 L222.6,679.2 L221.9,678.9 L221.4,678.3 L221.9,677.4 L222.9,677.8Z M204.2,698.7 L203.1,699.8 L201.7,699.3 L201.9,698.3 L203.0,697.8Z M225.2,686.6 L224.5,687.9 L223.6,687.5 L223.7,685.9 L224.8,685.3Z M214.4,704.7 L213.5,705.8 L212.4,705.3 L212.6,704.0 L213.7,703.8Z M206.7,686.1 L205.9,686.8 L204.8,686.1 L205.9,685.3Z M219.1,679.8 L217.6,681.3 L216.3,681.0 L214.9,679.8 L216.3,678.6 L217.6,678.5Z M208.2,674.0 L208.0,674.9 L207.2,674.8 L206.6,674.0 L207.2,673.6 L208.0,673.3Z M220.4,678.1 L218.6,679.5 L217.1,678.1 L218.6,676.0Z M219.1,700.8 L218.9,701.7 L218.1,701.9 L217.9,700.8 L217.9,700.1 L219.1,699.9Z M207.7,688.3 L206.5,689.2 L205.2,688.3 L206.5,687.2Z M212.3,698.8 L211.1,700.0 L209.4,698.8 L211.1,697.8Z M214.4,700.2 L213.5,700.8 L212.5,701.4 L212.1,700.2 L212.6,698.9 L213.9,699.1Z M227.3,683.7 L227.1,684.5 L226.5,684.7 L226.3,684.0 L226.1,683.4 L226.5,683.0 L227.3,683.1Z M226.8,695.1 L226.2,696.5 L225.5,696.1 L224.1,695.8 L224.5,694.6 L225.3,693.9 L226.8,693.8Z M212.8,677.6 L212.3,678.4 L212.0,678.0 L211.2,677.9 L211.3,677.3 L211.9,677.1 L212.5,676.9Z M209.0,697.6 L207.9,698.5 L206.9,699.3 L205.3,697.6 L206.6,696.2 L208.3,696.7Z M205.2,696.6 L204.2,698.1 L203.0,697.4 L201.7,697.5 L202.1,696.0 L203.1,695.1 L204.0,695.9Z M217.4,672.7 L217.3,673.9 L215.5,674.7 L215.0,673.1 L214.9,672.2 L215.7,671.3 L217.1,671.4Z M219.8,689.4 L218.9,689.9 L218.2,690.6 L217.9,689.9 L218.0,688.9 L218.3,688.7 L219.1,688.9Z M217.5,697.6 L215.6,699.0 L213.9,698.6 L213.7,696.2 L215.7,695.4Z M211.9,677.9 L210.8,679.1 L209.3,678.8 L207.8,677.9 L209.4,676.4 L211.0,676.9Z M223.4,694.4 L223.0,694.9 L222.2,695.4 L221.5,694.4 L222.3,693.6 L223.1,693.6Z M205.8,684.0 L205.0,685.4 L203.6,684.0 L205.0,682.4Z M209.3,675.6 L208.5,676.8 L206.9,677.3 L206.0,676.5 L206.1,674.9 L206.7,674.3 L207.9,674.5Z M221.2,698.6 L220.1,700.1 L219.3,698.6 L220.1,697.4Z M210.8,687.3 L209.8,688.9 L208.3,688.7 L206.9,688.0 L207.3,686.6 L208.5,686.0 L209.7,685.9Z M205.8,684.8 L205.7,685.9 L204.5,686.5 L203.6,685.4 L203.6,684.5 L204.4,683.8 L205.6,683.7Z M206.1,703.9 L205.4,704.8 L204.2,704.7 L203.5,703.9 L204.0,702.7 L205.5,702.2Z M215.6,703.4 L214.9,705.0 L212.9,704.5 L212.9,702.7 L215.0,701.9Z M211.4,688.5 L210.4,689.5 L209.6,688.5 L210.4,687.5Z M207.0,690.1 L206.7,691.1 L205.1,690.6 L205.2,689.5 L206.6,688.8Z M210.9,676.1 L209.3,676.8 L208.3,676.1 L209.3,675.0Z M210.7,672.3 L210.3,673.8 L209.2,672.9 L209.1,671.4 L210.2,670.6Z" fill="#000" shape-rendering="crispEdges"/>
<path d="M228.1,683.9 L226.8,685.1 L225.7,683.9 L226.8,683.2Z M212.7,668.7 L211.3,670.9 L209.3,668.7 L211.3,666.5Z M216.6,702.0 L216.0,702.7 L215.1,702.8 L215.0,702.0 L214.9,701.5 L215.8,701.3Z M205.9,698.6 L204.7,700.2 L203.2,699.0 L203.2,697.7 L204.6,697.4Z M211.4,677.2 L211.6,678.7 L210.1,678.4 L208.9,677.7 L209.4,676.4 L210.2,675.6 L211.2,676.1Z M226.4,697.6 L225.6,698.5 L224.7,698.4 L224.0,697.6 L224.9,696.6 L225.9,697.0Z M217.8,685.0 L217.4,686.2 L215.8,685.7 L214.7,685.0 L215.9,684.2 L217.4,683.9Z M208.2,671.1 L207.2,672.8 L205.6,671.1 L207.2,669.8Z M215.2,692.0 L214.4,692.6 L212.8,692.4 L213.3,691.5 L214.3,691.0Z M211.8,671.1 L211.4,672.2 L210.4,672.3 L209.3,671.7 L209.2,670.5 L210.4,670.4 L211.4,670.5Z M225.6,673.7 L224.4,675.1 L222.8,674.5 L223.1,672.8 L224.6,673.0Z M211.0,671.6 L210.2,672.4 L209.2,672.1 L208.9,671.1 L210.2,670.7Z M207.2,702.4 L206.3,703.8 L204.3,703.0 L204.9,701.5 L206.1,701.0Z M225.7,673.8 L225.1,674.7 L224.2,674.9 L223.6,673.8 L224.3,673.0 L225.1,672.5Z M221.6,668.5 L221.0,669.7 L220.1,669.6 L219.5,668.5 L219.9,667.8 L221.0,667.8Z M213.6,672.6 L213.8,673.4 L212.6,673.4 L211.8,673.2 L212.3,672.1 L212.6,671.6 L213.9,671.5Z M205.8,673.3 L204.2,674.4 L203.0,673.3 L204.2,671.2Z M215.4,694.5 L214.9,695.7 L213.5,695.7 L212.7,694.5 L213.9,693.7 L215.3,693.0Z M221.8,676.1 L221.0,677.1 L219.6,677.1 L218.8,676.1 L219.6,674.6 L220.8,674.7Z M219.0,680.4 L218.1,682.1 L217.0,680.4 L218.1,679.1Z M224.4,682.2 L223.6,683.5 L222.4,682.8 L222.4,682.2 L222.4,681.0 L223.7,681.5Z M218.9,688.2 L218.2,689.1 L217.5,689.1 L216.5,688.8 L216.8,687.9 L217.3,687.5 L218.0,687.0Z M211.0,698.6 L209.2,699.4 L207.7,698.6 L209.2,696.9Z M211.4,697.6 L211.1,699.1 L210.0,698.6 L209.6,697.6 L209.6,696.7 L211.2,696.9Z M220.9,700.1 L221.2,700.9 L220.1,700.8 L219.2,700.5 L219.8,699.7 L220.2,699.6 L220.7,699.3Z M223.1,674.7 L222.3,676.8 L220.6,676.5 L219.2,674.7 L220.4,672.5 L222.6,672.8Z M211.9,687.9 L211.0,688.9 L209.4,689.4 L208.2,687.9 L210.0,686.9 L211.6,686.1Z M219.8,690.3 L219.3,692.1 L217.7,692.2 L216.7,691.1 L216.3,689.6 L217.7,688.8 L219.5,689.6Z M218.0,687.6 L218.0,688.7 L216.2,689.1 L214.8,688.3 L215.0,687.1 L216.3,685.7 L217.1,686.2Z M221.2,672.2 L220.4,673.2 L219.1,672.6 L219.5,671.8 L220.2,671.1Z M212.0,681.9 L212.0,683.5 L210.8,683.5 L209.3,682.7 L209.4,681.5 L210.6,681.0 L212.4,680.6Z M220.3,676.1 L218.6,677.2 L217.0,677.0 L216.9,675.3 L218.6,674.3Z M205.2,688.7 L204.6,689.8 L203.3,689.6 L202.7,688.0 L204.3,687.7Z M229.9,680.8 L228.8,681.8 L227.2,681.7 L227.0,680.2 L228.9,679.4Z M220.5,676.2 L220.0,677.4 L218.7,677.3 L218.5,675.3 L219.9,674.7Z M210.6,677.1 L209.7,677.8 L208.5,679.0 L208.1,677.5 L208.0,676.3 L208.6,676.1 L209.7,675.8Z M224.3,684.1 L224.1,684.8 L222.9,684.8 L221.7,684.8 L222.4,683.6 L222.9,682.6 L224.2,683.1Z M213.6,671.6 L212.5,673.1 L210.8,672.6 L209.9,672.3 L210.2,671.1 L210.7,670.5 L212.3,670.5Z M216.3,693.4 L215.5,695.4 L214.4,694.3 L212.8,693.4 L214.1,691.4 L215.5,692.2Z M219.8,682.9 L218.6,684.4 L216.6,683.4 L217.1,681.7 L218.8,681.9Z M213.1,679.6 L211.7,681.2 L209.8,679.6 L211.7,678.0Z M224.5,685.7 L223.9,686.8 L223.1,686.5 L222.6,685.7 L223.1,685.1 L224.0,684.5Z M229.1,682.7 L228.4,683.8 L227.2,684.3 L225.9,683.3 L226.2,682.2 L227.3,681.1 L228.1,681.2Z M229.1,689.6 L228.0,690.7 L227.1,690.7 L226.3,690.3 L226.0,688.9 L227.1,688.2 L228.0,688.4Z M216.6,683.9 L216.0,684.6 L214.9,684.6 L214.1,683.9 L214.8,682.9 L216.0,683.4Z M217.9,691.2 L217.5,691.9 L216.2,691.7 L216.1,690.5 L217.6,689.8Z M226.7,694.7 L225.7,695.8 L224.0,695.8 L223.6,693.7 L225.5,693.5Z M214.3,691.3 L212.1,693.4 L211.2,691.3 L212.1,690.2Z M206.2,674.2 L205.3,675.2 L204.0,675.3 L203.2,674.7 L202.7,673.6 L204.0,672.1 L205.4,673.0Z M214.3,680.7 L213.6,682.1 L212.6,681.5 L212.2,680.7 L212.2,679.6 L213.6,679.3Z M218.1,685.1 L216.7,686.4 L215.3,685.1 L216.7,684.0Z M211.5,671.6 L209.9,672.4 L208.9,673.1 L208.1,671.6 L208.4,670.8 L209.9,670.3Z M212.2,691.3 L210.3,692.6 L209.3,691.3 L210.3,689.9Z M205.9,674.1 L205.4,675.2 L204.4,675.0 L203.0,674.1 L204.1,672.9 L205.4,672.9Z M221.3,690.6 L220.5,692.2 L219.3,691.3 L218.8,690.0 L220.5,689.4Z M223.3,695.8 L223.1,697.4 L221.7,696.9 L221.3,695.8 L221.3,694.8 L223.2,694.8Z M215.2,694.1 L214.7,695.5 L212.8,695.1 L211.3,694.1 L212.9,692.8 L214.8,693.1Z M209.7,694.1 L209.5,694.9 L208.3,694.9 L207.4,695.0 L207.0,693.6 L208.4,692.7 L209.5,693.3Z M221.2,682.6 L219.5,684.0 L218.0,684.0 L217.0,681.3 L219.6,680.5Z M209.9,680.1 L209.1,681.2 L208.0,680.8 L207.6,680.1 L208.3,679.5 L209.2,679.1Z M211.9,673.5 L211.2,675.2 L209.5,674.2 L209.6,672.9 L210.9,672.4Z M228.5,680.3 L226.7,681.8 L225.0,680.3 L226.7,678.5Z M222.1,687.4 L221.5,688.6 L218.9,688.1 L220.0,686.7 L221.3,685.3Z M204.2,701.2 L203.3,702.5 L201.5,701.2 L203.3,699.6Z M209.9,701.0 L208.7,702.5 L207.6,701.0 L208.7,698.9Z M213.2,681.7 L211.9,682.5 L210.5,681.7 L211.9,680.9Z M205.7,703.2 L205.7,703.9 L204.8,703.9 L204.4,703.5 L204.2,702.7 L205.0,702.4 L205.8,702.4Z M223.3,673.7 L222.3,675.2 L221.4,673.7 L222.3,672.0Z M218.4,697.1 L217.3,697.9 L216.0,697.4 L215.8,696.6 L217.2,695.9Z M222.3,699.3 L222.3,700.5 L220.9,700.1 L220.1,699.6 L219.8,698.7 L220.9,698.1 L221.9,698.3Z M217.4,681.2 L216.6,681.8 L215.3,682.0 L215.5,680.5 L216.5,680.3Z" fill="#5c4f4b" stroke="#000" stroke-width="1" shape-rendering="crispEdges"/>
<path d="M182.0,718.0 L190.0,706.0 L200.0,700.0 L214.0,706.0 L206.0,718.0 L204.0,730.0 L210.0,737.0 L200.0,736.0 L188.0,725.0Z" fill="#014363"/>
<path d="M210.5,710.6 L209.3,711.4 L208.5,711.5 L207.7,711.1 L207.5,709.9 L208.4,708.9 L209.3,709.8Z M196.7,712.3 L195.2,714.2 L194.2,712.3 L195.2,710.7Z M214.0,707.1 L213.7,707.9 L212.8,707.9 L212.6,707.1 L212.5,706.4 L213.6,705.9Z M203.7,711.0 L203.1,712.0 L201.9,711.4 L202.2,710.5 L203.1,710.3Z M207.3,704.0 L205.8,705.2 L204.8,705.0 L204.7,703.3 L206.1,702.2Z M192.0,725.2 L190.8,726.4 L189.2,726.0 L188.4,725.2 L189.2,723.5 L190.7,723.4Z M198.5,702.7 L196.7,703.7 L195.4,702.7 L196.7,701.6Z M193.0,719.6 L192.4,721.0 L191.1,721.0 L190.3,719.6 L191.5,718.4 L192.3,718.8Z M197.5,715.5 L196.7,717.6 L195.4,716.2 L194.8,714.8 L196.7,713.6Z M202.8,708.7 L202.5,709.7 L201.6,709.9 L201.0,709.2 L200.5,708.2 L201.5,707.9 L202.2,707.7Z M206.9,712.0 L204.6,713.8 L203.6,712.0 L204.6,710.8Z M189.9,721.3 L188.5,722.6 L187.5,722.5 L186.1,722.0 L186.7,721.0 L187.2,719.3 L188.9,720.0Z M197.1,705.9 L194.8,707.6 L193.4,705.9 L194.8,704.2Z M190.2,719.8 L188.9,722.1 L187.0,719.8 L188.9,718.0Z M200.0,710.6 L199.6,711.4 L198.7,711.5 L198.3,710.1 L199.4,709.4Z M199.1,716.9 L198.1,718.3 L196.7,717.8 L195.4,717.2 L195.2,716.2 L196.7,715.9 L198.0,715.7Z M203.6,703.4 L203.3,704.8 L201.4,704.4 L202.0,702.8 L203.3,702.2Z M190.6,714.1 L190.8,715.5 L189.4,715.5 L188.2,714.9 L188.2,713.8 L189.3,713.0 L190.5,712.7Z M203.0,713.3 L202.4,714.1 L201.5,714.5 L200.7,713.9 L201.0,712.8 L201.5,712.1 L202.4,712.4Z M200.1,731.0 L199.7,731.8 L198.8,731.6 L198.0,731.6 L198.2,730.5 L198.8,729.9 L199.5,730.3Z M201.9,732.6 L201.7,733.3 L200.4,733.3 L200.8,732.1 L201.5,731.8Z M205.6,707.8 L204.3,709.1 L202.6,707.8 L204.3,705.4Z M202.6,730.0 L202.5,730.8 L201.5,730.9 L200.9,730.0 L201.6,729.1 L202.4,729.3Z M203.2,723.7 L203.0,724.9 L201.9,724.5 L200.5,723.7 L201.6,722.4 L202.9,722.1Z M205.1,728.9 L204.5,730.0 L203.7,730.5 L203.1,729.3 L203.4,728.3 L203.8,727.7 L204.8,727.9Z M209.9,711.3 L209.7,712.5 L208.4,712.2 L207.1,711.6 L207.2,710.7 L208.4,710.0 L209.4,709.9Z M195.0,726.0 L194.3,726.6 L193.7,727.1 L193.0,726.4 L192.9,725.4 L193.6,725.0 L194.6,725.0Z M187.1,713.1 L186.6,714.6 L184.8,714.9 L184.4,713.1 L185.4,711.3 L186.8,712.0Z M199.8,729.7 L198.4,731.1 L197.4,731.4 L196.9,730.4 L197.0,729.0 L197.6,727.8 L198.6,728.5Z M201.8,706.1 L200.7,707.5 L199.7,707.5 L199.4,706.1 L199.8,705.4 L201.2,704.8Z M205.0,727.8 L204.1,728.6 L202.6,728.2 L202.9,727.4 L203.9,726.7Z M196.0,715.8 L194.9,716.6 L193.2,715.8 L194.9,714.0Z M188.5,719.2 L188.5,719.9 L187.7,719.7 L187.1,719.6 L187.3,718.9 L187.7,718.1 L188.6,718.3Z M188.7,717.3 L187.8,718.2 L187.1,717.3 L187.8,716.1Z M194.2,709.3 L193.5,710.5 L192.8,710.4 L192.2,709.7 L191.6,708.8 L192.8,708.4 L193.7,708.6Z M201.0,713.6 L200.7,714.5 L200.1,714.7 L199.3,714.1 L199.5,713.1 L200.1,712.7 L200.6,713.0Z M187.5,721.8 L186.6,723.2 L185.2,724.0 L184.3,722.7 L184.1,720.9 L185.1,720.5 L186.7,720.6Z M194.7,720.3 L194.8,721.0 L193.4,721.2 L192.6,720.3 L193.4,719.2 L194.6,719.4Z M194.1,726.1 L193.2,727.6 L191.8,727.7 L191.1,726.1 L192.3,724.8 L193.3,724.9Z M206.7,734.6 L206.0,736.2 L204.7,736.7 L203.4,735.0 L203.8,733.8 L204.7,733.2 L206.0,733.6Z M195.1,713.1 L194.3,713.9 L192.5,714.1 L192.6,712.3 L194.1,711.8Z M205.0,724.6 L204.0,726.4 L202.5,724.6 L204.0,723.1Z M199.4,711.5 L199.2,712.0 L198.0,711.8 L198.4,711.0 L199.1,710.8Z M205.2,728.9 L204.1,729.3 L203.7,728.9 L204.1,727.8Z M203.0,726.8 L202.6,727.4 L201.4,727.1 L201.5,726.5 L202.6,725.7Z M204.5,729.1 L203.0,729.9 L201.7,729.1 L203.0,728.1Z M205.9,708.0 L204.7,708.9 L203.6,709.0 L202.3,708.4 L202.2,707.6 L203.5,706.1 L205.1,706.7Z M200.6,725.6 L200.0,727.5 L198.6,727.0 L197.8,725.6 L199.0,724.2 L200.6,724.8Z M206.0,702.7 L204.7,703.4 L203.6,702.7 L204.7,701.8Z M204.8,725.3 L203.9,726.1 L202.4,725.3 L203.9,723.7Z M206.4,723.4 L204.8,724.4 L202.7,724.4 L203.4,722.2 L205.1,721.3Z M209.7,712.1 L208.5,713.2 L206.7,713.0 L206.6,710.8 L208.8,711.0Z M206.5,708.7 L205.9,709.6 L205.0,709.3 L204.1,709.4 L204.6,708.3 L204.9,707.8 L205.9,707.9Z M196.7,707.3 L196.2,708.3 L194.5,708.4 L193.7,707.3 L194.4,705.8 L196.2,705.6Z M191.8,707.1 L190.7,708.4 L188.8,707.1 L190.7,705.4Z M192.8,719.9 L192.7,721.0 L191.5,720.4 L191.4,719.9 L191.8,718.8 L192.6,719.0Z M196.2,728.8 L195.6,729.3 L194.9,730.3 L194.5,729.2 L193.9,728.2 L194.9,727.5 L196.1,727.8Z M196.3,707.7 L195.2,709.2 L193.0,709.4 L193.0,707.7 L193.2,706.4 L195.2,705.9Z M197.7,704.8 L196.7,706.4 L195.7,705.6 L195.2,704.1 L196.8,703.3Z M196.5,712.5 L196.0,713.9 L194.5,713.4 L193.8,713.3 L193.8,712.1 L194.8,711.0 L195.4,711.6Z M198.3,706.3 L196.7,707.6 L195.6,706.3 L196.7,704.8Z M189.7,716.4 L188.6,717.5 L188.0,717.0 L187.4,716.8 L187.6,715.7 L187.9,715.7 L189.0,715.1Z M186.3,713.5 L185.7,714.4 L185.1,713.5 L185.7,712.6Z M202.3,724.1 L201.6,725.7 L199.7,726.3 L198.9,724.6 L198.6,723.7 L199.8,722.5 L201.5,723.2Z M202.4,721.9 L201.1,723.1 L200.2,723.5 L200.1,721.9 L200.3,720.7 L201.5,720.9Z M202.7,722.1 L201.8,723.5 L200.1,723.5 L199.1,722.1 L200.2,720.8 L201.6,721.5Z M186.5,721.6 L185.9,722.5 L184.7,721.6 L185.9,720.4Z M185.0,715.2 L184.0,716.2 L182.2,715.2 L184.0,714.1Z M202.9,719.6 L202.3,720.4 L201.3,720.9 L200.1,719.9 L200.9,719.1 L201.2,718.1 L202.4,718.8Z M191.4,719.3 L191.1,720.1 L190.4,720.2 L189.9,719.3 L190.3,718.8 L191.2,718.2Z M201.8,709.0 L200.8,710.6 L199.7,709.8 L199.3,708.0 L201.0,707.6Z M196.3,730.9 L196.1,732.8 L193.8,731.9 L194.1,730.0 L195.6,729.7Z M197.9,712.5 L197.7,712.9 L197.0,713.4 L196.3,712.8 L196.7,712.0 L197.0,711.6 L197.9,712.0Z M198.2,702.0 L198.2,703.2 L196.7,703.0 L196.0,702.7 L195.8,701.4 L196.9,701.3 L197.9,700.7Z M205.0,702.4 L202.6,703.7 L200.2,702.4 L202.6,700.8Z M206.7,710.6 L205.6,711.9 L204.3,711.5 L203.2,711.6 L203.4,710.0 L204.5,709.1 L205.4,709.5Z M197.1,710.5 L195.8,711.6 L194.5,711.9 L194.1,711.1 L194.1,709.8 L194.5,708.8 L196.3,709.3Z M200.7,721.1 L200.3,721.9 L199.6,722.2 L198.5,721.5 L198.6,720.6 L199.5,719.8 L200.5,720.5Z M210.3,712.5 L209.1,714.1 L207.9,712.5 L209.1,711.0Z M189.5,720.3 L187.5,722.3 L185.7,720.3 L187.5,717.9Z M207.7,707.2 L207.3,708.5 L206.0,708.0 L205.0,707.5 L204.8,706.6 L206.0,706.4 L207.2,706.1Z M187.4,716.4 L186.8,717.5 L185.6,716.4 L186.8,715.4Z M191.4,706.0 L191.0,706.7 L189.9,706.6 L189.3,706.0 L190.2,705.5 L191.0,705.6Z M186.9,718.5 L186.1,719.7 L184.9,720.6 L184.0,719.2 L183.8,718.1 L184.7,717.1 L185.7,717.1Z M196.0,729.5 L194.9,730.9 L193.6,730.3 L193.3,728.5 L194.7,728.6Z M211.0,710.6 L210.5,711.7 L209.6,710.9 L209.6,710.3 L210.6,709.8Z M197.9,702.7 L197.6,703.3 L196.9,703.2 L196.9,702.5 L197.4,702.2Z M189.8,717.0 L188.6,718.7 L187.0,718.0 L187.1,716.4 L188.5,715.3Z M189.8,713.1 L187.9,714.0 L185.7,714.4 L186.5,711.9 L187.9,711.8Z M199.0,733.0 L197.7,735.2 L195.4,733.0 L197.7,732.1Z M204.7,721.7 L204.1,723.1 L203.1,722.3 L203.3,721.3 L204.2,720.5Z M188.9,711.3 L188.2,712.0 L187.1,712.6 L185.6,711.3 L186.8,710.5 L188.3,709.6Z M191.5,717.3 L190.3,718.9 L188.0,717.8 L188.4,716.4 L190.1,715.6Z M189.4,717.9 L188.6,718.9 L188.1,717.9 L188.6,717.0Z M200.2,707.4 L199.8,708.1 L199.0,707.9 L198.5,707.8 L198.6,707.0 L199.0,707.0 L199.7,707.0Z M205.5,710.2 L204.3,711.4 L202.8,710.8 L202.2,709.4 L204.3,709.2Z M198.0,702.6 L197.9,703.5 L197.0,703.5 L196.7,703.0 L196.8,702.2 L197.1,701.9 L198.0,701.6Z M196.0,728.3 L194.2,730.0 L192.8,729.0 L192.3,727.6 L194.4,726.0Z M197.6,732.1 L196.6,734.1 L194.5,732.9 L194.7,731.0 L196.7,730.0Z M196.0,704.8 L195.6,705.8 L194.2,706.7 L193.1,705.5 L193.0,704.1 L194.1,702.7 L195.6,703.6Z" fill="#000" shape-rendering="crispEdges"/>
<path d="M208.6,705.1 L208.4,706.1 L207.7,706.2 L206.9,705.5 L206.5,704.5 L207.5,704.3 L208.2,704.1Z M201.4,721.9 L199.7,723.8 L198.3,721.9 L199.7,720.0Z M201.9,721.7 L201.3,722.8 L199.6,722.2 L199.1,720.5 L201.1,720.4Z M186.3,717.7 L184.6,718.8 L183.3,717.7 L184.6,716.2Z M190.3,712.5 L189.1,713.4 L187.2,713.8 L186.9,712.5 L186.9,711.6 L189.3,711.2Z M201.8,722.8 L201.4,724.0 L200.4,724.5 L199.6,723.5 L199.6,722.4 L200.3,721.6 L201.3,721.5Z M204.3,722.5 L204.1,723.3 L202.9,724.3 L202.3,722.9 L201.8,721.8 L202.8,720.7 L204.4,721.5Z M203.5,724.3 L203.7,725.0 L202.6,725.7 L202.2,724.8 L201.4,723.8 L202.5,723.2 L203.3,723.5Z M204.4,717.9 L203.4,719.3 L202.4,720.0 L201.8,718.5 L201.0,717.1 L202.6,716.3 L203.6,716.4Z M187.0,722.6 L186.7,723.7 L185.2,723.1 L185.1,722.0 L186.5,721.5Z M191.7,723.1 L191.0,724.2 L189.6,724.7 L189.1,723.6 L188.3,722.6 L189.7,721.9 L190.8,722.1Z M201.7,715.6 L200.2,717.5 L199.1,717.8 L197.4,716.4 L198.0,714.7 L199.1,714.3 L200.1,713.9Z M200.9,709.2 L200.9,710.2 L199.4,710.1 L198.5,710.0 L198.8,708.7 L199.6,708.5 L201.0,708.2Z M202.0,733.4 L202.0,734.5 L200.9,734.8 L199.4,734.0 L200.2,732.9 L200.6,732.2 L201.6,732.6Z M208.0,705.7 L207.9,706.9 L206.8,706.8 L205.7,705.7 L206.5,704.7 L207.8,704.5Z M204.9,717.1 L204.5,719.3 L202.1,718.5 L202.6,716.4 L204.5,716.0Z M198.7,728.0 L198.4,729.1 L197.3,729.0 L196.3,728.0 L197.1,726.9 L198.4,727.3Z M188.8,714.2 L187.5,715.0 L186.1,714.9 L186.4,713.5 L187.6,712.5Z M208.4,706.6 L207.7,708.2 L206.2,707.6 L204.8,706.6 L205.8,704.4 L207.7,705.7Z M190.9,714.3 L190.8,714.9 L189.6,715.7 L188.7,714.6 L188.5,713.7 L189.5,713.6 L190.7,713.8Z M207.1,719.8 L206.5,720.5 L204.8,721.6 L204.3,720.5 L203.4,719.0 L204.8,717.9 L206.4,718.9Z M207.8,715.9 L206.5,717.4 L204.8,716.6 L205.1,714.5 L206.8,714.4Z M194.8,709.8 L194.8,710.7 L193.6,711.2 L192.4,710.1 L192.5,709.4 L193.6,708.8 L194.3,708.7Z M201.7,722.6 L200.8,724.0 L199.1,723.3 L199.3,721.8 L200.6,721.4Z M192.7,708.4 L191.2,709.3 L190.2,708.4 L191.2,706.8Z M193.1,719.8 L192.4,721.0 L190.3,720.6 L191.2,718.7 L192.2,717.7Z M209.9,712.4 L209.3,713.8 L208.0,713.8 L207.1,712.4 L208.3,711.5 L209.9,710.7Z M204.1,719.4 L203.1,720.2 L202.0,721.5 L200.6,720.4 L200.9,719.0 L202.1,718.0 L203.6,718.2Z M204.4,726.5 L204.6,727.8 L203.0,728.4 L202.0,727.1 L201.5,725.9 L202.9,724.6 L204.3,725.6Z M203.2,713.4 L201.8,714.3 L200.0,714.0 L200.1,712.8 L202.0,712.3Z M195.6,712.6 L195.0,713.7 L193.8,713.3 L193.2,711.5 L195.2,711.4Z M196.9,724.9 L196.1,725.6 L195.3,725.6 L195.0,725.4 L194.4,724.4 L195.4,723.9 L196.0,723.9Z M185.7,718.6 L183.7,720.0 L182.1,718.6 L183.7,717.0Z M199.0,718.1 L198.4,719.1 L197.3,718.1 L198.4,716.9Z M193.8,724.3 L191.9,726.1 L189.8,725.6 L190.4,723.7 L192.1,723.2Z M193.4,706.7 L192.2,708.3 L190.2,707.5 L190.4,705.4 L191.9,705.1Z M207.3,736.5 L206.4,737.6 L204.5,737.4 L205.1,735.5 L206.3,735.3Z M192.3,720.0 L190.7,721.0 L188.7,720.7 L189.2,719.2 L190.6,718.3Z M189.2,712.9 L187.4,714.7 L185.6,713.6 L185.6,712.0 L187.5,711.4Z M186.9,717.6 L185.8,719.2 L184.6,718.7 L183.0,717.6 L184.4,716.3 L186.0,716.3Z M195.2,725.9 L194.0,728.2 L192.9,725.9 L194.0,724.5Z" fill="#5c4f4b" stroke="#000" stroke-width="1" shape-rendering="crispEdges"/>
<path d="M150.0,713.0 L158.0,712.0 L168.0,720.0 L182.0,735.0 L188.0,745.0 L176.0,757.0 L150.0,757.0Z" fill="#014363"/>
<path d="M162.2,721.4 L162.0,721.9 L161.2,721.9 L160.6,721.6 L160.5,721.2 L161.3,720.6 L162.0,720.6Z M169.0,751.2 L168.4,751.8 L167.7,751.6 L167.4,750.8 L168.4,750.3Z M165.3,748.3 L164.7,749.0 L163.7,749.1 L163.1,748.3 L164.0,747.2 L165.1,747.3Z M166.8,751.7 L166.1,753.1 L165.3,751.7 L166.1,750.6Z M155.1,722.1 L154.6,723.2 L152.5,722.8 L152.8,720.9 L154.5,720.8Z M155.7,726.3 L154.9,727.6 L153.6,727.0 L153.8,725.7 L154.9,724.9Z M177.5,736.1 L176.9,737.0 L176.0,737.8 L175.2,736.9 L174.8,735.2 L175.9,735.0 L177.3,734.6Z M167.1,747.3 L167.1,748.3 L166.1,748.0 L166.0,747.3 L166.3,746.4 L167.1,746.9Z M163.3,735.8 L162.1,737.9 L160.1,735.8 L162.1,734.3Z M155.8,718.7 L154.9,719.7 L153.7,719.9 L153.4,718.7 L153.6,717.2 L155.2,717.2Z M185.3,741.3 L184.1,742.6 L182.8,741.3 L184.1,740.6Z M162.7,726.5 L161.8,727.3 L160.4,727.4 L159.6,726.5 L160.5,725.7 L161.9,725.4Z M168.4,721.2 L167.5,722.3 L165.8,721.9 L165.4,720.8 L167.3,719.4Z M174.0,729.3 L173.5,731.0 L172.4,729.9 L172.0,728.7 L173.4,728.3Z M180.2,736.0 L179.5,737.2 L178.4,736.7 L178.3,735.1 L179.5,735.0Z M169.9,725.9 L169.8,727.1 L168.5,726.4 L168.6,725.3 L169.7,725.1Z M164.0,720.6 L162.6,722.5 L161.6,720.6 L162.6,719.3Z M165.7,733.6 L165.0,734.5 L163.8,734.4 L163.5,733.1 L164.9,732.0Z M166.3,725.3 L166.4,725.8 L165.4,725.7 L165.3,725.3 L165.6,724.4 L166.3,724.5Z M175.9,747.7 L175.0,749.0 L174.1,748.9 L173.4,747.7 L173.9,747.2 L175.3,747.2Z M152.7,753.6 L151.6,755.5 L150.2,754.9 L149.7,752.8 L151.6,752.5Z M157.2,723.6 L157.0,724.5 L155.6,724.5 L155.7,723.6 L155.8,722.9 L157.1,722.4Z M156.1,739.7 L155.7,740.7 L155.0,740.5 L154.7,739.9 L154.5,739.3 L155.0,738.7 L156.1,738.7Z M155.9,744.8 L155.6,745.9 L154.6,745.4 L154.4,744.2 L155.6,743.6Z M155.6,755.1 L153.9,756.1 L152.2,755.1 L153.9,753.7Z M173.7,750.7 L172.6,752.0 L170.4,751.6 L170.9,750.1 L172.6,748.7Z M152.6,735.4 L151.0,737.2 L149.7,736.4 L149.6,734.3 L151.2,734.3Z M174.0,727.6 L172.9,728.8 L172.1,728.6 L171.4,728.3 L170.8,727.2 L171.9,726.2 L173.0,726.9Z M170.6,736.4 L169.5,737.7 L168.1,737.4 L168.1,736.4 L168.4,735.7 L169.3,735.2Z M168.0,730.7 L166.1,731.6 L165.2,730.7 L166.1,729.5Z M160.8,735.9 L160.5,736.9 L159.9,736.6 L158.7,736.5 L159.2,735.3 L159.7,734.8 L160.9,734.8Z M159.6,737.1 L159.3,737.7 L158.6,737.8 L158.4,737.1 L158.6,736.3 L159.4,736.7Z M154.1,721.0 L153.2,722.3 L152.0,721.0 L153.2,719.3Z M157.1,728.5 L156.8,728.9 L156.2,729.1 L155.6,728.9 L155.8,728.3 L156.2,727.7 L156.6,727.7Z M182.5,738.1 L181.7,738.8 L180.6,738.9 L180.4,737.1 L181.7,736.7Z M166.6,741.1 L165.4,742.4 L164.6,741.1 L165.4,740.1Z M183.0,741.4 L182.0,742.1 L181.2,742.1 L180.1,742.0 L180.8,740.9 L181.4,739.9 L182.2,740.8Z M167.9,721.1 L167.7,722.0 L166.9,721.9 L166.2,721.1 L166.8,720.4 L167.6,720.5Z M183.8,742.5 L183.4,743.4 L182.7,743.6 L182.1,742.9 L181.8,742.1 L182.7,742.0 L183.4,742.0Z M166.8,730.1 L165.2,731.0 L163.1,730.1 L165.2,728.1Z M158.3,744.0 L158.0,745.2 L157.2,745.7 L155.8,744.8 L156.3,743.3 L157.1,742.4 L158.5,743.0Z M176.0,735.7 L175.2,736.7 L174.1,735.7 L175.2,734.7Z M159.9,726.4 L158.0,728.0 L156.7,726.4 L158.0,724.5Z M184.2,748.1 L183.0,749.2 L181.5,749.3 L181.3,748.1 L181.7,746.0 L183.2,746.9Z M171.6,726.0 L171.9,727.1 L170.8,727.4 L170.4,726.4 L170.0,725.7 L170.7,725.2 L171.8,725.4Z M175.7,738.5 L175.6,739.5 L174.6,739.8 L174.0,738.5 L174.7,737.8 L175.6,738.0Z M153.1,727.3 L151.3,728.8 L150.0,728.8 L149.7,727.3 L149.6,726.0 L151.8,725.6Z M175.8,726.9 L174.8,728.1 L174.0,728.1 L173.4,726.9 L173.7,725.9 L175.0,725.8Z M154.1,741.2 L153.7,742.5 L152.7,741.6 L152.2,740.7 L153.6,740.5Z M154.6,725.9 L154.3,727.3 L153.2,726.9 L152.5,725.9 L152.9,724.9 L154.7,724.3Z M166.2,726.5 L165.5,727.5 L163.8,727.8 L163.2,726.5 L164.1,725.3 L165.6,725.3Z M176.1,742.4 L175.8,744.0 L174.4,743.6 L172.9,742.4 L174.3,740.9 L175.8,740.9Z M167.1,740.0 L166.8,740.9 L165.7,740.4 L165.6,740.0 L165.8,739.0 L166.7,739.5Z M176.1,741.5 L174.5,742.8 L173.2,742.3 L172.5,740.6 L174.6,739.9Z M174.2,748.4 L174.2,750.4 L172.6,749.8 L171.3,748.4 L172.3,747.6 L174.0,746.8Z M168.1,753.5 L167.2,754.9 L166.1,753.5 L167.2,752.0Z M179.0,732.6 L177.8,733.2 L177.1,733.9 L176.8,732.6 L177.1,732.0 L178.3,731.4Z M154.8,743.4 L154.4,744.6 L153.4,744.2 L152.6,743.8 L152.7,743.0 L153.3,742.7 L154.2,742.5Z M178.6,743.3 L177.4,743.9 L176.4,744.4 L175.6,744.1 L175.3,742.8 L176.4,741.9 L177.3,742.0Z M178.9,746.6 L178.7,747.1 L178.1,747.0 L178.1,746.0 L178.8,746.2Z M173.8,744.7 L173.6,745.2 L172.6,745.2 L172.8,744.4 L173.7,743.9Z M163.3,716.4 L162.5,717.2 L161.0,717.3 L160.4,716.4 L161.1,715.6 L162.2,715.5Z M171.4,726.2 L170.4,727.2 L169.3,726.9 L168.8,725.3 L170.5,724.4Z M162.5,735.1 L161.1,736.3 L159.5,735.9 L159.4,734.5 L161.0,733.8Z M155.6,718.9 L154.5,720.0 L153.6,720.8 L152.5,718.9 L153.6,717.7 L155.1,717.1Z M166.6,744.5 L166.4,746.0 L165.4,746.0 L164.8,744.5 L165.1,743.9 L166.3,743.5Z M185.9,743.5 L185.5,744.5 L184.7,745.0 L184.3,744.1 L184.3,742.8 L184.6,742.0 L185.6,742.8Z M160.6,723.4 L159.3,724.7 L158.3,723.4 L159.3,721.2Z M180.9,737.5 L180.7,738.4 L179.5,738.7 L178.6,737.5 L179.4,736.2 L180.6,737.0Z M157.6,714.6 L156.7,715.7 L155.1,716.7 L154.3,715.2 L153.7,713.7 L155.1,712.7 L156.8,713.0Z M153.4,746.1 L152.3,747.4 L151.2,747.8 L150.8,746.1 L151.1,744.6 L152.8,744.9Z M158.5,721.6 L157.9,722.1 L156.8,722.1 L156.8,721.3 L157.7,720.8Z M166.6,756.8 L166.1,758.3 L164.5,758.2 L163.7,757.6 L163.2,756.3 L164.5,755.6 L166.0,755.4Z M165.8,741.5 L164.6,742.3 L163.6,743.0 L163.0,742.3 L162.6,741.1 L163.7,740.0 L164.6,740.3Z M171.9,755.2 L171.5,755.7 L170.7,756.1 L170.2,755.2 L170.7,754.4 L171.8,754.3Z M157.9,723.1 L156.8,724.2 L155.7,724.9 L155.2,723.6 L155.3,722.3 L155.8,722.1 L157.2,721.7Z M162.1,738.1 L160.8,739.8 L158.9,738.1 L160.8,736.7Z M161.3,744.6 L161.3,745.7 L159.9,746.1 L159.4,745.3 L159.0,744.0 L159.8,743.1 L161.3,743.7Z M162.9,723.7 L161.7,724.6 L160.1,724.3 L160.6,723.0 L161.5,722.4Z M163.3,740.2 L162.8,741.7 L161.4,741.2 L161.5,739.5 L162.9,739.3Z M184.6,743.1 L184.3,744.8 L182.8,745.4 L181.2,744.0 L182.0,742.3 L182.8,741.2 L184.4,742.2Z M165.0,746.6 L164.5,747.7 L163.4,747.5 L162.3,746.6 L163.4,745.8 L164.6,745.2Z M165.5,729.2 L163.9,729.9 L162.4,729.2 L163.9,727.7Z M175.6,732.1 L175.0,733.3 L173.4,733.0 L173.7,731.6 L174.9,730.7Z M169.2,742.4 L167.8,743.9 L165.2,743.2 L166.4,740.8 L168.0,741.2Z M155.9,754.7 L154.2,756.5 L153.1,754.7 L154.2,752.8Z M180.2,741.8 L179.7,742.5 L178.4,742.2 L178.6,741.2 L179.7,740.5Z M176.8,733.0 L175.4,734.4 L173.8,733.0 L175.4,731.3Z M183.2,742.8 L182.2,743.4 L181.3,743.7 L180.4,742.8 L181.0,742.1 L182.4,742.0Z M152.9,716.4 L152.2,717.4 L151.5,716.4 L152.2,715.3Z M166.1,740.9 L165.4,741.8 L163.4,741.9 L163.6,740.9 L163.4,739.4 L165.1,739.8Z M167.4,733.2 L165.2,734.5 L163.6,733.2 L165.2,731.6Z M162.4,721.0 L161.2,722.3 L159.6,721.0 L161.2,720.1Z M151.9,727.1 L151.4,728.0 L149.9,728.5 L149.6,727.1 L149.8,725.5 L151.2,725.6Z M154.1,729.5 L151.9,731.0 L150.0,729.5 L151.9,727.8Z M167.7,730.8 L166.7,732.7 L165.6,732.9 L164.4,730.8 L165.5,729.6 L166.8,728.8Z M168.0,732.6 L166.9,734.2 L164.9,732.6 L166.9,730.5Z M171.6,725.6 L171.3,727.4 L168.9,726.7 L169.8,724.8 L170.9,723.8Z M173.8,742.9 L173.8,743.8 L172.8,743.5 L172.2,743.1 L172.2,742.4 L172.8,741.8 L173.5,742.2Z M165.6,740.6 L165.4,741.2 L164.6,741.9 L163.6,741.2 L164.0,740.0 L164.5,739.1 L165.3,739.6Z M156.9,729.0 L156.2,730.8 L154.5,729.7 L154.7,728.3 L156.3,727.3Z M165.3,726.0 L164.5,726.6 L164.0,726.5 L163.8,726.0 L164.0,725.0 L164.7,725.3Z M153.9,753.1 L151.8,754.4 L149.6,753.1 L151.8,752.1Z M161.1,755.9 L160.1,757.1 L159.1,756.3 L159.2,755.1 L160.0,754.4Z M172.5,734.6 L171.6,735.8 L170.3,735.1 L170.8,734.0 L171.7,733.3Z M157.4,743.6 L156.7,744.5 L155.6,744.8 L154.9,743.9 L155.1,743.1 L155.6,742.8 L156.6,742.8Z M159.8,715.4 L158.5,716.4 L157.2,716.8 L156.9,715.4 L157.3,714.2 L158.8,714.5Z M166.9,725.5 L165.8,726.2 L165.0,726.5 L164.8,725.5 L164.7,725.0 L166.1,724.7Z M179.4,736.6 L178.8,738.5 L176.5,737.9 L176.5,735.6 L179.1,735.3Z M160.2,737.3 L158.4,738.7 L157.0,738.2 L157.1,735.9 L158.8,735.1Z M169.7,745.8 L169.0,746.7 L168.3,746.7 L167.4,745.8 L168.0,745.3 L169.0,745.3Z M154.2,725.1 L153.3,726.4 L152.1,727.2 L151.2,726.1 L151.3,724.7 L152.0,723.8 L153.1,723.2Z M153.4,714.0 L152.6,715.6 L151.4,715.9 L149.6,714.6 L149.7,713.2 L151.5,711.7 L152.9,713.3Z M155.4,724.7 L154.6,726.0 L153.6,724.7 L154.6,723.7Z M166.9,741.5 L166.4,742.3 L164.9,742.3 L165.5,740.9 L166.5,740.4Z M169.8,745.8 L169.8,747.3 L168.4,747.1 L167.2,746.3 L167.0,745.3 L168.5,744.0 L169.7,745.1Z M162.5,725.4 L162.3,725.9 L161.5,725.8 L161.5,724.8 L162.2,724.6Z M163.1,732.5 L162.4,733.0 L161.7,732.5 L162.4,731.7Z M176.3,752.5 L175.5,754.0 L174.1,753.4 L174.2,751.3 L175.3,751.6Z M184.9,744.1 L184.1,745.1 L183.3,744.8 L182.9,743.5 L184.1,743.3Z M156.7,728.8 L155.2,730.8 L152.7,728.8 L155.2,727.8Z M152.9,741.3 L152.3,742.5 L150.9,742.4 L150.6,742.0 L150.5,740.5 L151.2,739.4 L152.4,740.3Z M166.6,747.9 L165.5,748.9 L163.9,750.1 L162.8,748.5 L163.2,746.9 L164.2,746.9 L165.8,746.2Z M185.0,741.2 L184.5,742.2 L183.4,742.5 L182.7,741.2 L183.6,740.6 L184.4,740.4Z M179.4,733.1 L179.3,734.4 L178.2,733.7 L177.4,733.1 L178.0,732.3 L179.3,732.5Z M156.4,716.5 L155.1,718.0 L154.1,717.7 L153.5,717.5 L152.6,715.8 L154.2,714.1 L156.0,715.1Z M167.0,749.1 L165.9,750.4 L164.2,750.0 L164.7,748.3 L165.7,748.3Z M160.6,725.6 L160.2,727.3 L159.0,727.5 L157.8,725.6 L159.0,723.7 L160.2,723.7Z M172.3,730.4 L171.6,731.0 L171.1,731.4 L170.9,730.7 L170.8,730.0 L171.2,729.6 L171.9,730.0Z M159.6,748.1 L159.1,749.3 L157.8,748.8 L157.7,747.3 L159.2,747.4Z M161.9,728.6 L161.8,729.1 L160.8,729.9 L160.5,728.6 L160.5,727.6 L161.9,727.7Z M166.6,756.8 L165.5,758.3 L164.4,757.8 L163.7,757.6 L163.4,756.2 L164.5,755.7 L165.4,755.7Z M154.0,736.1 L152.7,737.2 L151.1,737.1 L151.3,735.0 L152.7,734.4Z M163.3,720.3 L163.1,721.4 L161.9,721.0 L161.4,720.3 L162.0,719.7 L163.0,719.4Z M167.4,743.7 L167.1,744.1 L166.6,744.2 L166.0,743.7 L166.6,743.1 L167.2,743.1Z M179.7,736.9 L178.9,738.3 L177.9,737.9 L176.5,736.9 L177.6,736.0 L179.1,736.0Z M159.3,740.9 L158.8,741.6 L158.1,741.7 L157.9,740.9 L157.9,740.1 L158.7,740.4Z M167.9,745.7 L165.5,747.9 L163.6,745.7 L165.5,743.9Z M173.9,739.1 L172.9,740.8 L171.5,739.8 L171.1,738.1 L172.8,737.3Z M173.2,748.3 L172.9,749.7 L171.7,749.1 L171.9,747.8 L172.8,747.2Z M161.2,719.3 L160.6,720.0 L159.8,720.0 L159.6,719.7 L158.9,718.8 L159.8,718.8 L160.6,718.6Z M166.7,739.2 L166.2,740.8 L164.9,740.1 L165.1,738.5 L166.1,738.3Z M170.9,727.7 L170.3,728.9 L168.9,728.4 L169.1,727.2 L170.4,727.1Z M155.9,716.6 L154.6,718.8 L152.2,717.5 L152.6,715.8 L154.4,714.7Z M174.3,750.1 L172.9,751.4 L171.1,751.2 L170.7,749.4 L172.6,749.0Z M178.9,735.0 L178.2,735.8 L176.3,736.3 L175.7,735.0 L176.6,734.3 L178.2,733.9Z M176.0,737.2 L175.3,738.0 L174.4,738.0 L174.0,736.6 L175.2,735.9Z M157.1,730.7 L156.3,731.7 L155.2,731.2 L155.4,730.4 L156.2,730.2Z M184.9,745.2 L184.7,746.3 L183.6,746.7 L182.2,745.7 L182.3,744.5 L183.6,743.1 L184.6,743.8Z M161.1,746.7 L160.5,747.6 L159.7,747.7 L158.9,747.3 L158.7,746.1 L159.6,744.8 L160.8,745.4Z M169.5,745.8 L168.9,747.1 L167.9,747.4 L167.6,746.5 L167.5,745.0 L168.0,744.4 L168.9,744.3Z M159.9,718.0 L158.9,719.4 L157.6,718.8 L156.7,718.0 L158.0,716.8 L159.0,716.8Z M151.9,745.8 L151.4,746.7 L150.2,746.8 L149.8,744.7 L151.5,745.0Z M168.9,747.6 L167.6,749.0 L166.1,747.6 L167.6,746.7Z M175.5,744.4 L174.9,745.4 L174.3,745.1 L173.6,744.4 L174.1,743.8 L174.9,743.5Z M165.3,735.9 L165.2,736.4 L164.7,736.5 L164.2,736.2 L164.4,735.5 L164.8,735.2 L165.4,735.3Z M168.0,746.9 L167.3,749.1 L165.0,748.1 L165.7,745.9 L167.3,745.1Z M174.1,742.2 L173.7,743.0 L172.6,743.1 L171.7,742.7 L171.4,741.6 L172.4,741.3 L173.6,741.2Z M168.2,741.1 L167.7,741.8 L166.7,741.8 L166.2,741.1 L167.0,740.2 L167.5,740.3Z M166.6,755.6 L165.7,756.6 L164.9,756.5 L164.2,755.6 L164.9,754.7 L165.7,754.8Z M171.0,746.2 L171.0,747.3 L169.8,747.5 L169.0,747.0 L169.1,745.8 L169.8,744.7 L170.6,745.5Z M177.8,749.3 L177.4,750.3 L176.5,750.4 L175.9,749.3 L176.3,748.8 L177.4,748.5Z M169.1,722.5 L168.5,723.5 L167.8,723.1 L167.7,722.1 L168.6,721.9Z M180.3,747.6 L179.0,748.8 L178.1,747.6 L179.0,746.4Z M167.2,729.8 L166.4,731.0 L165.8,729.8 L166.4,729.0Z M166.2,751.3 L165.5,752.4 L164.8,752.6 L163.3,751.7 L163.3,750.9 L164.6,750.5 L165.9,750.1Z M176.0,728.8 L175.1,729.6 L174.3,729.5 L174.2,728.3 L175.2,728.3Z M164.9,732.9 L164.3,733.8 L162.9,734.6 L161.8,733.4 L161.5,732.2 L163.1,730.7 L164.4,731.4Z M153.8,725.1 L153.6,726.4 L152.1,726.5 L151.8,725.1 L152.2,723.5 L153.8,723.8Z M179.1,746.7 L178.4,747.9 L176.8,747.7 L175.4,747.1 L175.5,746.0 L176.7,745.9 L177.7,745.5Z M180.4,744.1 L179.6,745.1 L178.5,745.2 L178.0,744.6 L177.9,743.4 L178.5,743.3 L179.9,743.5Z M178.9,731.5 L177.8,733.0 L176.4,732.1 L176.9,730.9 L177.9,730.4Z M168.9,721.5 L167.1,722.5 L165.3,721.5 L167.1,720.5Z M161.5,756.8 L161.1,758.3 L160.1,758.5 L158.8,757.3 L158.9,756.3 L160.2,755.3 L161.2,755.9Z M161.4,735.4 L160.6,736.0 L159.7,736.5 L159.0,735.4 L159.4,734.6 L160.6,734.6Z M164.5,737.7 L164.7,738.5 L163.5,738.9 L163.2,738.2 L163.0,737.4 L163.6,736.4 L164.2,737.2Z M163.3,738.1 L163.4,739.7 L162.2,739.4 L160.9,739.0 L160.9,737.2 L162.1,736.9 L163.7,736.7Z M156.5,744.6 L155.1,745.5 L153.5,744.6 L155.1,743.4Z M151.6,739.9 L151.3,740.4 L150.6,740.3 L150.6,739.4 L151.2,739.5Z M176.1,735.2 L174.8,736.1 L173.4,735.7 L173.2,734.4 L175.0,734.5Z M173.0,747.3 L172.1,748.5 L171.1,747.9 L170.9,746.9 L172.1,746.6Z M176.3,753.4 L176.1,755.1 L174.4,755.2 L173.5,753.9 L173.2,752.9 L174.5,752.4 L175.9,752.5Z M156.6,713.1 L155.8,714.9 L154.8,714.2 L153.8,714.0 L152.9,712.1 L154.8,712.2 L156.6,711.3Z M151.3,752.2 L150.3,753.2 L149.5,752.2 L150.3,751.7Z M165.6,732.1 L164.6,733.3 L163.0,732.9 L163.1,731.1 L164.3,730.6Z M170.7,742.8 L170.4,743.7 L169.8,743.4 L169.1,742.8 L169.8,742.0 L170.5,742.1Z" fill="#000" shape-rendering="crispEdges"/>
<path d="M163.2,749.8 L162.0,750.9 L161.3,751.1 L161.0,749.8 L161.4,748.7 L162.0,749.2Z M151.8,751.5 L150.3,752.3 L148.8,751.5 L150.3,749.9Z M170.1,725.3 L170.2,726.2 L169.1,726.8 L168.0,725.8 L168.5,724.6 L169.1,724.1 L170.1,724.0Z M154.2,722.2 L153.1,723.5 L151.3,723.3 L151.5,721.7 L152.9,721.4Z M164.0,729.8 L162.7,730.5 L161.4,730.9 L161.4,729.0 L162.4,729.0Z M164.0,747.7 L163.3,748.4 L162.2,748.8 L161.8,747.7 L162.2,746.8 L163.0,747.0Z M180.9,742.1 L179.5,744.0 L178.1,742.1 L179.5,740.7Z M161.2,738.1 L161.3,739.4 L160.2,738.9 L158.7,738.9 L158.7,737.5 L160.1,736.7 L161.2,736.9Z M157.2,743.6 L155.5,745.1 L154.6,743.6 L155.5,741.5Z M154.5,731.9 L152.9,733.4 L152.2,731.9 L152.9,730.2Z M176.7,747.2 L176.4,748.1 L174.7,748.8 L174.2,747.2 L175.1,745.7 L176.4,745.7Z M173.7,747.7 L172.1,749.5 L170.7,748.7 L169.6,748.8 L169.4,746.8 L170.9,746.2 L172.7,746.0Z M160.7,755.3 L159.9,756.9 L158.7,756.2 L158.5,754.3 L160.0,754.5Z M153.2,737.6 L152.6,738.6 L151.5,737.6 L152.6,737.0Z M178.6,731.4 L177.8,732.5 L176.2,732.7 L174.8,731.4 L176.0,730.1 L177.2,730.4Z M177.2,741.6 L177.0,743.1 L175.5,743.1 L173.7,741.6 L175.3,740.3 L177.1,739.4Z M175.3,732.7 L174.2,733.8 L173.3,733.4 L173.1,731.8 L174.1,731.9Z M182.8,744.9 L181.9,745.9 L180.9,745.7 L180.5,744.9 L181.1,744.0 L181.7,744.0Z M164.6,731.3 L164.1,732.8 L163.4,732.8 L162.8,731.3 L163.0,730.1 L164.4,730.3Z M166.2,730.8 L165.2,732.3 L163.9,732.4 L163.4,730.8 L163.8,729.9 L165.3,729.1Z M154.2,750.3 L153.8,751.0 L152.1,751.3 L151.2,750.7 L151.3,749.4 L152.0,748.4 L153.5,748.5Z M179.3,748.8 L177.7,750.4 L175.8,748.8 L177.7,746.9Z M151.7,735.5 L150.7,737.5 L149.0,735.5 L150.7,733.6Z M167.2,728.8 L165.6,729.5 L164.3,728.8 L165.6,727.2Z M157.6,720.1 L156.0,721.2 L153.7,720.1 L156.0,718.8Z M164.2,724.9 L163.6,726.5 L162.4,726.1 L162.4,724.1 L163.6,723.2Z M175.8,735.1 L175.0,736.2 L173.1,736.2 L172.1,735.1 L173.4,733.5 L175.4,733.4Z M178.7,735.2 L177.5,735.7 L176.2,735.7 L176.1,734.4 L177.5,733.7Z M173.3,738.8 L172.3,740.1 L171.4,738.8 L172.3,738.1Z M166.4,743.4 L165.2,745.6 L164.2,743.4 L165.2,742.4Z M160.2,719.6 L158.2,721.0 L156.9,719.6 L158.2,718.6Z M156.5,748.8 L156.1,749.5 L154.6,749.6 L154.1,748.8 L154.9,748.0 L155.8,747.9Z M176.6,750.4 L175.5,751.4 L173.3,751.4 L173.5,749.5 L175.4,749.0Z M170.0,730.5 L169.9,731.7 L168.6,731.0 L168.5,730.5 L168.7,729.3 L169.6,729.4Z M159.7,750.5 L158.5,751.4 L157.1,750.5 L158.5,748.7Z M175.6,732.1 L175.1,733.0 L173.7,732.9 L173.9,731.2 L175.2,730.5Z M152.2,733.7 L151.9,734.7 L150.8,734.5 L150.7,733.0 L151.9,732.1Z M163.4,745.4 L162.5,747.2 L160.3,745.4 L162.5,744.5Z M159.6,713.9 L158.2,715.1 L157.1,715.1 L156.4,713.9 L157.3,712.5 L158.2,712.3Z M153.1,734.8 L152.5,735.9 L151.5,735.4 L150.7,734.8 L151.4,733.8 L152.2,734.0Z M170.9,733.4 L170.8,734.4 L169.3,735.0 L168.7,733.9 L168.5,732.9 L169.3,732.4 L170.6,732.1Z M159.1,746.4 L158.6,748.0 L156.7,747.2 L156.5,745.7 L158.3,745.1Z M157.9,753.3 L155.7,754.4 L154.7,753.3 L155.7,752.2Z M160.0,750.5 L158.6,751.1 L157.4,750.5 L158.6,749.3Z M158.2,741.5 L157.3,742.4 L155.1,742.7 L155.1,740.9 L157.1,740.2Z M160.1,739.6 L158.7,740.6 L156.6,739.6 L158.7,738.3Z M161.8,747.9 L160.9,749.1 L159.7,748.6 L159.8,747.4 L160.9,746.5Z M169.5,723.9 L168.8,724.3 L168.0,724.9 L167.4,724.4 L167.3,723.5 L168.1,723.0 L168.7,723.2Z M151.8,745.8 L150.5,746.5 L149.3,745.8 L150.5,744.5Z M157.0,727.7 L155.7,728.8 L155.2,727.7 L155.7,726.4Z M157.5,756.8 L157.4,757.8 L155.7,757.8 L155.1,757.5 L154.8,756.2 L155.6,755.9 L156.7,756.0Z M154.4,755.9 L153.5,758.0 L151.9,756.8 L152.1,754.7 L153.6,754.1Z M165.5,733.3 L163.8,734.4 L162.6,733.3 L163.8,731.2Z M155.8,744.1 L154.4,746.2 L152.8,745.0 L152.6,743.0 L154.3,743.2Z M183.4,738.5 L181.9,739.7 L180.1,738.5 L181.9,736.1Z M188.4,744.0 L187.4,745.1 L185.8,744.8 L185.3,744.0 L186.0,742.7 L187.5,743.1Z M155.4,755.9 L153.8,757.3 L152.8,755.9 L153.8,753.6Z M174.4,749.9 L172.9,750.8 L171.5,749.9 L172.9,748.7Z M187.9,742.3 L186.6,743.5 L184.9,743.5 L184.7,741.3 L186.5,741.4Z M153.4,738.2 L152.2,738.7 L151.5,738.2 L152.2,737.4Z M186.3,746.4 L185.3,747.4 L184.1,748.3 L183.6,747.0 L182.6,745.6 L183.9,745.4 L185.2,744.6Z M154.9,722.0 L154.1,723.2 L153.2,722.0 L154.1,721.4Z M153.0,756.4 L151.6,758.1 L149.4,757.4 L149.8,755.5 L151.6,754.3Z M175.4,750.3 L174.1,751.3 L172.5,751.5 L172.4,749.8 L174.3,749.5Z M161.6,750.5 L161.3,751.4 L160.5,751.5 L160.2,751.0 L159.7,749.9 L160.6,749.9 L161.3,749.8Z M152.3,725.1 L151.0,726.0 L149.4,725.6 L149.5,724.3 L151.1,723.6Z M178.4,733.2 L177.6,734.4 L177.0,734.7 L176.4,733.8 L176.3,732.8 L176.9,732.6 L177.6,732.6Z M166.0,732.4 L165.1,733.5 L163.9,733.7 L163.8,732.4 L163.6,730.9 L165.4,731.1Z M155.8,729.3 L155.0,730.6 L154.3,729.3 L155.0,728.4Z M177.0,746.0 L176.4,747.7 L174.5,747.0 L175.1,745.0 L176.3,745.2Z M161.6,740.8 L160.8,741.7 L160.1,741.8 L159.7,741.3 L158.9,740.4 L160.2,740.0 L161.0,739.8Z M181.2,751.8 L180.5,752.4 L179.9,752.4 L179.5,752.1 L179.6,751.5 L179.9,750.9 L180.7,750.9Z M164.8,723.8 L163.3,726.0 L161.3,723.8 L163.3,722.2Z M179.5,740.7 L179.1,741.6 L177.7,741.9 L176.8,740.7 L177.2,738.6 L179.2,739.7Z M150.8,725.1 L150.4,726.6 L148.7,725.9 L148.8,724.2 L150.6,724.0Z M161.1,722.8 L160.4,723.7 L159.0,723.7 L158.8,721.9 L160.4,722.0Z M168.8,733.5 L169.1,734.3 L167.6,734.3 L166.6,733.8 L167.1,732.9 L167.6,731.7 L169.1,732.8Z M174.8,733.2 L173.9,733.9 L173.2,734.1 L172.5,733.7 L172.6,732.7 L173.0,732.1 L174.0,732.6Z M159.4,726.8 L158.6,727.9 L157.4,727.8 L157.3,725.9 L158.6,725.3Z M164.0,728.3 L163.8,729.0 L163.0,729.3 L162.0,728.7 L162.5,727.7 L163.0,727.7 L163.6,727.6Z M152.8,746.5 L152.3,747.4 L151.2,747.4 L150.2,747.0 L150.0,745.9 L151.2,745.2 L152.3,745.5Z M174.7,752.8 L172.4,753.8 L170.1,752.8 L172.4,751.8Z" fill="#5c4f4b" stroke="#000" stroke-width="1" shape-rendering="crispEdges"/>
<path d="M210.0,737.0 L222.0,740.0 L232.0,746.0 L238.0,757.0 L228.0,757.0 L220.0,748.0Z" fill="#014363"/>
<path d="M232.1,755.7 L231.0,757.2 L229.8,755.7 L231.0,754.3Z M223.7,745.8 L222.5,747.2 L220.8,747.0 L219.5,745.8 L220.7,744.5 L222.2,744.1Z M223.6,743.5 L223.6,743.9 L222.7,744.5 L222.5,743.8 L221.9,743.2 L222.7,742.6 L223.6,743.1Z M229.7,748.8 L228.4,749.5 L227.2,748.8 L228.4,747.2Z M215.1,739.5 L214.8,740.4 L213.7,740.7 L213.1,739.9 L213.2,739.2 L213.8,738.6 L214.5,738.5Z M221.9,745.9 L221.7,746.5 L221.0,746.9 L220.5,746.5 L220.5,745.6 L221.0,744.7 L221.8,745.5Z M227.0,748.6 L226.8,749.8 L226.0,749.3 L225.2,749.2 L225.0,748.1 L226.0,747.0 L227.2,747.4Z M232.7,751.7 L232.8,752.3 L231.8,752.9 L231.1,752.2 L231.3,751.4 L231.8,750.5 L232.8,750.8Z M214.0,739.9 L213.7,741.0 L212.2,740.5 L211.9,739.4 L213.4,738.0Z M235.0,753.0 L234.6,754.0 L232.9,754.0 L232.3,753.0 L232.8,751.4 L234.4,752.2Z M235.2,756.7 L234.3,757.5 L233.3,757.8 L232.5,756.7 L233.2,755.4 L234.2,755.8Z M229.3,751.8 L229.2,752.4 L228.1,752.8 L227.3,752.6 L227.9,751.2 L228.2,750.2 L229.4,751.2Z M222.5,748.3 L221.5,749.2 L219.7,749.2 L218.6,748.3 L220.0,746.8 L221.5,746.8Z M224.0,741.2 L223.2,741.8 L221.9,741.9 L221.4,741.2 L221.8,739.9 L222.9,739.7Z M234.8,752.3 L233.6,754.3 L231.9,754.1 L230.8,752.3 L231.8,750.8 L233.5,751.3Z M222.3,746.2 L221.9,746.8 L220.9,746.7 L220.8,745.6 L221.9,745.3Z M227.5,743.6 L226.6,744.0 L225.7,743.6 L226.6,742.6Z M236.6,753.0 L236.2,753.8 L235.1,753.8 L234.6,753.0 L235.2,752.1 L236.1,752.2Z M219.0,743.1 L218.3,743.6 L217.9,743.6 L217.4,743.4 L217.2,742.8 L217.8,742.1 L218.3,742.6Z M225.2,741.8 L223.9,742.6 L222.6,741.8 L223.9,740.3Z M230.6,750.3 L228.8,751.4 L227.2,751.8 L226.3,750.3 L227.7,748.2 L228.8,749.4Z M211.7,737.4 L211.3,738.3 L210.3,738.0 L209.9,737.4 L210.0,736.7 L211.2,736.6Z M224.0,748.3 L222.2,750.0 L220.7,750.5 L219.0,748.3 L221.0,746.2 L222.7,746.5Z M219.6,744.6 L218.6,745.6 L216.6,745.7 L217.0,743.5 L218.4,743.5Z M228.3,746.7 L227.9,747.6 L226.9,747.4 L226.8,746.1 L228.1,745.8Z M229.7,751.3 L229.3,752.5 L227.9,752.6 L227.5,751.3 L227.5,750.4 L229.0,750.0Z M235.3,751.0 L234.3,751.6 L233.4,751.9 L232.6,751.0 L233.5,750.0 L234.3,750.0Z M233.2,746.3 L231.9,747.0 L230.4,746.3 L231.9,745.1Z M224.0,745.6 L223.4,746.7 L222.5,746.4 L222.5,745.2 L223.5,744.9Z M228.5,755.2 L227.2,756.5 L226.0,755.2 L227.2,754.5Z M225.3,746.0 L223.1,748.0 L221.0,746.0 L223.1,745.0Z M236.4,756.0 L235.2,757.4 L233.9,756.0 L235.2,754.3Z" fill="#000" shape-rendering="crispEdges"/>
<path d="M227.9,747.5 L227.3,748.1 L226.0,748.0 L226.0,746.9 L227.2,746.6Z M213.7,739.4 L213.3,740.3 L211.9,740.2 L211.5,739.4 L212.1,738.4 L213.4,738.3Z M222.3,742.7 L221.6,743.7 L220.6,743.4 L219.5,743.1 L219.9,742.2 L220.6,741.8 L221.6,741.6Z M225.8,751.9 L224.8,753.1 L222.8,753.1 L222.0,751.9 L222.9,751.0 L224.7,750.5Z M232.4,746.4 L231.7,748.4 L229.9,747.6 L229.1,746.4 L230.0,744.4 L231.6,744.3Z M228.7,745.9 L227.9,746.7 L227.1,747.1 L226.2,745.9 L227.3,744.7 L228.1,745.4Z M235.5,754.0 L234.8,754.8 L234.1,755.2 L233.7,754.3 L233.6,753.6 L233.9,753.1 L234.6,753.4Z M223.0,748.3 L222.9,749.4 L221.6,748.9 L220.8,748.3 L221.7,747.3 L222.9,747.4Z M218.1,743.3 L217.7,745.1 L215.8,744.4 L215.9,742.5 L217.7,741.2Z M226.0,752.2 L224.1,753.5 L222.1,752.2 L224.1,750.3Z M232.9,754.4 L231.9,755.6 L230.6,755.5 L230.2,754.4 L230.6,753.7 L231.9,753.4Z M228.2,752.4 L227.7,754.2 L225.8,753.4 L225.8,751.9 L227.7,750.8Z M234.2,755.8 L232.9,757.2 L232.0,755.8 L232.9,754.7Z M230.4,748.9 L229.9,749.9 L228.9,749.3 L228.4,748.5 L229.9,748.0Z M226.9,750.0 L226.1,751.2 L224.6,751.2 L224.1,750.8 L223.9,749.1 L224.8,748.0 L226.3,748.5Z" fill="#5c4f4b" stroke="#000" stroke-width="1" shape-rendering="crispEdges"/>
<path d="M283.0,650.0 L296.0,651.0 L310.0,653.0 L310.0,663.0 L283.0,664.0Z" fill="#014363"/>
<path d="M288.0,656.4 L286.6,657.8 L285.4,658.1 L284.2,657.2 L283.8,655.6 L285.5,654.8 L286.8,655.0Z M295.3,652.6 L295.2,653.5 L294.3,653.1 L293.3,652.9 L293.6,652.0 L294.3,651.5 L294.8,652.0Z M311.4,656.1 L310.0,658.2 L308.0,657.6 L307.7,656.1 L307.8,654.4 L310.0,655.3Z M288.5,659.3 L287.4,659.9 L286.8,660.4 L286.3,659.3 L286.7,658.1 L287.8,658.3Z M299.1,652.6 L298.2,653.4 L296.6,653.4 L296.5,652.0 L298.4,651.2Z M298.8,656.2 L297.5,657.9 L295.7,656.2 L297.5,655.3Z M291.9,656.7 L291.3,657.6 L290.6,657.3 L290.6,656.1 L291.2,656.2Z M289.4,661.6 L288.4,662.2 L287.5,663.3 L286.9,662.0 L286.6,661.2 L287.4,660.6 L288.7,660.9Z M310.9,655.5 L310.5,656.1 L309.4,656.8 L308.9,655.5 L309.6,654.4 L310.3,654.6Z M310.2,656.6 L309.0,658.3 L308.0,658.2 L307.0,657.4 L307.3,655.7 L308.0,655.3 L309.2,655.8Z M296.9,658.6 L296.3,659.8 L295.3,659.0 L295.5,658.1 L296.4,657.4Z M288.2,659.4 L287.0,660.2 L285.9,659.4 L287.0,658.2Z M295.6,655.3 L294.1,656.7 L292.8,656.0 L292.5,654.7 L294.2,653.6Z M310.2,655.2 L309.5,656.1 L308.5,655.7 L308.8,654.6 L309.5,654.3Z M289.5,661.3 L288.9,662.3 L288.1,661.9 L287.9,660.8 L289.1,660.6Z M297.8,655.6 L297.4,656.4 L296.4,656.8 L295.8,655.6 L296.8,654.8 L297.5,654.7Z M289.1,658.3 L288.9,658.7 L288.2,659.2 L287.5,658.3 L287.9,657.7 L288.8,657.8Z M307.9,656.2 L306.6,658.0 L304.8,656.2 L306.6,654.4Z M306.1,656.8 L305.9,658.4 L304.4,657.5 L303.7,656.8 L304.5,655.8 L306.0,655.4Z M292.3,655.8 L292.2,656.5 L291.2,656.6 L291.0,655.8 L291.3,655.0 L292.0,654.7Z M294.7,652.6 L293.9,653.6 L293.0,653.3 L292.9,652.0 L293.8,651.5Z M294.3,663.0 L293.5,663.6 L292.4,664.2 L292.4,663.0 L292.5,662.4 L293.6,661.9Z M306.1,662.8 L304.8,665.1 L303.1,664.3 L303.4,662.0 L305.0,660.6Z M307.1,661.6 L306.1,662.9 L305.2,662.7 L304.4,661.6 L304.7,660.3 L306.2,660.2Z M309.1,654.3 L308.7,655.3 L307.0,655.1 L307.0,653.3 L308.9,653.0Z M294.0,653.2 L293.3,653.8 L292.4,653.7 L292.4,652.8 L293.3,652.5Z M293.7,652.2 L292.3,653.5 L291.1,652.2 L292.3,651.1Z M307.0,655.5 L306.1,656.4 L305.5,656.2 L304.6,655.8 L304.8,654.9 L305.6,654.5 L306.1,654.7Z M286.6,657.8 L286.3,658.7 L284.8,658.7 L283.4,658.4 L283.9,657.3 L284.6,655.8 L285.8,656.8Z M295.0,651.7 L293.7,653.0 L291.8,651.7 L293.7,650.9Z M300.7,657.0 L299.5,658.1 L297.8,658.0 L298.4,656.2 L299.6,655.7Z M298.1,656.3 L296.9,657.3 L296.2,656.3 L296.9,655.1Z M296.9,651.9 L296.3,652.6 L295.2,652.8 L294.3,651.9 L294.8,650.9 L296.4,651.0Z M285.8,656.0 L285.6,657.0 L284.2,658.3 L282.8,657.0 L283.5,655.3 L284.4,654.9 L285.9,655.1Z M307.0,657.1 L306.0,658.2 L304.7,658.3 L304.6,657.1 L304.4,656.1 L306.6,656.1Z M303.6,659.0 L303.3,659.9 L302.2,659.9 L300.9,659.7 L301.5,658.2 L302.2,657.6 L303.3,657.8Z M288.3,656.1 L287.8,656.9 L287.1,656.1 L287.8,655.1Z M287.3,653.0 L285.8,654.2 L285.0,653.0 L285.8,651.7Z M300.5,657.0 L299.3,658.4 L298.0,657.0 L299.3,656.5Z M285.7,658.8 L284.6,660.6 L282.8,660.6 L281.6,658.8 L282.6,657.1 L284.4,656.8Z M303.1,662.6 L301.9,664.4 L300.5,662.6 L301.9,661.1Z M297.7,660.1 L297.1,661.2 L295.8,660.6 L295.6,659.7 L297.1,658.7Z M286.1,659.6 L285.7,660.6 L284.6,660.3 L283.6,659.6 L284.4,658.8 L285.9,658.9Z M295.0,655.8 L294.8,656.5 L293.4,657.0 L292.1,656.5 L292.7,655.1 L293.2,654.2 L294.5,654.9Z M286.3,651.6 L285.4,652.7 L284.5,652.7 L284.1,652.4 L284.1,651.0 L284.6,650.5 L285.9,650.9Z M301.2,662.5 L300.2,663.9 L298.7,663.5 L298.1,661.6 L300.1,661.2Z M292.3,661.7 L291.5,662.4 L290.6,663.1 L290.0,662.2 L289.7,661.3 L290.8,661.0 L291.9,660.8Z M304.1,661.0 L303.8,662.4 L302.7,662.0 L302.2,661.0 L302.6,659.5 L303.8,659.5Z M297.9,657.2 L297.8,657.9 L296.3,658.7 L295.4,657.2 L296.6,655.8 L297.4,656.2Z M300.8,661.5 L300.1,662.9 L299.2,663.1 L298.2,661.5 L299.2,660.1 L300.1,660.0Z M294.2,656.8 L293.0,657.9 L291.9,658.5 L290.5,657.4 L290.7,656.5 L291.8,655.7 L293.3,656.2Z M295.0,656.7 L294.5,657.9 L293.6,658.4 L292.8,657.4 L292.9,656.4 L293.5,655.6 L294.8,655.4Z M286.1,653.2 L285.1,653.9 L284.6,653.2 L285.1,652.0Z M293.3,654.2 L292.9,654.9 L291.9,655.0 L291.1,654.8 L291.0,653.8 L291.8,653.2 L293.1,653.4Z" fill="#000" shape-rendering="crispEdges"/>
<path d="M310.6,657.0 L309.0,658.3 L307.3,658.3 L307.3,655.9 L309.3,656.1Z M311.5,661.3 L309.5,663.3 L307.3,661.3 L309.5,659.5Z M303.3,651.9 L301.7,653.4 L300.1,651.9 L301.7,650.1Z M294.9,653.5 L295.0,654.4 L294.0,654.6 L293.5,653.8 L293.8,653.1 L294.0,652.4 L294.8,652.6Z M304.8,658.9 L304.4,660.0 L303.2,659.3 L303.1,658.1 L304.4,657.4Z M290.1,659.6 L287.8,661.4 L286.4,659.6 L287.8,658.3Z M295.4,657.1 L294.3,657.9 L293.1,658.0 L293.2,656.6 L294.1,655.9Z M304.5,652.1 L304.0,653.3 L302.7,652.9 L302.5,651.4 L303.7,651.2Z M289.1,660.6 L287.9,661.9 L286.8,660.6 L287.9,659.7Z M290.1,655.4 L289.0,656.2 L287.9,656.0 L287.2,654.6 L288.8,654.2Z M303.6,652.4 L302.5,654.1 L300.7,652.9 L301.4,651.4 L302.5,651.6Z M291.1,651.5 L290.7,652.3 L289.3,652.2 L289.6,650.8 L290.8,650.2Z M300.9,659.6 L299.9,660.5 L298.0,661.0 L297.8,659.6 L298.0,657.9 L299.7,657.7Z M297.8,651.5 L297.3,651.9 L296.3,652.8 L296.0,652.0 L295.8,651.0 L296.5,650.3 L297.2,650.7Z M301.8,660.0 L301.8,661.1 L300.2,661.2 L298.9,660.8 L299.7,659.1 L300.2,658.6 L301.9,658.8Z M307.0,657.3 L306.1,658.0 L305.3,658.5 L304.4,657.3 L305.1,656.2 L306.5,656.5Z M306.6,662.8 L305.0,664.2 L303.6,662.8 L305.0,661.0Z M290.8,661.8 L289.3,663.8 L287.8,662.4 L287.3,661.3 L289.4,660.9Z M302.0,662.7 L301.9,663.3 L301.3,663.3 L300.7,663.1 L300.3,662.2 L301.2,661.5 L301.8,662.3Z" fill="#5c4f4b" stroke="#000" stroke-width="1" shape-rendering="crispEdges"/>
<path d="M801.9,654.7 L800.5,656.0 L798.4,655.8 L797.4,654.7 L798.8,653.1 L800.4,653.6Z M796.2,613.1 L795.1,614.2 L793.1,613.7 L793.0,611.9 L795.5,611.2Z M802.7,609.2 L802.5,610.2 L801.6,610.0 L801.5,608.6 L802.4,608.2Z M803.8,617.0 L802.9,617.7 L801.8,617.0 L802.9,616.2Z M802.4,633.2 L801.8,633.8 L800.8,634.1 L800.0,633.6 L800.2,632.8 L800.7,632.5 L801.7,632.4Z M799.2,569.0 L798.0,570.1 L796.6,569.9 L796.3,568.3 L798.1,568.0Z M794.3,577.3 L792.8,578.2 L790.8,578.1 L791.1,576.5 L792.7,575.5Z M795.0,607.9 L794.9,608.9 L794.0,608.8 L792.5,608.6 L792.4,607.5 L794.0,605.9 L794.8,607.1Z M789.3,643.3 L789.2,644.3 L788.2,644.2 L787.6,643.9 L787.1,643.0 L788.1,642.3 L789.2,642.6Z M801.6,632.4 L800.9,633.7 L799.6,634.2 L799.1,632.4 L799.3,630.7 L800.9,630.8Z M797.4,601.7 L796.2,603.3 L794.8,603.6 L794.1,602.8 L794.1,601.3 L794.9,599.9 L796.0,600.5Z M798.3,576.6 L798.5,577.6 L797.4,577.7 L796.7,577.1 L796.8,576.1 L797.4,575.8 L798.1,575.8Z M795.6,587.0 L794.7,588.6 L793.3,588.8 L792.1,587.0 L793.2,585.0 L795.1,585.3Z M794.5,583.2 L793.8,584.3 L793.1,583.8 L792.9,582.8 L793.6,582.7Z M799.3,637.8 L799.3,638.6 L797.9,638.7 L797.0,638.2 L797.5,637.4 L798.0,636.4 L798.8,637.2Z M792.9,561.0 L792.0,561.6 L791.2,561.5 L790.2,561.0 L791.0,559.7 L792.0,560.3Z M803.6,624.4 L802.5,626.0 L800.8,624.4 L802.5,622.6Z M802.2,621.9 L801.5,623.4 L800.2,622.5 L799.7,621.2 L801.6,620.8Z M799.7,633.7 L799.0,634.5 L798.2,634.3 L797.9,633.7 L798.3,632.9 L799.0,633.0Z M798.7,585.9 L797.2,588.0 L795.7,587.0 L795.2,585.3 L797.4,584.3Z M794.0,616.6 L794.0,617.5 L793.0,617.7 L792.7,617.1 L792.6,616.3 L792.9,615.8 L793.8,615.9Z M794.7,570.7 L794.3,571.5 L793.4,572.1 L793.0,571.2 L792.9,570.4 L793.5,569.2 L794.5,569.3Z M797.3,573.6 L797.0,574.8 L796.0,574.7 L795.0,573.9 L795.0,573.1 L796.0,572.4 L797.4,572.5Z M797.7,578.2 L797.1,578.9 L796.4,578.9 L795.8,578.6 L795.5,577.8 L796.4,576.9 L797.2,577.6Z M797.5,651.6 L795.9,652.8 L794.6,651.6 L795.9,649.7Z M794.9,580.6 L794.6,581.5 L793.8,580.8 L793.3,580.0 L794.7,580.1Z M796.2,631.1 L795.0,632.2 L794.1,631.1 L795.0,630.5Z M796.3,577.6 L795.7,578.9 L794.9,578.9 L793.5,578.3 L793.6,577.2 L794.8,576.3 L796.1,576.9Z M793.2,591.3 L792.4,591.9 L790.9,592.0 L791.3,590.7 L792.3,590.5Z M798.6,591.2 L798.2,592.2 L797.0,592.6 L796.4,591.7 L795.6,590.9 L796.8,589.6 L798.4,590.0Z M796.9,577.9 L795.7,580.0 L793.7,577.9 L795.7,576.6Z M793.0,640.5 L792.3,641.1 L791.2,640.5 L792.3,639.9Z M799.3,640.8 L799.0,641.2 L798.3,641.6 L798.1,641.2 L798.0,640.4 L798.4,639.7 L799.0,640.1Z M799.5,653.6 L799.1,654.6 L798.3,654.2 L798.4,652.8 L799.3,652.4Z M801.6,602.7 L800.2,603.6 L799.1,602.7 L800.2,601.4Z M797.9,569.0 L796.7,570.5 L795.4,570.1 L794.7,567.7 L796.6,567.0Z M796.0,605.0 L794.1,606.0 L792.9,606.0 L793.0,604.2 L794.3,604.0Z M799.5,584.5 L798.4,585.5 L797.3,586.4 L796.3,584.9 L795.6,583.9 L797.3,582.7 L798.9,583.3Z M798.1,621.5 L797.7,622.0 L796.8,622.2 L796.2,622.1 L795.8,621.2 L796.8,620.8 L797.8,621.1Z M798.5,654.0 L798.2,655.6 L796.5,656.0 L796.4,654.0 L796.9,652.5 L798.2,653.1Z M799.7,575.0 L799.5,575.8 L798.2,576.5 L797.4,575.6 L796.6,574.0 L798.1,573.8 L799.3,573.1Z M799.0,566.4 L798.7,567.3 L796.9,566.9 L797.5,565.4 L798.5,565.7Z M795.4,592.6 L794.9,593.6 L794.0,593.1 L793.5,591.9 L795.0,591.5Z M791.0,639.6 L790.3,640.7 L788.9,641.4 L788.1,640.4 L788.1,639.0 L789.0,638.8 L790.5,638.4Z M794.3,628.0 L793.0,628.8 L792.2,628.0 L793.0,627.1Z M794.2,630.2 L793.8,630.9 L792.7,630.7 L792.6,629.8 L793.7,629.4Z M794.2,641.9 L793.3,643.3 L792.1,643.2 L791.3,642.5 L791.0,641.5 L792.1,641.1 L793.4,640.5Z M801.1,616.7 L799.0,618.7 L797.7,616.7 L799.0,615.8Z M798.3,611.4 L797.0,612.4 L796.1,611.4 L797.0,610.3Z M801.4,587.8 L800.7,588.5 L799.8,588.6 L799.8,587.3 L800.7,586.6Z M803.9,601.4 L803.2,602.8 L802.2,602.0 L802.1,600.9 L803.3,600.7Z M804.1,656.6 L803.4,658.0 L802.5,657.7 L801.6,657.0 L801.7,655.9 L802.6,654.9 L803.8,655.7Z M802.5,560.6 L802.0,561.7 L800.7,562.8 L799.8,561.3 L799.0,559.7 L800.8,558.3 L802.2,558.8Z M793.8,646.7 L793.1,647.8 L790.9,647.4 L791.0,645.5 L792.7,645.2Z M803.4,611.0 L802.3,612.1 L801.8,611.0 L802.3,610.0Z M797.0,588.0 L797.0,588.6 L796.2,588.9 L795.7,588.5 L795.5,587.7 L796.2,587.4 L796.9,587.1Z M796.5,627.4 L795.8,628.1 L794.2,627.9 L794.4,626.9 L795.8,626.7Z M800.4,641.9 L798.7,644.0 L797.3,641.9 L798.7,640.0Z M796.8,575.2 L796.2,576.2 L795.6,575.6 L794.8,575.2 L795.4,574.4 L796.2,574.4Z M796.2,561.4 L794.9,563.2 L792.7,561.4 L794.9,560.1Z M797.8,619.1 L797.0,620.3 L796.1,620.0 L795.9,619.1 L796.0,618.4 L796.9,618.3Z M796.1,571.0 L795.3,572.1 L794.4,571.8 L793.0,571.5 L793.6,570.3 L794.2,570.0 L795.5,569.9Z M794.5,651.9 L794.2,653.0 L792.5,653.3 L792.5,651.9 L792.6,651.1 L794.4,650.7Z M803.4,647.9 L803.3,648.6 L802.7,648.7 L802.5,648.2 L802.2,647.5 L802.7,646.9 L803.2,647.5Z M796.3,583.6 L796.0,584.4 L795.2,584.1 L795.2,583.6 L795.3,583.2 L796.0,583.0Z M796.6,638.3 L795.4,640.0 L794.4,638.3 L795.4,637.5Z M795.7,609.2 L794.8,610.8 L793.4,610.0 L792.5,609.2 L793.1,608.0 L795.1,608.2Z" fill="#000" shape-rendering="crispEdges"/>
<path d="M792.9,640.9 L792.6,642.5 L790.9,643.4 L789.1,641.5 L789.9,640.3 L790.9,638.6 L792.7,639.7Z M802.1,567.4 L801.9,568.2 L801.0,568.6 L800.2,568.1 L800.4,567.0 L801.1,566.6 L802.5,565.9Z M804.1,657.1 L803.4,657.8 L802.2,658.2 L801.8,657.1 L802.3,656.0 L803.1,655.7Z M797.9,580.6 L796.4,582.9 L795.0,580.6 L796.4,578.6Z M796.8,644.7 L796.2,645.2 L795.1,645.8 L794.7,645.0 L794.7,644.3 L795.2,643.8 L796.0,643.9Z M798.3,651.0 L797.5,651.7 L796.7,651.0 L797.5,650.3Z M796.1,614.7 L794.2,615.8 L792.9,614.7 L794.2,613.1Z M799.6,598.0 L799.1,599.3 L797.3,598.8 L797.9,597.5 L798.9,596.6Z M802.2,612.5 L800.9,613.5 L800.1,612.5 L800.9,611.5Z M798.0,621.9 L797.8,622.6 L796.6,622.7 L796.0,622.3 L795.5,621.3 L796.8,620.7 L797.7,620.2Z M795.2,565.2 L793.9,566.6 L793.0,565.2 L793.9,563.2Z M793.6,577.9 L792.7,579.0 L791.4,579.3 L790.6,578.6 L790.7,577.3 L791.3,576.8 L792.3,576.7Z M796.1,650.2 L795.3,650.9 L794.7,650.9 L794.1,650.5 L794.4,649.6 L794.8,649.0 L795.5,649.5Z M797.5,655.7 L797.1,656.5 L795.7,656.4 L795.0,656.1 L795.4,654.9 L795.7,654.1 L797.0,654.3Z M800.8,629.7 L799.1,630.5 L797.9,629.7 L799.1,628.5Z M799.7,592.5 L799.4,593.7 L798.5,593.0 L798.5,592.5 L798.4,591.4 L799.6,591.4Z M802.8,567.8 L801.5,569.2 L799.9,568.3 L800.2,567.0 L801.7,566.9Z M798.8,615.1 L798.0,616.4 L797.2,615.6 L796.9,614.5 L798.2,614.3Z M800.6,649.7 L800.8,651.0 L799.6,650.8 L799.1,650.4 L798.7,649.0 L799.7,648.8 L800.9,648.9Z M798.0,650.2 L797.1,651.3 L796.2,650.8 L795.9,649.5 L797.1,649.0Z M795.2,622.5 L794.0,624.8 L791.5,622.5 L794.0,620.3Z M802.9,584.4 L802.0,585.3 L801.1,585.3 L800.9,584.4 L801.3,583.8 L802.1,583.7Z M793.1,647.4 L792.9,648.4 L791.4,649.0 L789.5,647.4 L790.9,645.9 L793.0,646.1Z M800.0,587.9 L799.6,589.1 L798.5,589.1 L797.9,587.9 L798.5,587.2 L799.3,586.9Z M792.8,634.8 L792.2,635.9 L791.5,635.9 L791.1,634.8 L791.5,634.0 L792.5,634.0Z M792.2,646.7 L791.6,647.5 L790.8,647.6 L789.6,646.7 L790.8,645.6 L791.8,645.8Z M798.9,589.9 L798.6,590.8 L797.2,590.4 L797.5,589.5 L798.6,588.7Z M794.8,602.7 L794.3,603.4 L793.2,603.8 L792.9,603.1 L792.9,602.1 L793.2,602.0 L794.2,602.3Z M795.4,622.0 L794.8,623.1 L793.7,623.4 L792.3,622.7 L793.0,621.4 L793.5,619.8 L795.1,620.5Z M801.3,657.1 L800.0,658.4 L798.3,657.8 L797.8,656.3 L799.7,656.1Z M797.3,592.4 L796.1,593.2 L795.3,593.8 L793.7,592.8 L794.2,591.8 L795.2,590.9 L796.1,591.3Z M795.5,633.7 L794.6,635.1 L792.8,634.5 L793.3,632.8 L794.6,632.3Z M803.4,588.6 L802.3,590.0 L801.0,589.2 L800.8,588.1 L802.3,587.6Z M802.4,579.4 L802.1,581.3 L799.8,580.6 L800.4,578.1 L801.9,577.9Z M791.9,640.0 L790.4,641.1 L789.2,640.0 L790.4,639.1Z M794.4,635.2 L794.0,636.0 L792.5,635.6 L792.9,634.3 L793.8,634.0Z M801.0,626.5 L800.5,627.6 L799.1,628.4 L797.4,626.5 L799.0,624.8 L800.1,625.6Z" fill="#5c4f4b" stroke="#000" stroke-width="1" shape-rendering="crispEdges"/>
<path d="M250.4,678.4 L253.4,684.3 L254.1,696.1 L250.4,705 L244.5,713.9 L235.7,722.7 L225.3,730.1" stroke="#000" stroke-width="1" fill="none" stroke-dasharray="9,3,5,4" shape-rendering="crispEdges"/>
<path d="M228,661 L240,663 L255,661 L268,664 L284,663" stroke="#000" stroke-width="1.3" fill="none" stroke-dasharray="7,4"/>
<path d="M781,655 L783,665 L786,676 L793,687 L795,703 L788,712 L784.5,723 L786.3,735.5 L793.5,744.5 L796.2,753.5" stroke="#000" stroke-width="3.2" fill="none"/>
<path d="M781,655 L783,665 L786,676 L793,687 L795,703 L788,712 L784.5,723 L786.3,735.5 L793.5,744.5 L796.2,753.5" stroke="#014363" stroke-width="1.4" fill="none"/>
<path d="M786,728 L792,730 L797,742 L799,752 L795,756 L789,748 Z" fill="#2f4a66" stroke="#1f3b5a"/>
<path d="M300.0,54.8 L306.9,56.0 L313.7,60.5 L316.0,68.5 L322.8,73.1 L318.3,77.7 L322.8,91.4 L321.7,96.0 L318.3,89.1 L314.9,77.7 L310.3,66.3 L304.6,61.7 L300.0,62.8Z" fill="#2f4a66" stroke="#1f3b5a" stroke-width="1"/>
<path d="M367.7,261.4 L373.4,258.0 L380.2,263.7 L389.4,266.0 L396.2,276.2 L387.1,270.5 L377.9,266.0 L370.0,262.5Z" fill="#2f4a66" stroke="#1f3b5a" stroke-width="1"/>
<path d="M604.9,308.9 L611.7,303.5 L614.4,287.1 L621.2,289.9 L626.7,294.0 L619.9,300.8 L614.4,308.9 L609.0,313.0Z" fill="#2f4a66" stroke="#1f3b5a" stroke-width="1"/>
<path d="M438.5,376.6 L444.2,367.4 L447.6,362.8 L451.0,366.3 L446.5,372.0 L440.8,377.7Z" fill="#2f4a66" stroke="#1f3b5a" stroke-width="1"/>
<path d="M424.8,413.1 L428.2,420.0 L428.2,426.8 L431.6,433.7 L428.2,431.4 L425.9,424.5 L423.6,415.4Z" fill="#2f4a66" stroke="#1f3b5a" stroke-width="1"/>
<path d="M527.2,502.1 L531.3,506.2 L530.0,517.1 L535.4,528.0 L531.3,536.1 L525.9,530.7 L527.2,519.8 L525.9,508.9Z" fill="#2f4a66" stroke="#1f3b5a" stroke-width="1"/>
<path d="M540.9,601.8 L545.0,615.4 L551.8,612.7 L557.2,604.5 L562.7,612.7 L554.5,615.4 L547.7,619.5 L540.9,615.4Z" fill="#2f4a66" stroke="#1f3b5a" stroke-width="1"/>
<path d="M122.2,658.5 L126.0,654.0 L130.2,652.8 L135.5,653.5 L137.1,656.2 L134.5,663.0 L132.5,667.6 L127.0,669.0 L123.4,667.6 L121.5,663.0Z" fill="#2f4a66" stroke="#1f3b5a" stroke-width="1"/>
<path d="M42.5,680.3 L47.0,681.0 L51.0,685.0 L52.0,689.7 L48.0,690.0 L44.0,686.0Z" fill="#2f4a66" stroke="#1f3b5a" stroke-width="1"/>
<path d="M56.7,683.8 L60.0,688.0 L62.0,696.0 L67.0,702.0 L76.0,704.0 L83.9,706.0 L83.0,711.0 L74.0,710.0 L66.0,707.0 L60.0,701.0 L57.0,692.0Z" fill="#2f4a66" stroke="#1f3b5a" stroke-width="1"/>
<path d="M142.0,697.0 L147.0,694.5 L153.0,696.0 L154.8,702.0 L150.0,706.0 L148.0,712.0 L142.0,714.5 L140.6,708.0 L145.0,703.0Z" fill="#2f4a66" stroke="#1f3b5a" stroke-width="1"/>
<path d="M180.5,6.9 L185.6,11.0 L189.9,16.3 L194.2,20.6 L196.0,25.6 L197.6,30.8 L198.0,35.7 L199.9,41.1 L200.2,46.4 L199.7,52.0 L200.6,58.0 L200.5,62.7 L200.6,68.5 L199.7,74.0 L199.4,79.7 L199.5,85.6 L198.8,91.4 L196.5,95.6 L193.6,100.5 L191.7,105.4 L189.6,109.7 L189.0,115.8 L186.8,120.6 L186.2,127.1 L185.0,132.5 L182.2,138.4 L178.9,142.8 L175.9,148.5 L174.0,154.3 L171.3,159.9 L167.9,165.0 L165.6,170.0 L162.8,174.4 L160.5,179.3 L158.5,183.6 L156.2,188.2 L153.1,192.8 L149.4,198.5 L146.2,204.3 L147.5,211.2 L149.6,217.6 L150.8,223.7 M241.0,6.9 L236.6,10.2 L232.4,13.9 L228.5,18.3 L228.3,23.5 L227.8,29.2 L228.1,34.3 L228.0,40.6 L227.3,45.7 L226.2,52.5 L223.1,57.0 L220.0,62.1 L217.0,66.3 L211.5,68.3 L205.8,69.5 L201.0,70.8 M241.0,6.9 L245.2,12.5 L249.0,18.3 L253.0,23.9 L255.8,28.6 L260.0,34.3 L261.5,40.1 L263.4,46.4 L266.5,51.9 L268.7,56.9 L274.8,58.8 L279.5,59.4 L285.6,61.2 L291.5,58.1 L298.2,54.8 L303.9,55.9 L308.2,56.1 L313.7,57.1 L319.4,60.6 L323.9,63.9 L329.6,67.8 L334.3,70.8 L338.8,73.6 L342.7,76.4 L347.1,79.9 L351.2,82.5 L355.1,86.3 L359.4,89.1 L364.0,92.7 L367.5,96.2 L372.0,100.7 L376.4,103.6 L380.0,107.4 L385.8,111.0 L390.1,113.2 L396.0,116.5 L400.6,119.6 L405.1,123.4 M5.7,256.8 L10.6,256.3 L16.1,256.8 L20.8,256.0 L26.8,255.7 L31.8,255.4 L36.6,255.7 L42.7,254.8 L48.3,254.0 L54.8,253.4 L61.1,250.5 L68.5,248.8 L74.2,246.4 L79.6,245.1 L85.5,242.7 L91.4,240.8 L97.6,239.1 L103.7,236.9 L109.7,235.1 L116.3,232.6 L123.4,229.4 L130.5,226.7 L137.1,224.8 L144.4,224.2 L150.8,223.7 L155.9,224.1 L162.2,224.8 M174.8,223.7 L179.2,220.9 L184.6,218.6 L189.3,215.9 L194.2,213.4 L198.2,210.5 L202.4,207.5 L206.4,203.7 L210.7,200.8 L214.6,198.3 L219.3,195.1 L224.3,190.6 L228.5,186.0 L234.3,182.8 L239.9,180.3 L245.5,179.1 L249.6,178.5 L254.8,177.9 L260.0,176.9 L265.6,174.8 L269.5,173.6 L275.5,172.1 L280.5,170.3 L284.6,168.9 L289.9,167.2 L294.6,166.1 L300.0,164.5 L307.1,162.4 L313.7,161.1 L318.2,160.3 L324.1,158.3 L328.6,157.2 L333.4,156.9 L338.8,155.4 L343.7,153.6 L349.3,151.9 L353.6,150.2 L359.4,149.3 L364.0,147.4 L369.9,145.5 L375.4,144.6 L381.6,143.4 L386.8,141.6 L391.6,139.1 L395.9,135.2 L400.5,132.5 M164.5,231.7 L165.0,236.1 L165.8,241.6 L166.8,246.5 L167.0,252.0 L168.5,256.8 L169.1,261.4 L170.3,266.4 L170.8,272.5 L171.7,277.3 L172.3,283.3 L172.5,288.8 L172.7,294.2 L172.2,300.2 L171.8,305.5 L171.3,311.6 L172.5,317.4 L173.1,322.6 L173.9,327.9 L174.2,333.1 L175.7,338.5 L175.9,344.5 L177.1,350.0 M473.6,6.9 L472.8,13.0 L471.6,19.2 L471.3,25.1 L469.9,30.5 L467.9,35.1 L466.0,41.1 L464.5,45.7 L460.5,50.6 L455.4,54.8 L450.1,56.7 L444.5,57.4 L439.9,58.7 L434.8,60.5 L432.9,65.4 L430.1,70.8 L427.9,75.4 L425.9,80.6 L423.5,86.3 L421.1,91.4 L418.7,96.3 L415.6,101.3 L412.6,107.3 L409.7,112.0 L409.7,118.8 L405.1,124.5 M414.2,134.8 L420.4,134.8 L425.3,134.1 L431.3,133.5 L436.6,132.0 L442.3,131.9 L448.5,131.4 L453.7,132.4 L457.8,133.5 L463.0,134.6 L468.2,135.4 L472.7,136.6 L478.2,137.1 L483.1,137.1 L489.2,137.7 L494.5,137.1 L500.0,136.8 L505.6,137.1 L512.5,138.6 L519.3,139.4 L523.5,143.4 L528.7,147.0 L533.0,150.8 L537.2,152.9 L542.6,154.8 L546.7,157.6 L551.8,158.4 L557.9,159.1 L563.7,159.0 L569.9,159.5 L574.5,159.1 L580.7,159.8 L586.2,159.4 L592.2,160.1 L597.3,157.9 L601.7,154.5 L607.0,152.0 L611.1,149.8 L615.9,147.1 L621.3,148.2 L626.2,148.0 L631.0,149.0 L637.1,149.5 L642.0,150.6 L647.4,147.8 L653.6,144.6 L658.6,142.3 L663.4,138.8 L667.6,135.7 L672.9,132.9 L677.2,130.6 L682.8,127.6 L687.0,126.2 L692.4,123.7 L696.6,121.3 L701.8,119.2 L706.1,116.3 L710.4,113.5 L714.5,110.8 L719.4,108.0 L724.3,105.4 L728.4,102.5 L733.0,100.8 L736.8,97.4 L741.7,94.9 L746.3,92.1 L751.8,89.7 L756.5,88.3 L762.3,85.5 L767.5,83.3 L772.0,80.8 L777.2,78.3 L782.5,77.3 L788.4,75.2 L793.8,73.6 L800.2,73.0 L805.7,71.2 M402.8,132.5 L402.6,137.7 L402.1,143.7 L401.9,148.7 L400.4,154.2 L400.5,160.0 L400.5,164.7 L399.2,169.6 L398.3,175.5 L398.2,180.0 M405.1,130.2 L408.6,135.0 L411.7,139.5 L415.8,143.8 L418.8,148.5 L422.4,152.0 L426.2,156.3 L428.5,160.8 L432.5,164.5 L436.1,169.7 L440.6,174.3 L443.9,180.0 M588.6,7.1 L588.5,14.1 L587.4,21.4 L590.1,28.9 L592.2,35.6 L596.3,39.0 L599.6,43.0 L604.0,47.4 L603.6,54.0 L604.0,61.7 L603.0,67.6 L601.1,73.1 L599.3,78.3 L601.3,84.2 L602.0,89.9 L604.0,94.9 L600.4,99.5 L598.1,103.4 L593.9,107.4 L591.0,111.5 L593.4,116.8 L594.4,121.4 L596.9,125.7 L600.9,129.4 L604.5,134.4 L607.5,137.8 L611.2,142.3 L615.9,149.5 L610.7,152.5 L606.7,155.4 L601.1,157.7 L596.5,160.6 L592.2,163.7 L588.8,168.6 L585.4,171.9 L581.1,176.8 L578.3,180.6 L574.8,185.6 L570.8,189.8 M658.6,142.3 L663.1,146.9 L666.2,151.9 L670.5,156.6 L674.2,160.5 L676.6,165.0 L680.0,168.4 L682.4,174.6 L684.7,180.3 L688.1,184.6 L691.8,189.8 L697.1,189.2 L702.2,187.9 L708.2,188.2 L713.5,187.4 L718.6,185.8 L724.6,185.7 L729.8,185.0 L734.9,184.1 L739.8,182.2 L745.1,181.4 L749.6,180.1 L755.5,178.2 L759.9,177.1 L765.4,175.6 L770.4,175.8 L775.0,175.3 L780.0,174.8 L785.5,174.5 L790.6,175.2 L795.0,174.8 L800.2,175.1 L805.7,174.4 M250.0,179.1 L255.0,178.1 L260.2,176.1 L264.3,174.1 L269.6,172.5 L275.3,171.4 L279.7,170.0 M398.5,170.0 L398.0,175.5 L397.9,180.8 L397.4,186.1 L397.2,191.6 L396.2,197.4 L397.0,202.5 L396.7,207.5 L396.8,212.4 L397.6,217.5 L397.3,222.8 L397.8,228.1 L397.9,232.9 L398.5,238.5 L397.5,244.1 L395.8,251.1 L393.9,256.8 L394.6,262.1 L395.6,266.7 L395.2,271.7 L396.2,277.4 L396.4,282.0 L396.7,287.6 L395.7,292.6 L396.4,297.6 L396.2,302.5 L397.4,307.9 L398.0,313.8 L399.1,319.4 L399.4,323.9 L400.8,329.9 L401.6,335.1 L401.9,340.0 L401.5,345.1 L402.3,350.4 L401.7,355.2 L401.9,360.6 L403.3,365.6 L403.1,370.8 L403.9,376.0 L405.4,381.1 L404.7,387.9 L403.1,394.8 L405.2,400.8 L407.2,406.6 L409.9,413.1 L412.2,418.8 L416.2,423.3 L418.3,428.6 L421.4,433.7 L423.3,438.4 L425.8,443.2 L427.4,448.7 L429.4,453.1 L430.5,458.9 L432.8,463.4 L436.4,467.9 L439.6,471.4 L437.9,476.8 L437.3,481.6 L434.1,486.6 L431.7,491.1 L429.1,494.9 L425.9,499.9 L423.1,505.2 L421.5,509.6 L419.4,514.7 L416.8,520.0 L414.3,524.0 L410.2,527.9 L407.4,532.1 L404.5,535.7 L401.6,540.3 L398.5,544.3 L394.7,548.7 L389.8,552.0 L385.6,556.2 L382.6,560.2 L377.9,564.8 L374.0,567.7 L369.5,570.7 L365.3,574.1 L361.6,577.3 L357.2,580.5 L352.8,583.1 L348.1,585.3 L343.5,588.8 L339.1,590.8 L334.4,594.0 L330.0,596.8 L324.3,598.7 L317.2,601.8 L311.7,603.7 L307.9,609.5 L304.8,615.1 L305.2,621.7 L304.8,628.8 M437.3,170.0 L440.9,175.4 L443.3,180.4 L446.5,186.0 L451.3,189.1 L455.9,191.5 L460.2,195.1 L462.7,199.4 L466.0,204.4 L469.0,209.0 L471.6,213.4 L475.8,218.9 L479.6,223.7 L483.0,229.4 L488.4,232.2 L493.5,235.2 L499.0,238.5 L506.8,237.2 L513.6,235.4 L518.1,238.4 L521.8,240.4 L526.8,243.1 L530.5,246.5 L535.4,249.0 L536.8,254.4 L537.9,258.9 L539.2,264.4 L540.8,269.0 L542.5,274.5 L543.6,279.0 L545.6,284.1 L547.2,288.9 L549.4,294.7 L551.0,298.9 L553.9,303.7 L554.7,309.1 L557.2,314.4 L560.8,318.2 L564.2,322.5 L566.4,325.7 L569.9,329.4 L573.5,333.4 L578.0,339.0 L581.7,344.3 M505.9,238.5 L503.4,243.7 L501.0,247.4 L499.1,251.8 L496.7,256.8 L494.1,261.9 L492.2,266.7 L489.8,271.8 L487.6,277.4 L484.4,281.0 L481.8,285.9 L478.3,290.5 L475.8,293.6 L472.4,298.2 L469.3,302.5 L466.4,307.2 L464.2,312.2 L460.7,316.1 L458.7,320.3 L455.7,325.2 L453.3,329.9 L449.5,333.6 L445.7,337.1 L441.9,340.0 L437.7,342.8 L432.2,345.1 L428.0,348.9 L423.6,351.4 L420.0,355.4 L417.3,360.8 L413.6,365.3 L409.9,369.7 L407.6,375.6 L405.4,381.1 L398.9,382.6 L393.7,384.2 L387.1,385.7 L383.1,390.0 L378.5,393.3 L373.4,397.1 L368.1,398.4 L363.6,398.7 L358.0,399.9 L352.8,401.1 L348.2,401.7 L344.1,404.3 L338.9,407.8 L334.5,410.8 L331.3,414.0 L327.9,417.9 L323.4,422.0 L320.4,425.5 L316.8,428.6 L313.0,432.3 L309.4,436.0 L306.2,439.8 L302.8,443.9 L299.0,447.6 L295.1,451.9 L290.9,455.6 L287.7,460.1 L284.3,463.4 L279.0,465.1 L274.6,468.1 L269.0,470.5 L263.7,472.5 L257.4,473.2 L250.0,474.8 L248.2,479.2 L247.8,484.2 L245.3,489.1 L244.6,494.6 L242.5,498.7 L241.4,503.6 L240.0,508.6 L239.1,513.0 L237.6,518.2 M516.3,235.4 L521.0,232.6 L525.2,229.3 L529.4,225.8 L532.9,223.4 L537.2,220.8 L541.4,217.0 L546.2,214.2 L550.8,211.6 L554.5,208.1 L557.8,204.1 L560.8,199.9 L564.6,195.6 L567.5,191.0 L570.8,186.3 L573.9,180.9 L577.5,175.5 L581.7,170.0 M589.9,336.2 L593.8,333.9 L598.5,330.6 L603.6,328.5 L607.2,325.0 L612.0,322.4 L617.0,319.4 L620.7,316.6 L625.3,314.4 L629.7,312.6 L634.3,309.3 L639.7,307.6 L644.7,304.3 L648.6,302.6 L653.8,299.7 L658.6,297.6 L663.4,295.3 L668.4,293.1 L672.0,290.6 L676.5,288.7 L682.2,285.9 L686.7,283.5 L690.7,281.7 L695.5,278.8 L699.0,275.9 L704.5,272.7 L708.8,269.3 L713.4,266.6 L716.9,263.3 L721.5,260.2 L726.1,257.2 L730.3,255.0 L735.4,252.8 L739.8,250.5 L744.8,247.6 L749.6,244.9 L753.5,243.5 L758.8,240.8 L764.0,238.6 L769.4,236.8 L773.7,235.3 L779.5,233.6 L784.1,231.6 L789.0,229.8 L794.2,228.6 L800.0,227.2 L805.2,224.9 L810.0,223.1 M715.2,189.1 L718.1,193.9 L721.8,198.0 L725.4,202.0 L728.7,206.3 L731.5,210.9 L735.5,214.2 L739.7,217.8 L744.2,220.5 L748.8,223.4 L753.3,227.2 L755.8,231.6 L756.9,236.9 L760.0,241.9 L761.5,246.3 L763.0,250.9 L764.4,256.7 L764.5,261.6 L766.0,266.0 L767.0,272.2 L768.7,276.7 L769.7,281.7 M739.7,254.4 L743.7,257.8 L748.6,260.8 L752.8,263.7 L757.5,267.1 L762.6,270.1 L767.0,273.5 L770.2,277.3 L774.1,281.0 L777.6,284.2 L781.4,288.0 L785.1,291.9 L788.7,295.3 L792.5,299.1 L797.3,301.3 L802.0,305.5 L805.6,308.9 L810.0,311.6 M587.2,333.4 L586.8,328.0 L586.6,322.7 L585.6,317.6 L585.9,311.1 L585.3,306.1 L585.5,301.3 L584.5,295.3 M414.5,365.1 L420.5,363.9 L427.3,363.0 L432.8,362.8 L438.0,363.0 L443.7,363.6 L450.3,363.1 L455.6,364.0 L461.6,363.4 L466.8,362.4 L472.3,361.7 L478.6,361.4 L484.6,361.2 L489.9,360.6 L495.2,359.2 L500.5,358.3 L504.9,358.1 L510.0,357.1 L515.6,356.4 L521.0,356.0 L527.2,355.0 L532.4,354.3 L537.9,353.3 L544.0,352.5 L549.5,352.0 L554.5,350.9 L559.4,350.6 L565.5,350.0 L571.0,349.4 L576.3,348.2 M592.6,352.3 L598.1,353.8 L603.9,356.0 L608.9,357.5 L614.4,359.1 L620.2,360.1 L625.2,361.0 L630.8,361.9 L635.9,362.3 L642.1,363.9 L646.8,363.9 L653.1,366.0 L657.5,365.7 L663.4,367.2 L669.1,367.7 L674.3,368.1 L679.2,368.3 L684.8,369.4 L691.1,369.4 L696.0,370.3 L701.5,371.1 L707.0,371.3 L712.2,371.4 L717.5,371.8 L723.6,372.0 L728.7,372.6 L733.7,372.5 L739.7,372.3 L745.2,372.7 L750.6,370.8 L755.8,368.0 L761.3,365.6 L766.7,363.4 L772.4,361.8 L776.7,358.5 L782.2,355.9 L786.1,353.6 L790.9,350.9 L795.7,348.4 L800.8,346.0 L805.4,342.8 L810.0,340.0 M579.0,361.8 L574.7,364.9 L571.3,368.6 L566.3,371.4 L562.4,374.8 L558.7,377.4 L554.5,380.9 L552.5,386.9 L549.8,391.8 L547.9,397.0 L545.3,402.8 L543.6,408.1 L540.0,411.7 L536.3,416.0 L531.7,419.6 L527.9,423.0 L524.5,427.2 L520.8,430.6 L517.1,435.2 L513.6,439.0 L510.8,442.7 L507.0,447.1 L503.5,450.8 L500.0,454.4 L494.4,456.8 L488.5,459.9 L483.0,463.4 L476.9,465.1 L471.8,467.1 L465.7,469.6 L460.2,471.4 L455.1,471.9 L449.4,471.6 L444.9,471.5 L439.6,471.4 M581.7,356.3 L584.9,360.4 L589.1,366.0 L592.2,369.4 L596.5,374.6 L599.7,379.1 L603.5,383.6 L605.6,389.1 L607.8,393.9 L610.0,398.5 L611.9,402.9 L614.4,408.1 L618.9,412.1 L622.4,415.2 L627.2,418.7 L630.8,421.7 L635.6,425.2 L639.6,429.0 L644.4,432.6 M644.4,438.1 L648.7,441.1 L654.6,444.6 L659.0,447.7 L663.9,451.6 L668.9,454.4 L674.9,456.4 L679.2,457.2 L685.2,459.4 L691.1,460.3 L695.8,462.0 L702.0,463.5 L707.0,465.3 L712.6,465.7 L717.4,467.0 L723.0,468.0 L729.1,468.4 L734.3,470.2 L739.7,470.8 L745.0,472.7 L750.5,473.3 L756.6,474.6 L762.0,476.7 L766.9,477.8 L772.4,478.9 L778.2,480.5 L783.5,482.6 L788.8,485.1 L794.4,486.6 L799.5,488.4 L805.0,490.2 L810.0,492.5 M636.2,429.9 L634.0,436.5 L633.2,442.4 L630.8,449.0 L630.2,454.1 L630.7,459.5 L630.2,465.0 L630.3,471.3 L630.0,475.9 L630.2,481.8 L630.2,487.5 L629.6,492.8 L630.0,497.8 L629.4,503.4 L630.9,508.3 L632.5,513.6 L634.4,518.3 L635.5,524.3 L637.4,529.1 L638.9,533.8 L640.8,539.1 L642.5,544.6 L644.3,549.9 L646.1,554.7 L647.1,560.0 L649.1,565.2 L651.2,571.6 L653.3,576.5 L655.3,582.7 L657.0,588.2 L659.7,593.4 L660.8,597.8 L663.4,603.3 L665.1,607.7 L666.5,613.2 L668.9,618.1 L672.8,621.7 L676.7,625.8 L679.5,630.9 L683.8,634.2 L687.6,638.8 L690.7,642.6 L694.5,646.9 L698.1,651.4 L702.2,656.0 L706.3,660.1 L709.8,664.4 L711.6,669.9 L714.1,674.7 L715.9,681.0 L717.9,686.2 L719.3,690.8 L722.0,695.9 L723.8,700.7 L725.0,705.0 L728.2,709.8 L731.9,716.1 L736.0,721.0 L738.8,727.1 L741.3,732.0 L742.7,737.5 L744.8,743.4 L746.7,750.0 L748.2,755.6 L750.8,762.3 L752.0,768.0 L753.0,773.6 L753.5,779.6 L754.0,786.0 L754.2,791.3 L754.8,795.6 L755.3,801.3 L755.0,806.0 M5.7,460.0 L10.4,460.7 L15.4,461.5 L21.1,461.3 L25.5,461.7 L30.5,462.6 L35.6,463.5 L40.5,464.0 L45.7,464.5 L50.4,464.9 L55.0,466.4 L60.8,467.0 L65.3,467.8 L70.6,469.7 L75.4,470.2 L81.3,472.3 L88.2,474.8 L93.7,477.1 L98.7,476.8 L104.0,475.1 L108.9,474.9 L114.2,473.7 L120.4,474.0 L125.6,473.9 L130.9,473.3 L137.1,473.7 L141.9,476.9 L146.2,479.4 L150.8,480.5 L156.3,480.0 L162.0,479.2 L167.3,479.7 L172.1,479.1 L177.1,478.1 L182.8,478.2 L188.5,477.6 L194.7,477.9 L200.1,477.1 L205.3,477.0 L211.7,476.5 L217.0,475.9 L222.5,475.4 L227.7,475.4 L233.3,475.1 L238.0,475.3 L244.4,474.6 L248.7,474.7 L255.0,474.4 L260.0,473.7 M177.1,340.0 L177.8,345.9 L179.7,351.3 L180.2,356.9 L181.7,362.3 L182.8,367.4 L182.1,372.3 L182.1,377.8 L181.1,382.2 L180.6,387.1 L180.5,392.5 L178.6,396.9 L175.9,402.3 L173.8,407.2 L171.6,411.7 L169.1,417.4 L166.9,421.7 L164.5,426.8 L163.5,432.3 L162.4,437.2 L161.3,442.5 L159.5,446.9 L159.3,452.0 L157.4,458.1 L156.4,462.5 L155.4,467.9 L153.0,474.0 L150.4,479.5 L148.5,486.2 L146.2,490.3 L142.3,495.4 L140.4,499.3 L137.1,504.5 L136.9,510.1 L135.1,515.1 L134.8,520.0 L133.7,526.4 L132.1,531.7 L131.9,537.8 L130.2,544.3 L129.7,549.8 L129.8,553.9 L129.0,559.7 L129.8,564.8 L129.2,569.9 L128.3,574.7 L128.1,579.9 L128.7,584.7 L127.9,590.0 L128.0,595.1 L127.4,600.6 L127.1,605.9 L126.7,611.6 L125.7,617.4 L126.2,622.6 L127.0,628.0 L128.2,632.8 L128.2,637.1 L129.1,642.5 L132.4,649.7 L134.8,656.2 L134.6,662.2 L133.0,668.3 L132.5,674.5 M242.2,510.0 L239.2,514.5 L236.3,520.3 L234.4,525.4 L231.6,530.6 L228.5,535.1 L224.9,540.2 L222.0,544.3 L218.6,548.4 L214.8,553.4 L214.0,559.3 L214.4,564.7 L213.0,569.7 L212.7,575.3 L212.5,580.8 L210.1,586.4 L209.2,591.2 L207.2,597.0 L205.2,601.9 L202.8,607.3 L201.0,612.8 L199.3,618.6 L196.4,623.4 L193.6,628.7 L192.2,634.1 L189.2,640.0 L187.3,644.8 L185.9,649.5 L185.6,654.5 L184.3,659.9 L182.8,665.4 L178.2,668.9 L174.5,673.1 L170.5,676.5 L166.3,679.5 L162.2,683.6 M5.7,660.8 L10.6,659.7 L15.8,658.1 L20.6,656.1 L24.2,654.6 L29.2,653.3 L34.3,651.7 L39.8,650.8 L43.6,649.2 L49.1,648.7 L53.8,646.8 L59.3,646.5 L63.9,644.6 L68.5,643.7 L74.5,643.7 L80.1,643.9 L85.7,644.9 L91.4,644.8 L97.1,644.0 L103.0,643.3 L108.4,642.1 L114.2,641.8 L119.8,640.4 L125.7,640.2 L131.6,641.0 L136.8,640.8 L142.3,640.5 L148.5,641.4 L154.7,643.0 L159.9,645.4 L165.1,647.6 L171.3,649.4 L176.6,651.5 L181.5,654.1 L187.3,656.2 L194.4,654.7 L201.0,653.9 L206.0,652.1 L211.7,649.7 L217.0,647.1 L222.2,646.1 L228.5,645.4 L234.4,643.4 L239.9,642.5 L246.2,643.5 L251.3,643.1 L258.2,644.3 L263.7,644.8 L268.6,643.4 L274.0,643.5 L279.2,642.3 L284.9,641.0 L290.0,640.2 L295.3,636.3 L299.3,632.8 L304.8,628.8 M91.4,647.1 L94.3,653.6 L95.8,659.3 L98.2,665.4 L104.0,666.6 L109.1,668.0 L114.3,669.3 L119.9,670.9 L125.7,672.2 L131.1,674.2 L137.4,675.9 L142.3,677.2 L148.5,679.1 L153.5,681.8 L157.7,684.2 L162.2,686.0 M6.9,617.4 L10.2,623.0 L12.6,628.8 L12.2,635.3 L11.4,642.5 L12.8,648.9 L13.8,655.3 L14.9,660.8 M314.0,622.0 L319.1,622.8 L325.0,623.5 L330.8,625.0 L335.4,625.8 L341.4,626.5 L347.0,628.4 L352.2,629.8 L357.4,631.1 L362.3,634.2 L366.5,637.9 L372.1,638.4 L376.8,638.3 L382.5,637.9 L386.8,633.9 L391.7,628.8 L396.8,626.8 L400.9,624.5 L405.0,622.3 L409.9,619.7 L415.5,619.6 L420.9,618.4 L427.1,617.5 L433.3,617.9 L438.9,616.6 L444.2,616.2 L450.1,619.1 L455.6,620.8 L460.9,619.7 L466.9,617.5 L472.6,616.9 L478.5,615.1 L484.2,614.7 L489.7,614.9 L494.8,615.5 L500.0,615.4 L504.9,615.2 L511.3,615.1 L516.3,615.4 L521.2,617.4 L526.5,619.4 L530.7,622.0 L536.2,624.6 L540.9,626.3 L545.9,627.6 L551.0,629.6 L556.8,631.7 L561.4,632.9 L566.7,635.1 L571.8,635.9 L577.2,638.8 L581.7,639.9 L586.6,640.0 L592.5,640.5 L596.7,641.3 L602.3,641.0 L607.5,641.7 L612.9,641.4 L617.9,642.7 L622.6,642.6 L628.1,643.2 L633.0,644.4 L637.7,645.1 L642.6,646.1 L647.7,648.2 L653.1,648.7 L658.2,650.3 L663.4,650.8 L668.8,651.6 L674.2,653.3 L680.3,654.3 L685.5,656.1 L690.2,656.7 L696.6,658.3 L702.0,658.9 L707.0,660.3 L712.6,660.8 L717.9,659.7 L722.8,660.7 L728.8,660.7 L734.3,660.0 L739.2,660.5 L745.2,660.3 L749.9,660.1 L755.6,659.0 L761.1,658.7 L765.6,657.3 L771.2,657.0 L775.4,656.5 L781.5,655.6 L786.0,654.9 L791.6,655.1 L797.9,653.6 L804.5,653.3 L810.0,653.5 M802.4,550.0 L801.1,555.4 L799.0,559.8 L796.8,565.8 L794.7,571.1 L793.6,575.4 L791.5,581.4 L789.3,585.6 L788.4,591.1 L786.0,596.3 L785.5,601.1 L785.7,606.5 L784.8,611.6 L784.4,616.1 L784.6,621.1 L784.1,626.4 L783.3,631.7 L784.3,637.3 L785.7,642.1 L786.3,648.1 L787.5,653.4 L788.7,659.0 L790.6,664.1 L793.0,669.6 L795.6,675.3 L797.7,680.2 L799.6,686.2 L802.7,693.1 L805.1,700.0 M159.5,224.0 a7.5,5 0 1,0 15.0,0 a7.5,5 0 1,0 -15.0,0 M366.7,132.5 a35,32 0 1,0 70,0 a35,32 0 1,0 -70,0 M573.7,349.7 a10,14 0 1,0 20,0 a10,14 0 1,0 -20,0 M778.0,656.0 a8,13 0 1,0 16,0 a8,13 0 1,0 -16,0" stroke="#8a7512" stroke-width="1" fill="none" shape-rendering="crispEdges"/>
<path d="M201.2,7.4 L199.9,8.0 L198.9,8.6 L199.4,10.8 L200.4,12.9 L201.8,14.7 L203.7,16.0 L205.7,16.8 L207.6,17.1 L209.3,17.0 L210.6,16.7 L211.3,16.2 L211.5,15.8 L211.1,15.7 L210.3,15.9 L209.3,16.7 L208.3,17.9 L206.8,19.3 L205.5,20.8 L204.5,22.7 L203.9,24.9 L203.9,27.1 L204.5,29.2 L205.3,28.7 L204.9,30.7 L204.9,32.4 L205.3,33.9 L205.7,35.0 L206.1,35.5 L206.3,35.6 L206.2,35.4 L205.7,34.9 L204.7,34.3 L203.4,33.8 L201.7,33.6 L201.4,36.5 L201.7,38.4 L202.5,40.2 L203.6,41.8 L204.7,42.7 L206.0,43.9 L207.4,44.7 L208.8,45.3 L209.9,45.6 L210.8,45.8 L211.4,45.9 L211.5,46.1 L211.4,46.4 L211.1,47.0 L210.8,47.9 L210.4,48.9 L210.1,50.2 L210.0,51.6 L210.1,53.1 L210.3,54.6 L211.6,56.8 L212.8,57.8 L214.3,58.6 L215.8,59.1 L217.3,59.3 L218.6,59.3 L219.8,59.2 L217.9,58.9 L217.8,58.3 L217.8,58.0 L218.0,58.0 L218.5,58.1 L219.3,58.4 L220.5,58.6 L221.9,58.8 L223.6,58.6 L225.1,58.6 L227.0,58.1 L224.3,57.8 L225.8,59.1 L227.5,60.0 L229.4,60.5 L230.5,60.7 L232.0,61.4 L233.3,61.8 L234.4,61.9 L235.1,61.7 L235.4,61.6 L235.2,61.5 L234.5,61.7 L233.6,62.2 L232.4,63.0 L231.3,64.3 L230.3,66.0 L229.6,67.9 L229.1,67.3 L227.9,69.1 L227.1,71.2 L226.9,73.4 L227.1,75.5 L227.7,77.4 L228.6,79.0 L229.6,80.2 L230.5,80.9 L231.3,81.2 L231.6,81.1 L231.5,80.8 L230.9,80.4 L229.8,80.1 L228.3,79.9 L227.4,80.8 L227.8,82.8 L228.7,84.7 L226.5,81.4 L225.1,83.1 L224.1,85.1 L223.7,87.3 L223.6,89.4 L224.1,91.2 L224.5,92.9 L225.2,94.2 L225.9,95.1 L226.4,95.6 L226.7,95.7 L226.6,95.4 L226.1,95.0 L225.1,94.5 L223.7,94.2 L222.1,94.1 L220.2,94.4 L218.4,95.0 L221.7,95.8 L220.4,94.2 L218.8,92.9 L217.1,92.1 L215.3,91.6 L212.6,93.0 L212.9,94.2 L213.2,95.3 L213.5,96.2 L213.8,97.0 L213.9,97.7 L214.0,98.3 L214.0,98.8 L213.8,99.2 L213.5,99.7 L213.0,100.1 L212.4,100.5 L211.7,101.0 L210.9,101.6 L210.0,102.2 L209.1,102.8 L208.1,103.6 L207.2,104.5 L206.4,105.5 L205.5,106.5 L208.0,105.7 L207.6,104.4 L207.1,103.1 L206.5,101.8 L205.8,100.5 L203.4,98.8 L201.6,99.1 L200.2,99.8 L199.2,100.5 L198.6,101.2 L198.4,101.6 L198.4,101.5 L198.6,100.8 L198.6,99.6 L198.4,98.0 L196.0,99.3 L195.4,101.2 L195.3,103.4 L198.7,107.3 L200.9,107.3 L200.7,105.7 L201.7,107.4 L202.9,108.5 L204.0,109.1 L204.7,109.1 L204.7,108.7 L204.1,108.3 L202.8,108.0 L200.9,108.0 L198.9,108.7 L196.9,110.0 L195.4,111.9 L194.9,112.4 L193.8,114.6 L193.4,117.0 L194.6,119.3 L196.4,118.7 L197.7,117.9 L198.1,117.0 L197.8,116.6 L197.0,116.7 L195.9,117.6 L194.8,119.2 L194.1,121.3 L194.1,123.8 L194.8,126.2 L196.0,120.9 L193.9,122.4 L192.4,124.4 L191.6,126.7 L191.5,128.7 L191.9,130.3 L192.6,131.2 L193.2,131.2 L193.4,130.5 L193.0,129.8 L192.2,128.9 L191.1,128.0 L189.7,127.2 L188.8,129.8 L189.1,131.6 L189.6,133.5 L190.5,135.3 L191.7,136.8 L191.6,133.3 L190.8,135.0 L190.4,136.9 L190.3,138.6 L190.4,140.2 L190.7,141.6 L191.0,142.8 L192.0,142.9 L192.4,143.3 L192.7,143.6 L192.6,143.7 L192.2,143.8 L191.5,143.9 L190.6,144.1 L189.5,144.4 L188.3,145.0 L187.0,145.8 L185.8,146.8 L184.7,148.0 L183.8,149.5 L185.1,153.7 L186.3,154.8 L187.7,155.7 L189.1,156.4 L189.3,155.8 L189.6,157.1 L189.9,158.3 L190.3,159.3 L190.6,160.1 L190.7,160.7 L190.7,161.3 L190.6,161.8 L190.2,162.2 L189.9,162.6 L189.3,163.1 L188.6,163.5 L187.8,164.0 L186.8,164.3 L185.5,164.1 L184.0,164.1 L182.5,164.3 L180.9,164.7 L179.4,165.3 L178.0,166.1 L176.6,167.1 L175.5,168.3 L174.6,170.4 L174.8,171.9 L175.2,173.2 L175.7,174.2 L176.1,175.1 L176.5,175.6 L176.7,176.0 L176.7,176.2 L176.3,176.2 L175.7,176.2 L174.8,176.2 L173.7,176.3 L172.3,176.6 L170.8,177.2 L169.3,178.0 L169.2,181.9 L169.4,183.8 L169.9,182.0 L169.1,183.8 L168.7,185.7 L168.5,187.7 L168.7,189.5 L169.0,190.7 L169.0,192.3 L169.1,193.7 L169.4,194.8 L169.8,195.6 L170.0,196.1 L170.2,196.2 L170.0,196.0 L169.6,195.6 L168.9,195.0 L167.8,194.5 L166.4,194.0 L164.8,193.6 L162.8,193.7 L160.9,194.2 L159.1,195.0 L157.4,196.1 L156.6,202.8 L157.8,204.4 L160.7,201.3 L159.6,203.0 L158.9,204.6 L158.4,206.2 L158.3,207.7 L158.3,208.9 L158.4,209.9 L158.6,210.5 L158.6,210.7 L158.6,210.6 L158.3,210.2 L157.8,209.7 L156.9,209.0 L156.3,207.4 L155.7,208.6 L155.1,209.9 L154.6,211.4 L154.3,213.0 L154.2,214.6 L154.3,216.3 L154.5,217.9 L155.0,219.6 L155.6,221.1 L156.4,222.5 L157.3,223.8 L158.2,225.0 L158.7,224.2 L157.9,225.3 L157.3,226.3 L156.8,227.2 L156.4,227.9 L156.0,228.5 L155.6,228.9 L155.2,229.2 L154.7,229.3 L152.6,224.7 L151.0,226.7 L151.2,227.4 L151.4,228.3 L151.6,229.3 L151.8,230.4 L151.9,231.6 L152.4,233.2 L150.9,236.0 L149.2,236.7 L147.2,236.8 L145.4,236.4 L144.1,235.5 L142.2,237.0 L141.6,237.2 L143.2,234.0 L142.4,236.8 L143.8,236.9 L145.6,237.5 L147.3,238.8 L148.5,240.8 L148.4,244.7 L146.7,246.2 L144.7,247.0 L142.9,247.0 L141.9,246.6 L141.7,246.1 L142.5,245.9 L143.9,246.4 L145.4,247.9 L146.5,250.0 L143.5,253.8 L141.0,254.7 L138.4,254.4 L135.7,251.8 L136.5,249.7 L137.7,248.5 L138.8,248.3 L139.1,249.1 L138.3,250.3 L136.6,251.5 L134.0,252.1 L131.3,251.6 L136.2,249.9 L134.6,252.3 L132.2,253.9 L129.7,254.3 L127.8,253.3 L126.4,253.0 L126.5,252.1 L133.8,253.8 L131.9,253.1 L129.3,253.3 L126.8,253.7 L124.4,255.4 L123.0,258.0 L124.6,264.2 L127.4,263.9 L129.6,262.7 L130.7,261.2 L130.6,260.1 L129.6,259.9 L128.1,260.8 L126.9,262.8 L126.4,265.5 L127.0,268.3 L125.5,264.7 L124.2,267.2 L124.1,270.8 L125.9,272.6 L127.7,273.4 L129.0,273.2 L129.2,272.4 L128.3,271.5 L126.3,271.1 L123.9,271.5 L121.7,272.9 L120.1,275.2 L119.9,279.0 L121.3,281.3 L123.2,282.7 L125.2,283.3 L126.5,283.2 L126.9,282.6 L126.3,282.2 L124.9,282.2 L123.0,283.0 L121.4,284.6 L120.4,286.8 L121.4,286.4 L120.0,288.2 L119.3,290.3 L119.3,292.2 L119.8,293.5 L120.2,294.0 L120.3,293.7 L119.8,293.0 L118.6,292.2 L116.9,291.7 L114.9,291.8 L112.4,293.1 L111.4,294.8 L111.1,296.7 L111.2,298.3 L111.6,299.5 L112.0,300.2 L112.1,300.5 L111.8,300.3 L110.9,300.0 L109.4,299.9 L107.6,300.1 L105.7,300.8 L104.1,302.3 L103.7,303.3 L102.5,305.0 L102.0,306.8 L102.1,308.1 L102.5,308.7 L102.7,308.5 L102.5,307.5 L101.6,306.2 L99.8,305.0 L97.6,304.4 L97.4,311.0 L99.5,312.4 L101.4,310.9 L102.2,313.1 L103.4,314.5 L104.6,315.0 L105.2,314.6 L104.8,313.7 L103.4,312.8 L101.1,312.4 L98.6,312.9 L96.3,314.4 L95.0,320.6 L97.2,322.3 L99.7,323.0 L101.1,324.6 L102.2,326.0 L104.0,320.8 L103.3,320.2 L101.7,320.6 L99.9,322.0 L99.0,321.4 L96.2,321.4 L93.5,322.5 L92.4,324.3 L90.9,326.8 L90.5,329.4 L91.0,331.5 L92.0,332.6 L92.9,332.4 L92.9,331.6 L91.1,326.1 L91.1,327.8 L90.6,329.8 L89.5,331.8 L90.3,328.3 L91.8,330.2 L92.7,332.4 L93.0,334.8 L92.6,337.0 L91.7,339.4 L89.9,338.9 L88.7,338.2 L87.9,337.5 L87.7,336.9 L88.0,336.8 L88.5,337.2 L89.2,338.1 L89.8,339.4 L90.1,341.2 L90.1,343.2 L89.5,345.2 L87.0,347.5 L85.0,348.4 L82.9,348.7 L82.0,348.1 L81.5,347.0 M226.2,52.5 L230.3,49.8 L233.3,46.8 L235.8,43.8 L239.9,40.0 L246.3,41.0 L251.3,42.3 L256.3,43.9 L259.9,45.4 L264.6,46.3 L268.7,48.5 L273.2,51.5 L277.1,53.8 L280.2,50.0 L282.4,47.4 L281.0,43.9 L279.3,39.4 L277.1,35.8 L279.1,29.7 L280.3,24.3 L284.7,22.0 L289.8,21.1 L295.1,20.0 L299.3,18.7 L304.4,18.5 L308.8,16.9 L309.8,10.5 L305.6,6.3 M5.7,105.1 L10.3,105.5 L13.6,104.9 L17.8,105.8 L21.6,104.9 L25.6,104.6 L29.6,105.0 L34.3,105.8 L38.1,105.2 L41.7,105.0 L45.8,105.1 L49.9,105.3 L54.4,105.7 L58.0,105.2 L62.4,105.3 L66.1,105.1 L70.2,105.6 L74.5,104.9 L79.2,104.6 L82.6,105.5 L87.2,104.4 L91.1,104.9 L94.4,105.8 L98.5,105.0 L102.8,104.6 L106.7,104.9 L111.5,105.6 L114.7,104.6 L119.2,105.7 L122.4,104.9 L126.8,105.5 L131.0,105.7 L134.7,105.3 L139.4,104.6 L143.7,104.9 L146.8,104.4 L150.7,105.4 L155.4,105.1 L158.7,109.0 L161.1,114.2 L159.9,119.3 L160.0,123.4 L156.7,126.6 L153.6,130.6 L150.8,134.8 L147.3,138.6 L144.3,141.7 L141.6,145.8 L138.2,149.6 L142.2,150.1 L146.5,149.5 L151.2,150.3 L154.3,150.2 L158.7,150.3 L163.1,149.6 L167.3,149.2 L171.2,149.2 L174.3,150.3 L179.3,149.9 L183.6,150.2 L187.3,149.6 M206.8,105.1 L211.2,105.3 L215.2,105.7 L219.6,104.5 L223.0,105.7 L227.6,104.6 L231.4,105.6 L235.4,104.7 L239.2,104.5 L243.7,105.7 L247.7,104.9 L251.1,105.5 L254.7,105.1 L258.7,105.4 L263.3,105.6 L266.7,105.6 L271.8,104.6 L274.5,105.5 L279.4,105.3 L283.6,104.4 L286.8,105.2 L291.6,105.7 L294.8,105.6 L299.2,105.8 L303.7,105.3 L307.9,104.9 L311.4,105.1 L311.0,100.7 L310.8,97.3 L310.0,93.7 L309.1,89.1 L312.6,89.6 L317.4,89.7 L320.6,90.5 L325.1,91.4 L329.0,90.8 L333.3,90.8 L337.3,90.8 L341.6,91.2 L344.6,91.0 L348.7,91.0 L352.6,91.8 L357.8,91.9 L361.4,92.1 L365.5,90.7 L368.7,90.7 L372.7,91.4 L376.5,92.1 L380.4,90.9 L385.0,90.9 L389.7,91.5 L393.4,92.0 L396.4,90.9 L400.6,91.7 L404.8,90.8 L408.6,92.0 L412.5,91.0 L416.8,90.8 L421.1,91.4 L425.0,91.5 L429.2,91.1 L434.5,91.8 L438.0,91.7 L442.1,91.6 L447.7,91.5 L451.5,92.4 L456.0,92.7 L460.0,92.5 L463.9,92.0 L467.5,92.7 L472.4,92.4 L476.4,93.4 L480.1,93.4 L484.4,93.0 L488.2,93.0 L492.1,93.4 L496.6,92.9 L499.7,93.2 L504.5,93.7 L507.8,94.4 L512.4,93.4 L516.6,94.1 L520.6,94.3 L524.2,94.1 L528.6,94.1 L532.4,95.2 L535.7,95.1 L540.0,94.9 L544.2,95.2 L547.9,94.8 L552.0,95.7 L557.2,95.1 L561.0,94.7 L564.8,95.6 L569.0,95.3 L572.7,95.2 L577.4,95.9 L581.6,95.2 L585.5,95.5 L588.9,95.3 L593.2,96.0 L598.1,96.7 L602.1,96.8 L606.6,96.0 L610.1,95.8 L613.8,96.6 L618.9,96.1 L623.0,96.1 L627.1,96.1 L631.0,96.4 L634.9,96.8 L639.2,96.7 L643.8,96.6 L646.6,96.6 L651.5,96.3 L655.0,96.2 L660.0,97.1 L663.2,96.4 L667.8,97.0 L672.3,96.1 L676.1,95.9 L680.1,96.1 L684.2,96.2 L688.6,96.2 L693.0,96.3 L697.1,96.6 L700.8,96.6 L704.9,95.4 L708.9,96.2 L713.3,95.6 L717.1,95.5 L720.4,95.1 L725.4,95.4 L728.8,95.3 L733.2,95.4 L737.6,95.5 L741.3,95.3 L746.4,95.7 L749.7,95.2 L753.3,95.3 L758.4,95.5 L761.8,95.2 L766.7,94.9 L770.2,95.1 L774.4,94.8 L778.6,94.5 L782.3,95.4 L786.7,94.9 L790.8,96.1 L796.6,96.6 L801.0,97.0 L805.7,97.3 M634.9,96.8 L639.0,94.2 L643.9,93.0 L649.1,90.2 L653.5,88.7 L657.4,88.5 L661.7,87.3 L665.1,86.5 L669.5,85.7 L673.4,83.4 L677.6,83.0 L679.5,79.0 L682.3,74.7 L686.8,72.6 L691.7,70.8 L696.6,68.8 L697.8,61.7 L702.0,57.9 L707.3,54.6 L708.4,48.6 L712.1,46.2 L715.5,45.0 L720.0,42.3 L723.2,41.0 L727.7,38.5 L730.9,37.4 L735.9,35.2 L739.3,33.2 L742.5,29.8 L746.6,27.1 L749.0,25.7 L753.2,22.0 L755.7,19.8 L760.0,16.5 L763.0,14.2 L765.4,11.9 L760.9,10.5 L757.0,8.9 L753.4,8.9 L748.8,7.1 M765.4,11.9 L765.5,18.3 L765.4,23.7 L769.0,27.0 L771.9,31.4 L773.6,35.0 L777.2,38.0 L780.8,39.8 L784.7,40.0 L789.1,41.5 L793.3,39.7 L796.6,38.9 L800.9,37.6 L804.5,35.6 L805.7,30.8 M786.7,94.9 L784.2,99.6 L782.0,104.4 L782.0,109.8 L781.0,114.2 L780.8,118.6 L774.9,117.4 L772.3,121.1 L769.2,124.9 L765.8,128.5 L763.0,131.3 L760.6,135.2 L756.9,137.4 L753.5,140.0 L748.4,137.7 L744.0,136.4 L738.8,138.0 L734.6,138.9 L729.8,140.0 L726.8,144.5 L722.7,149.5 L716.7,151.8 L714.4,144.7 L710.7,145.3 L706.1,147.1 L701.3,149.0 L696.6,151.8 L694.2,159.0 L691.0,163.3 L687.1,168.4 L680.0,168.4 L676.2,170.3 L672.4,173.9 L668.1,175.6 L664.3,178.3 L660.1,180.6 L656.0,183.0 L651.5,185.0 L647.6,185.3 L644.0,186.5 L639.2,187.0 L635.9,188.0 L631.3,188.4 L627.8,189.8 L621.6,188.4 L618.9,191.5 L616.7,195.7 L612.7,200.0 L610.5,203.2 L606.4,206.1 L603.2,208.0 L599.5,210.5 L595.3,211.4 L592.1,214.2 L591.4,218.2 L591.4,221.8 L590.7,225.9 L590.3,230.6 L589.5,233.9 L588.4,238.3 M142.8,238.1 L146.6,237.7 L150.9,237.5 L154.2,238.2 L159.5,237.6 L162.8,238.4 L166.9,238.4 L170.6,237.5 L175.4,238.8 L178.4,238.4 L183.0,238.1 L187.3,237.4 L190.7,237.9 L194.6,237.8 L198.7,238.0 L203.2,237.9 L207.0,238.6 L210.9,238.6 L214.9,238.7 L218.5,238.1 L222.7,238.1 L226.8,237.4 L231.8,238.0 L235.8,238.2 L239.4,238.0 L243.8,237.5 L247.9,238.4 L251.6,237.7 L254.9,237.9 L259.8,237.8 L263.0,238.7 L267.8,238.6 L271.5,238.5 L274.9,238.6 L278.7,237.9 L283.5,238.8 L287.8,238.3 L291.8,238.7 L295.1,238.5 L298.9,238.4 L302.9,237.9 L307.8,237.9 L311.6,238.7 L315.0,238.1 L319.5,238.5 L323.1,238.4 L327.2,238.2 L331.0,237.7 L336.1,238.6 L339.9,237.6 L343.0,238.5 L347.1,238.0 L351.5,237.5 L356.2,238.4 L360.0,238.6 L363.2,238.3 L367.4,237.6 L372.2,237.7 L376.3,238.2 L380.2,237.8 L383.4,238.8 L387.9,237.6 L391.4,238.1 L395.3,237.7 L399.2,238.4 L403.9,237.9 L407.7,237.6 L412.0,237.7 L415.5,238.5 L420.2,237.9 L424.1,237.7 L428.3,237.9 L432.2,238.3 L435.8,237.5 L439.9,237.8 L443.7,238.5 L447.7,238.7 L452.8,238.2 L455.9,237.9 L460.6,237.8 L463.7,237.6 L467.9,238.3 L472.4,238.3 L475.7,237.7 L480.0,238.2 L484.5,238.3 L488.0,238.8 L491.8,237.6 L496.0,238.4 L499.9,238.4 L504.1,238.3 L507.8,238.0 L511.9,237.7 L516.6,237.7 L520.3,238.7 L525.0,238.4 L528.2,238.4 L532.4,238.1 L536.1,238.1 L540.9,238.8 L544.0,238.7 L548.6,238.5 L552.6,238.9 L557.2,238.2 L561.1,238.6 L564.4,237.6 L569.0,238.3 L572.6,238.7 L576.7,237.9 L580.9,237.8 L584.8,238.7 L588.9,238.2 L592.2,238.0 L596.3,238.9 L600.5,238.9 L604.8,238.2 L608.6,238.1 L612.6,238.0 L617.1,237.6 L620.9,238.4 L624.6,238.2 L628.8,238.7 L632.3,238.8 L637.3,238.6 L641.1,238.2 L644.2,238.4 L648.9,237.7 L653.6,238.4 L657.2,238.2 L660.9,238.1 L665.4,238.4 L669.3,238.4 L672.8,238.5 L677.0,238.3 M677.0,238.3 L680.3,236.6 L685.1,235.7 L688.3,235.1 L693.5,233.5 L696.7,232.4 L700.4,231.6 L704.4,229.9 L708.6,228.8 L712.7,227.1 L716.8,225.9 L720.7,224.7 L724.4,224.5 L728.5,222.7 L732.5,221.6 L736.9,222.1 L740.4,221.1 L744.7,222.2 L748.2,222.7 L752.4,222.3 L757.3,222.4 L761.0,222.0 L765.2,222.7 L769.8,222.3 L774.0,222.3 L777.0,222.8 L781.2,222.7 L785.8,223.2 L789.5,222.9 L794.3,223.7 L798.4,223.6 L801.9,222.8 L806.0,223.5 M299.1,238.1 L301.4,241.2 L304.2,244.9 L307.1,247.7 L306.2,252.2 L305.7,255.9 L305.5,259.6 L305.4,264.0 L305.8,267.9 L305.1,271.9 L303.9,275.6 L303.8,280.6 L303.7,284.2 L303.8,288.0 L302.7,292.9 L302.2,295.8 L301.7,299.6 L302.2,304.2 L301.5,308.3 L300.7,311.6 L300.6,315.6 L300.2,319.7 L299.4,324.5 L299.9,327.9 L298.3,332.0 L298.8,336.3 L298.0,340.0 L296.9,344.1 L296.9,347.9 L296.7,351.8 L296.0,356.0 L296.1,360.3 L294.7,363.8 L295.2,368.1 L293.4,372.8 L293.6,377.2 L293.3,380.6 L293.2,385.5 L292.4,388.4 L291.8,392.4 L291.1,397.1 L291.1,401.8 L290.1,405.7 L290.1,408.7 L289.2,413.8 L289.8,417.4 L288.6,421.9 L289.1,426.3 L288.3,429.8 L287.7,434.6 L286.8,438.7 L287.6,442.4 L286.3,446.5 L286.0,450.1 L285.8,454.4 L285.8,458.1 L284.3,463.3 L284.3,466.6 L284.7,470.8 L283.5,475.2 L283.3,479.5 L283.8,482.7 L283.0,486.9 L282.3,490.9 L282.5,495.9 L282.2,499.2 L281.1,503.3 L281.0,507.8 L279.9,511.9 L279.6,515.6 L279.7,520.0 L280.1,523.9 L280.2,528.8 L280.2,532.4 L280.4,536.9 L279.9,540.4 L280.5,544.9 L280.6,549.3 L280.4,553.5 L280.8,557.9 L281.7,561.7 L281.1,565.3 L281.7,570.7 L282.1,574.6 L282.0,578.5 L282.2,582.9 L282.7,586.7 L282.5,590.4 L282.8,594.1 L282.9,599.3 L282.6,602.7 L283.8,606.1 L284.1,610.4 L283.9,615.4 L283.4,618.7 L284.2,622.7 L284.0,626.3 L284.6,631.4 L284.7,634.9 L285.4,638.8 L285.5,642.9 L285.4,647.1 M492.2,239.0 L492.7,243.5 L493.4,247.5 L495.3,252.6 L495.9,256.2 L496.7,261.4 L497.7,266.1 L498.1,269.8 L498.5,274.1 L499.2,277.7 L499.7,281.4 L500.8,285.6 L501.7,290.6 L502.7,294.7 L503.5,298.7 L503.8,302.3 L504.7,305.9 L505.5,310.4 L505.2,314.9 L507.0,318.3 L507.2,323.1 L507.5,326.2 L508.7,330.4 L509.7,334.6 L510.0,339.0 L510.3,343.5 L512.2,347.5 L512.6,351.8 L512.4,355.0 L513.7,360.4 L514.8,364.1 L514.9,367.6 L516.5,372.8 L516.7,376.3 L518.0,380.7 L518.7,384.8 L519.1,389.0 L519.8,392.8 L520.5,397.7 L521.0,401.3 L521.9,405.3 L522.0,409.3 L522.6,413.6 L523.7,417.3 L523.9,421.4 L524.6,426.4 L525.9,429.9 L526.4,434.5 L527.7,440.1 L529.4,443.7 L530.0,449.0 L533.1,454.1 L535.5,458.4 L538.1,462.6 L538.6,467.0 L539.0,471.1 L539.5,476.2 L544.9,481.6 L542.3,484.8 L537.9,488.6 L535.4,492.5 L533.9,497.9 L532.7,503.4 L533.5,507.4 L533.8,512.4 L533.5,517.0 L533.5,522.1 L533.3,526.3 L534.0,530.7 L534.1,536.1 L532.8,539.7 L533.4,545.8 L532.7,550.0 L532.1,553.9 L532.2,559.0 L531.7,563.1 L531.5,568.0 L530.5,573.0 L530.0,577.2 L532.1,580.9 L533.4,585.7 L534.8,589.6 L536.8,593.6 L538.7,596.6 L541.1,600.9 L542.2,604.5 L543.9,608.5 L546.4,614.0 L547.7,618.1 M678.4,238.1 L675.2,242.0 L672.1,245.6 L668.9,249.0 L666.5,253.4 L665.0,257.0 L663.3,260.6 L660.7,264.0 L664.1,266.4 L667.4,269.6 L670.7,272.5 L674.3,276.2 L677.9,279.3 L681.4,282.2 L685.2,284.4 L689.5,284.9 L694.8,284.4 L696.3,287.9 L698.0,292.3 L700.3,296.6 L702.4,299.4 L703.3,304.0 L705.8,307.7 L707.0,311.6 L709.6,315.7 L712.0,318.9 L712.9,323.8 L716.1,326.2 L717.9,330.7 L721.8,333.0 L724.7,335.2 L728.6,337.4 L731.5,340.0 L735.2,342.7 L739.0,346.9 L741.2,349.9 L745.2,353.6 L748.2,356.7 L752.6,361.0 L756.1,364.5 L760.3,368.8 L762.8,371.4 L767.0,375.4 L768.9,379.0 L770.4,383.6 L771.3,388.1 L772.4,391.8 L774.5,395.3 L777.6,399.2 L780.6,402.7 L784.5,405.2 L789.1,408.4 L794.2,410.8 L795.4,415.2 L797.5,419.2 L797.9,422.4 L799.6,427.2 L801.5,431.0 L802.7,434.6 L805.1,438.1 L806.0,445.0 M78.9,348.5 L79.9,350.0 L81.0,351.0 L81.9,351.5 L82.4,351.5 L82.5,351.2 L82.1,350.8 L81.0,350.3 L79.5,350.1 L77.7,350.2 L75.7,350.7 L73.7,351.8 L72.1,353.4 L72.8,359.8 L74.4,361.4 L76.4,362.6 L78.5,363.2 L80.6,363.3 L82.3,363.0 L83.7,362.4 L84.4,361.3 L84.1,360.5 L83.1,360.5 L81.6,361.5 L80.4,363.4 L79.8,365.9 L78.2,364.4 L76.5,366.5 L75.7,369.1 L75.8,371.7 L76.8,373.9 L77.8,372.8 L79.5,375.9 L80.2,375.7 L80.1,375.0 L79.0,374.2 L77.2,373.7 L75.8,375.8 L76.4,377.3 L77.2,378.8 L78.3,380.2 L79.5,381.4 L80.9,382.5 L82.4,383.3 L81.7,381.9 L82.0,383.4 L82.4,384.8 L82.9,386.1 L83.5,387.2 L84.0,388.1 L84.4,388.8 L84.7,389.5 L84.9,390.0 L84.9,390.4 L84.7,390.8 L84.1,388.9 L84.2,389.6 L84.4,390.5 L84.6,391.4 L84.9,392.5 L85.2,393.7 L85.7,394.8 L85.6,394.2 L84.4,394.7 L83.1,395.3 L81.9,396.1 L80.7,397.0 L79.7,398.0 L78.7,399.2 L77.9,400.4 L77.6,402.7 L78.0,404.0 L78.5,405.2 L79.1,406.2 L79.7,407.1 L80.2,407.8 L80.5,408.3 L80.8,408.8 L80.6,407.2 L80.6,407.5 L80.5,408.0 L80.2,408.6 L79.8,409.5 L79.4,410.5 L79.0,411.7 L78.6,413.1 L78.4,414.7 L78.4,416.4 L77.7,413.9 L76.2,414.9 L74.9,416.1 L74.3,423.0 L75.9,423.8 L77.6,424.4 L79.3,424.7 L80.9,424.8 L82.4,424.7 L84.1,423.5 L84.8,422.2 L84.7,421.4 L83.7,421.4 L82.6,422.4 L81.6,424.3 L81.3,426.8 L82.0,429.5 L79.5,427.2 L78.7,429.9 L78.9,432.6 L80.1,435.0 L81.8,436.6 L83.4,437.2 L84.4,436.9 L84.5,436.0 L83.5,435.0 L81.5,434.4 L79.0,434.5 L76.9,437.8 L76.5,440.6 L77.2,443.3 L78.9,445.5 L81.2,446.9 L83.1,446.5 L84.1,445.0 L86.1,446.3 L86.0,445.6 L84.8,445.4 L83.1,445.9 L81.2,447.2 L81.9,450.5 L83.3,452.7 L85.5,454.2 L86.6,450.3 L86.4,452.8 L86.9,455.0 L87.9,456.4 L88.8,457.0 L89.3,456.8 L89.1,456.0 L88.0,455.1 L86.2,454.4 L83.9,454.3 L82.7,459.1 L83.9,461.1 L85.7,462.6 L87.8,463.3 L89.8,463.4 L91.3,463.0 L92.1,462.4 L92.3,462.1 L91.8,462.3 L91.2,463.1 L90.6,464.5 L90.7,465.8 L91.1,467.2 L91.7,468.6 L92.4,469.9 L93.3,471.1 L94.3,472.2 L95.4,473.2 L96.5,474.0 L97.7,474.8 L98.7,474.3 L98.2,475.5 L97.8,476.6 L97.5,477.7 L97.3,478.7 L97.2,479.5 L97.0,480.1 L96.8,480.5 L96.5,480.7 L96.1,480.8 L95.5,480.8 L94.6,480.7 L93.6,480.6 L92.4,480.5 L91.0,480.6 L89.6,480.5 L88.0,480.6 L86.3,481.0 L84.7,481.7 L83.2,482.6 L81.8,483.7 L80.5,485.0 L79.6,486.4 L81.2,488.0 L81.5,489.7 L81.4,491.1 L81.4,492.3 L81.4,493.2 L81.3,493.9 L81.3,494.4 L81.3,494.6 L86.3,488.3 L86.3,488.7 L86.1,489.4 L86.0,490.3 L85.9,491.4 L86.0,492.7 L86.2,494.2 L86.5,495.8 L87.1,497.4 L85.7,493.8 L84.1,494.7 L82.5,495.8 L81.2,497.2 L80.1,498.7 L79.2,500.3 L78.5,502.0 L78.0,504.3 L78.3,506.0 L78.8,507.4 L79.4,508.6 L80.0,509.6 L80.6,510.4 L81.0,510.9 L81.3,511.2 L81.4,511.4 L81.2,511.4 L80.7,511.4 L80.0,511.4 L79.0,511.4 L77.9,511.6 L76.6,511.9 L75.2,512.4 L73.7,513.9 L73.3,513.0 L71.6,513.4 L69.9,514.1 L69.7,514.3 L68.0,514.8 L66.3,515.4 L63.6,520.8 L64.7,522.0 L65.9,523.1 L67.1,524.0 L68.2,524.6 L69.3,525.2 L69.2,527.6 L69.0,528.4 L68.8,529.0 L68.6,529.4 L68.3,529.6 L67.9,529.7 L67.4,529.6 L66.7,529.4 L65.8,529.2 L64.8,528.9 L64.1,528.9 L63.2,529.7 L62.3,530.8 L61.5,531.9 L60.8,533.2 L60.2,534.5 L59.8,535.9 L60.5,535.5 L59.3,536.1 L58.1,536.9 L56.9,537.6 L56.4,540.2 L55.1,540.1 L55.0,540.6 L54.8,541.7 L54.5,542.7 L54.2,543.6 L54.0,544.3 L53.9,545.0 L53.9,545.5 L54.0,545.9 L54.3,546.2 L54.7,546.6 L55.4,546.9 L56.0,546.3 L56.1,547.4 L56.2,548.6 L56.1,550.0 L55.9,551.5 L55.6,553.1 L55.1,554.6 L54.3,556.2 L53.4,557.6 L53.1,553.3 L54.5,554.4 L55.7,555.6 L55.7,560.0 L54.2,560.6 L52.8,561.0 L51.4,561.2 L50.3,561.3 L49.3,561.3 L48.5,561.2 L48.0,561.2 L47.7,561.2 L47.7,561.3 L47.8,561.7 L48.2,562.2 L48.7,563.0 L49.2,564.0 L50.3,565.6 L51.8,566.1 L53.3,566.8 L54.8,567.7 L51.8,573.1 L50.1,573.8 L48.2,574.3 L46.3,574.5 L44.4,574.4 L47.0,570.8 L46.7,572.6 L46.1,574.3 L45.4,575.7 L44.6,577.0 L43.8,578.0 L43.0,578.8 L42.4,579.3 L41.9,579.5 L41.6,579.7 L41.7,579.8 L42.0,579.9 L42.6,580.0 L43.4,580.2 L44.5,580.5 L45.7,581.0 L46.9,581.7 L48.2,582.7 L49.4,583.8 L50.5,585.2 L51.4,586.8 L50.5,591.0 L49.7,592.5 L48.6,594.0 L47.4,595.2 L46.7,595.2 L46.0,594.8 M6.0,414.9 L9.5,414.9 L14.4,414.3 L18.6,414.8 L22.1,415.3 L26.1,415.3 L29.8,414.9 L34.3,415.4 L37.9,415.3 L42.7,415.4 L45.9,415.0 L49.9,414.7 L54.2,414.8 L58.0,414.6 L63.2,414.3 L66.4,414.7 L70.2,414.3 L75.2,415.3 L78.8,414.9 M44.6,594.1 L48.7,593.8 L52.7,593.6 L56.3,594.0 L61.4,593.6 L65.5,593.7 L69.4,593.6 L73.4,594.5 L76.7,593.6 L81.6,594.6 L84.5,593.8 L89.0,594.7 L92.7,594.4 L96.7,593.9 L101.6,594.0 L105.6,594.1 L109.0,593.6 L113.6,593.8 L117.8,594.4 L121.9,594.5 L126.0,593.8 L129.6,593.6 L134.0,593.7 L137.6,594.4 L142.0,594.0 L145.5,593.7 L149.9,594.2 L153.7,594.4 L158.4,594.5 L162.4,593.9 L165.3,594.7 L170.3,594.1 L174.4,594.0 L178.6,593.7 L182.4,594.3 L186.2,594.1 L184.4,597.5 L183.8,601.9 L182.8,606.0 L180.3,610.3 L178.2,615.1 L177.9,619.4 L178.3,624.2 L178.2,628.8 L181.2,632.0 L183.8,636.2 L187.3,640.2 L188.3,644.2 L190.5,647.8 L191.9,651.7 L193.2,655.7 L193.6,660.4 L194.2,665.4 L198.8,667.6 M359.7,656.2 L358.1,651.4 L357.4,647.1 L357.8,641.8 L357.9,637.3 L357.4,633.4 L357.6,628.6 L358.5,624.2 L356.4,621.1 L353.7,618.8 L350.5,615.1 L347.8,611.8 L344.4,609.3 L341.4,606.0 L343.4,600.0 L344.8,594.5 L349.1,594.6 L352.4,594.9 L356.4,594.2 L361.1,593.8 L365.4,594.4 L368.9,594.5 L372.5,594.8 L376.8,594.7 L381.7,594.4 L385.7,594.9 L389.1,594.9 L393.5,594.9 L397.0,594.0 L401.3,594.1 L405.4,595.1 L409.2,595.0 L413.6,593.8 L416.7,595.0 L421.0,594.5 L425.2,594.2 L429.0,594.7 L434.1,594.3 L437.3,593.9 L441.2,593.8 L445.8,594.3 L449.9,593.9 L453.5,594.7 L457.0,594.7 L461.6,594.3 L465.9,594.3 L469.1,594.4 L474.1,595.0 L477.7,594.9 L481.9,594.1 L486.0,594.9 L489.7,594.7 L493.4,595.1 L498.2,593.9 L502.6,595.0 L505.3,594.0 L510.0,594.5 L514.0,594.3 L518.6,594.9 L523.9,594.0 L528.5,593.8 L532.6,593.7 L536.8,593.6 M547.7,619.5 L551.8,619.2 L555.4,620.2 L560.3,620.0 L564.1,620.2 L568.7,621.5 L573.0,621.3 L576.4,621.4 L580.2,621.1 L584.6,622.7 L588.6,623.0 L593.8,622.5 L597.3,623.2 L601.8,623.7 L605.1,623.2 L610.1,623.2 L613.7,624.7 L618.3,624.5 L622.3,624.2 L626.1,625.0 L630.8,625.6 L634.5,625.5 L639.1,625.4 L643.4,626.2 L647.1,626.3 L651.6,626.4 L655.2,626.2 L659.1,626.6 L663.5,626.6 L667.5,627.1 L671.5,627.0 L676.2,627.9 L679.3,628.8 L684.2,627.7 L688.5,629.1 L691.9,628.6 L696.1,629.4 L700.3,629.1 L704.7,629.6 L708.2,630.1 L712.5,630.4 L716.6,630.7 L720.6,629.9 L724.7,630.7 L728.9,631.0 L733.4,631.0 L736.7,631.0 L741.0,631.9 L745.2,631.7 L746.5,636.0 L746.7,641.1 L747.9,645.3 L752.2,647.8 L757.4,650.8 L757.6,645.8 L757.3,641.4 L757.5,637.2 L758.4,633.7 L758.8,629.0 L758.1,624.3 L757.3,620.2 L757.4,615.4 L761.4,613.4 L766.1,611.8 L769.7,609.9 L773.4,611.0 L778.2,613.0 L782.2,614.6 L786.0,615.4" stroke="#000" stroke-width="1" fill="none" shape-rendering="crispEdges"/>
<circle cx="407" cy="407" r="159.5" stroke="#d0d0d0" stroke-width="1" fill="none" shape-rendering="crispEdges"/>
<circle cx="407" cy="407" r="279.0" stroke="#d0d0d0" stroke-width="1" fill="none" shape-rendering="crispEdges"/>
<circle cx="407" cy="407" r="398.5" stroke="#d0d0d0" stroke-width="1" fill="none" shape-rendering="crispEdges"/>
<circle cx="407" cy="407" r="518.0" stroke="#d0d0d0" stroke-width="1" fill="none" shape-rendering="crispEdges"/>
<circle cx="407" cy="407" r="39.5" stroke="#f01010" stroke-width="1.2" fill="none"/>
</svg></div><!--/map-->


<!-- ring labels -->
<div style="position:absolute;left:6px;top:6px;width:800px;height:800px;overflow:hidden;">
<div class="a" style="left:387px;top:-1px;width:24px;height:9px;background:#5c4f4b;"></div>
<div class="a" style="left:389px;top:-2px;font-size:10px;letter-spacing:1.9px;color:#ffff99;">313</div>
<div class="a" style="left:387px;top:119px;width:24px;height:9px;background:#5c4f4b;"></div>
<div class="a" style="left:389px;top:118px;font-size:10px;letter-spacing:1.9px;color:#ffff99;">219</div>
<div class="a" style="left:387px;top:238px;width:24px;height:9px;background:#5c4f4b;"></div>
<div class="a" style="left:389px;top:237px;font-size:10px;letter-spacing:1.9px;color:#ffff99;">125</div>
<div class="a" style="left:393px;top:358px;font-size:10px;letter-spacing:2.5px;color:#ffff99;">31</div>

</div>
<div style="position:absolute;left:298px;top:773px;width:7px;height:1px;background:#f0a000;"></div>
<div style="position:absolute;left:39px;top:757px;width:4px;height:1px;background:#f0f000;"></div>
<!-- legend -->
<div style="position:absolute;left:8px;top:758px;width:246px;height:46px;background:#000;"></div><div style="position:absolute;left:9px;top:759px;width:244px;height:44px;box-sizing:border-box;border:1px solid #a0a0a0;background:#000;"></div>
<div class="a lg" style="left:13px;top:764px;color:#fff;">Symbols</div>
<div class="a lg" style="left:53px;top:764px;color:#fff;">-CG</div>
<div class="a lg" style="left:78px;top:764px;color:#fff;">-IC</div>
<div class="a lg" style="left:99px;top:764px;color:#fff;">+CG</div>
<div class="a lg" style="left:123px;top:764px;color:#fff;">+IC</div>
<div class="a lg" style="left:153px;top:764px;color:#fff;letter-spacing:-0.4px;">Strike age color codes</div>
<div class="a lg" style="left:13px;top:777px;color:#fff;">Recent</div>
<div class="a lg" style="left:13px;top:790px;color:#fff;">Old</div>
<div class="a lg" style="left:153px;top:777px;color:#e8d000;">15+</div>
<div class="a lg" style="left:188px;top:777px;color:#e8b000;">30+</div>
<div class="a lg" style="left:223px;top:777px;color:#e89800;">45+</div>
<div class="a lg" style="left:153px;top:790px;color:#e07800;">60+</div>
<div class="a lg" style="left:188px;top:790px;color:#e05800;">75+</div>
<div class="a lg" style="left:223px;top:790px;color:#e83000;">90+</div>
<svg style="position:absolute;left:0;top:0;" width="260" height="812">
<g fill="none" stroke-width="1.1">
<g stroke="#00e8e8">
<circle cx="60.5" cy="780.5" r="4.2"/><path d="M58,780.5H63"/>
<path d="M82,780.5H89"/>
<circle cx="110.5" cy="780.5" r="4.2"/><path d="M108,780.5H113 M110.5,778V783"/>
<path d="M131,780.5H139 M135.5,777V784"/>
</g>
<g stroke="#f0f000">
<circle cx="60.5" cy="793.5" r="4.2"/><path d="M58,793.5H63"/>
<path d="M82,793.5H89"/>
<circle cx="110.5" cy="793.5" r="4.2"/><path d="M108,793.5H113 M110.5,791V796"/>
<path d="M131,793.5H139 M135.5,790V797"/>
</g>
</g>
</svg>

<!-- copyright -->
<div style="position:absolute;left:685px;top:792px;width:121px;height:14px;background:#000;"></div>
<div class="a" style="left:689px;top:795px;font-size:10px;letter-spacing:-0.3px;color:#fff;">©2005 Astrogenic Systems</div>

<!-- PANEL -->
<div class="box" style="left:812px;top:8px;width:320px;height:320px;"></div>
<div class="box" style="left:812px;top:333px;width:320px;height:115px;"></div>
<div class="box" style="left:812px;top:453px;width:320px;height:350px;"></div>

<div class="btn" style="left:819px;top:16px;width:59px;height:19px;background:#600000;"></div>
<div class="a b" style="left:824px;top:20px;font-size:12px;letter-spacing:0.2px;color:#d8d8d8;transform:scaleX(1.06);transform-origin:0 0;">STRIKE</div>
<div class="btn" style="left:883px;top:16px;width:59px;height:19px;background:#333;"></div>
<div class="a b" style="left:890px;top:20px;font-size:12px;letter-spacing:0.3px;color:#d8d8d8;transform:scaleX(1.12);transform-origin:0 0;">NOISE</div>
<div class="btn" style="left:994px;top:16px;width:129px;height:19px;background:#333;"></div>
<div class="a b" style="left:999px;top:20px;font-size:12px;letter-spacing:0.3px;color:#fff;transform:scaleX(1.14);transform-origin:0 0;">Bng 225°</div>
<div class="a b" style="left:1076px;top:20px;font-size:12px;letter-spacing:0.3px;color:#00ff00;transform:scaleX(1.19);transform-origin:0 0;">398mi</div>

<div class="btn" style="left:821px;top:64px;width:83px;height:17px;background:#606060;"></div>
<div class="btn" style="left:931px;top:64px;width:83px;height:17px;background:#606060;"></div>
<div class="btn" style="left:1041px;top:64px;width:83px;height:17px;background:#606060;"></div>
<div class="a n" style="left:821px;width:83px;text-align:center;top:67px;font-size:12px;letter-spacing:0.6px;">Strikes/min</div>
<div class="a n" style="left:931px;width:83px;text-align:center;top:67px;font-size:12px;letter-spacing:0.6px;">Close/min</div>
<div class="a n" style="left:1041px;width:83px;text-align:center;top:67px;font-size:12px;letter-spacing:0.6px;">Noises/min</div>

<div class="a b r" style="left:804px;width:100px;top:88px;font-size:29px;color:#fff;transform:scaleX(1.3);transform-origin:100% 50%;">0</div>
<div class="a b r" style="left:914px;width:100px;top:88px;font-size:29px;color:#fff;transform:scaleX(1.3);transform-origin:100% 50%;">0</div>
<div class="a b r" style="left:1024px;width:100px;top:88px;font-size:29px;color:#c0c0c0;transform:scaleX(1.3);transform-origin:100% 50%;">0</div>

<div class="a n r" style="left:803px;width:100px;top:132px;">Total Strikes</div>
<div class="a n r" style="left:913px;width:100px;top:132px;">Total Close</div>
<div class="a n r g" style="left:1023px;width:100px;top:132px;">Total Noises</div>
<div class="a n r" style="left:803px;width:100px;top:150px;">14</div>
<div class="a n r" style="left:913px;width:100px;top:150px;">0</div>
<div class="a n r" style="left:1023px;width:100px;top:150px;">66</div>

<div class="a n g" style="left:821px;top:204px;letter-spacing:0.68px;">Lightning type distribution</div>
<div style="position:absolute;left:821px;top:217px;width:303px;height:1px;background:#a0a0a0;"></div>


<div class="a n b" style="left:821px;top:226px;letter-spacing:0px;">Cloud-ground</div>
<div class="a n b" style="left:913px;top:226px;">+</div>
<div class="bar" style="left:925px;top:227px;"><i style="width:5px;background:#ff0000;"></i></div>
<div class="a n b" style="left:979px;top:226px;letter-spacing:0.9px;">7%</div>
<div class="a n b" style="left:1015px;top:226px;">−</div>
<div class="bar" style="left:1028px;top:227px;"><i style="width:25px;background:#99ccff;"></i></div>
<div class="a n b" style="left:1082px;top:226px;letter-spacing:0.9px;">50%</div>
<div class="a n g b" style="left:821px;top:250px;letter-spacing:0.2px;">Count</div>
<div class="a n b" style="left:926px;top:250px;">1</div>
<div class="a n b" style="left:1029px;top:250px;">7</div>

<div class="a n b" style="left:821px;top:280px;letter-spacing:0px;">Intracloud</div>
<div class="a n b" style="left:913px;top:280px;">+</div>
<div class="bar" style="left:925px;top:281px;"><i style="width:15px;background:#e860a8;"></i></div>
<div class="a n b" style="left:979px;top:280px;letter-spacing:0.9px;">29%</div>
<div class="a n b" style="left:1015px;top:280px;">−</div>
<div class="bar" style="left:1028px;top:281px;"><i style="width:7px;background:#00ff00;"></i></div>
<div class="a n b" style="left:1082px;top:280px;letter-spacing:0.9px;">14%</div>
<div class="a n g b" style="left:821px;top:304px;letter-spacing:0.2px;">Count</div>
<div class="a n b" style="left:926px;top:304px;">4</div>
<div class="a n b" style="left:1029px;top:304px;">2</div>

<div class="a b" style="left:822px;top:339px;font-size:17px;letter-spacing:0.2px;color:#00ff00;transform:scaleX(1.17);transform-origin:0 0;">2/25/2026 1:55:02 PM</div>
<div style="position:absolute;left:821px;top:358px;width:303px;height:1px;background:#a0a0a0;"></div>

<div class="a n" style="left:821px;top:377px;">Squelch</div>
<div class="a n" style="left:909px;top:377px;">0</div>
<div class="a n" style="left:981px;top:377px;">Upload</div>
<div class="a n g" style="left:1061px;top:377px;">Disabled</div>
<div class="a n" style="left:821px;top:397px;">Persistence</div>
<div class="a n" style="left:909px;top:397px;">90 min</div>
<div class="a n" style="left:981px;top:397px;">Capture</div>
<div class="a n" style="left:1061px;top:397px;color:#00e000;">Active</div>
<div class="a n" style="left:821px;top:417px;">Range</div>
<div class="a n" style="left:909px;top:417px;">313 mi</div>
<div class="a n" style="left:981px;top:417px;">Receiver</div>
<div class="a n" style="left:1061px;top:417px;color:#00e000;">Enabled</div>

<div class="a n g" style="left:821px;top:464px;">Uptime</div>
<div class="a n" style="left:909px;top:464px;">1057:40</div>
<div class="a n g" style="left:981px;top:464px;">Peak time</div>
<div class="a n g" style="left:1061px;top:464px;">Plot</div>
<div class="a n g" style="left:821px;top:487px;">Peak rate</div>
<div class="a n" style="left:909px;top:487px;">2/min</div>
<div class="a n" style="left:981px;top:487px;">1:04 PM</div>
<div class="a n" style="left:1061px;top:487px;">Strike</div>
<div class="a n g" style="left:822px;top:517px;">Trend graph</div>
<div class="a n" style="left:908px;top:517px;">60 min</div>

<svg style="position:absolute;left:0;top:0;" width="1138" height="812">
<g stroke="#c0c0c0" stroke-width="1" fill="none" shape-rendering="crispEdges">
<path d="M822,777.5H1088.5V542"/>
<path d="M1084,542.5H1088 M1086,581.5H1090 M1084,620.5H1088 M1086,659.5H1090 M1084,698.5H1088 M1086,738.5H1090"/>
<path d="M822.5,775V779 M866.5,775V779 M910.5,775V779 M955.5,775V779 M999.5,775V779 M1043.5,775V779"/>
</g>
<g stroke="#fff" stroke-width="1" fill="none" shape-rendering="crispEdges">
<path d="M856.5,777V773H857.5V765H858.5V761.5H861.5V770H862.5V777"/>
<path d="M947.5,777V773H948.5V769.5H951.5V773H952.5V777"/>
<path d="M1055.5,777V773H1056.5V769.5H1059.5V773H1060.5V777"/>
</g>
<path d="M857.5,775L858.5,770H861L861.8,774" stroke="#00ff00" stroke-width="1" fill="none"/>
</svg>
<div class="a g" style="left:1092px;top:537px;font-size:12px;">30</div>
<div class="a g" style="left:1092px;top:615px;font-size:12px;">20</div>
<div class="a g" style="left:1092px;top:693px;font-size:12px;">10</div>
<div class="a g" style="left:820px;top:783px;font-size:12px;">60</div>
<div class="a g" style="left:864px;top:783px;font-size:12px;">50</div>
<div class="a g" style="left:908px;top:783px;font-size:12px;">40</div>
<div class="a g" style="left:953px;top:783px;font-size:12px;">30</div>
<div class="a g" style="left:997px;top:783px;font-size:12px;">20</div>
<div class="a g" style="left:1042px;top:783px;font-size:12px;">10</div>
<div class="a g" style="left:1087px;top:783px;font-size:12px;">0</div>
<div class="a g" style="left:1100px;top:783px;font-size:12px;">min</div>
</body></html>
